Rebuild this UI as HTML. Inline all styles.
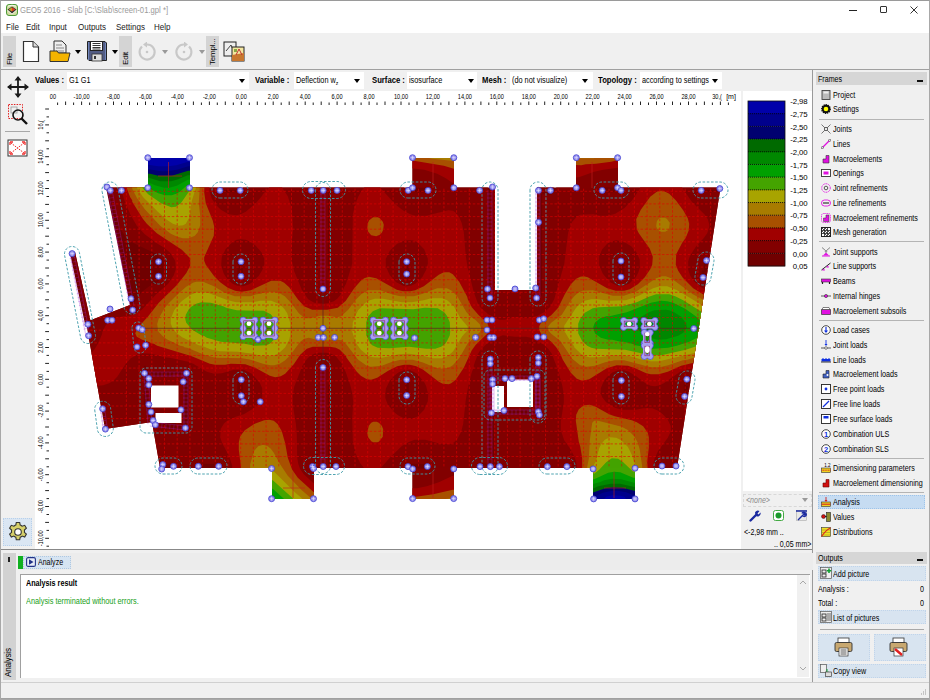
<!DOCTYPE html>
<html><head><meta charset="utf-8">
<style>
*{box-sizing:border-box;margin:0;padding:0}
html,body{width:930px;height:700px;overflow:hidden;background:#f0f0f0;font-family:"Liberation Sans",sans-serif;color:#000}
.a{position:absolute}
.t{position:absolute;white-space:nowrap;font-size:8.6px;line-height:10px;transform-origin:0 0;transform:scaleX(0.85)}
.b{font-weight:bold}
.vl{position:absolute;background:#d4d4d4}
.vt{position:absolute;white-space:nowrap;font-size:8px;transform:rotate(-90deg);transform-origin:0 0;letter-spacing:-0.2px}
.dd{position:absolute;background:#fff;height:17px;top:72px}
.arr{position:absolute;width:0;height:0;border-left:3px solid transparent;border-right:3px solid transparent;border-top:4px solid #000}
.rp .t{font-size:8.6px;transform:scaleX(0.835)}
.lb{font-size:9px!important;transform:scaleX(0.855)!important}
</style></head><body>
<div class="a" style="left:0;top:0;width:930px;height:700px;border:1px solid #a8a8a8;border-top-color:#9a9a9a;pointer-events:none;z-index:50"></div>
<!-- title bar -->
<div class="a" style="left:0;top:0;width:930px;height:33px;background:#fff"></div>
<svg class="a" style="left:5.5px;top:3.5px" width="12" height="12" viewBox="0 0 12 12">
<rect x="0.5" y="0.5" width="11" height="11" rx="2.5" fill="#d0dca0" stroke="#4c9a38" stroke-width="1"/>
<path d="M1.5 5.5L6 2.5L10.5 5.5L6 9.5Z" fill="#333"/>
<path d="M2.6 5.4L6 3.2V7.6Z" fill="#c89a20"/><path d="M6 3.2L9.4 5.4L6 7.6Z" fill="#e03a20"/>
<path d="M1.5 6.5L6 10L10.5 6.5" fill="none" stroke="#eee" stroke-width="0.8"/>
<path d="M2 2.2L6 1.2L10 2.2" fill="none" stroke="#fff" stroke-width="0.8"/>
</svg>
<div class="t" style="left:20px;top:5px;color:#9a9a9a;font-size:9.6px;transform:scaleX(0.8)">GEO5 2016 - Slab [C:\Slab\screen-01.gpl *]</div>
<div class="a" style="left:849px;top:10px;width:8px;height:1px;background:#222"></div>
<div class="a" style="left:880px;top:6px;width:7px;height:7px;border:1px solid #333;border-radius:1px"></div>
<svg class="a" style="left:910px;top:6px" width="8" height="8"><path d="M0.5 0.5L7.5 7.5M7.5 0.5L0.5 7.5" stroke="#333" stroke-width="1"/></svg>
<!-- menu -->
<div class="t" style="left:6px;top:22px;font-size:9px;transform:scaleX(0.89);color:#222">File</div>
<div class="t" style="left:26px;top:22px;font-size:9px;transform:scaleX(0.89);color:#222">Edit</div>
<div class="t" style="left:49px;top:22px;font-size:9px;transform:scaleX(0.89);color:#222">Input</div>
<div class="t" style="left:78px;top:22px;font-size:9px;transform:scaleX(0.89);color:#222">Outputs</div>
<div class="t" style="left:116px;top:22px;font-size:9px;transform:scaleX(0.89);color:#222">Settings</div>
<div class="t" style="left:154px;top:22px;font-size:9px;transform:scaleX(0.89);color:#222">Help</div>
<!-- toolbar -->
<div class="a" style="left:0;top:33px;width:930px;height:36px;background:#f0f0f0"></div>
<div class="a" style="left:0;top:69px;width:930px;height:1px;background:#a0a0a0"></div>
<div class="vl" style="left:3px;top:36px;width:13px;height:31px"></div>
<div class="vt" style="left:5px;top:65px;font-size:8px">File</div>
<div class="vl" style="left:119px;top:36px;width:13px;height:31px"></div>
<div class="vt" style="left:121px;top:65px;font-size:8px">Edit</div>
<div class="vl" style="left:206px;top:36px;width:13px;height:31px"></div>
<div class="vt" style="left:208px;top:65px;font-size:8px">Templ...</div>
<svg class="a" style="left:22px;top:40px" width="18" height="23" viewBox="0 0 18 23"><path d="M1.5 1.5H11L16.5 7V21.5H1.5Z" fill="#fff" stroke="#333" stroke-width="1.2"/><path d="M11 1.5V7H16.5" fill="#ddd" stroke="#333" stroke-width="1"/></svg>
<svg class="a" style="left:49px;top:40px" width="22" height="23" viewBox="0 0 22 23"><path d="M5 1H13L17 5V13H5Z" fill="#eee" stroke="#333"/><path d="M7 5H13M7 8H15M7 11H15" stroke="#888"/><path d="M1 11H8L9.5 13H21L19 21.5H1Z" fill="#f4b400" stroke="#333"/></svg>
<div class="arr" style="left:75px;top:50px"></div>
<svg class="a" style="left:86px;top:40px" width="22" height="22" viewBox="0 0 22 22"><path d="M1.5 1.5H19L20.5 3V20.5H3L1.5 19Z" fill="#525c84" stroke="#222"/><rect x="4.5" y="1.5" width="12" height="9" fill="#fff" stroke="#222" stroke-width="1"/><path d="M6.5 3.5H14.5M6.5 5.5H14.5M6.5 7.5H14.5M6.5 9H14.5" stroke="#333" stroke-width="1"/><path d="M2.5 2V20M19.5 3V20" stroke="#7a90c8" stroke-width="0.8"/><rect x="6" y="14" width="10" height="7" fill="#ddd" stroke="#333" stroke-width="0.8"/><rect x="8" y="16" width="2" height="3" fill="#333"/></svg>
<div class="arr" style="left:112px;top:50px"></div>
<svg class="a" style="left:137px;top:42px" width="20" height="20" viewBox="0 0 20 20"><path d="M5 4.5 A7.5 7.5 0 1 0 10 2.5" fill="none" stroke="#c8c8c8" stroke-width="2.2"/><path d="M10 -0.5 L6 2.5 L10 5.5Z" fill="#c8c8c8"/><circle cx="10" cy="10" r="1.3" fill="#c8c8c8"/></svg>
<div class="arr" style="left:162px;top:50px;border-top-color:#999"></div>
<svg class="a" style="left:174px;top:42px" width="20" height="20" viewBox="0 0 20 20"><path d="M15 4.5 A7.5 7.5 0 1 1 10 2.5" fill="none" stroke="#c8c8c8" stroke-width="2.2"/><path d="M10 -0.5 L14 2.5 L10 5.5Z" fill="#c8c8c8"/><circle cx="10" cy="10" r="1.3" fill="#c8c8c8"/></svg>
<div class="arr" style="left:199px;top:50px;border-top-color:#999"></div>
<svg class="a" style="left:223px;top:41px" width="23" height="22" viewBox="0 0 23 22"><rect x="1" y="1" width="12" height="14" fill="#eee" stroke="#222"/><path d="M3 10L8 4L11 11" stroke="#444" fill="none"/><rect x="9" y="6" width="12" height="14" fill="#f4e6a0" stroke="#222"/><path d="M9 14L21 12V20H9Z" fill="#c87830"/><path d="M13 14L16 8L19 14" stroke="#c03030" fill="none"/><rect x="11" y="8" width="3" height="3" fill="#8a4" /></svg>
<!-- main area left tool column -->
<svg class="a" style="left:7px;top:76px" width="22" height="22" viewBox="0 0 22 22"><path d="M11 1V21M1 11H21" stroke="#1a1a1a" stroke-width="1.8"/><path d="M11 0L7.5 4.5H14.5Z M11 22L7.5 17.5H14.5Z M0 11L4.5 7.5V14.5Z M22 11L17.5 7.5V14.5Z" fill="#1a1a1a"/></svg>
<svg class="a" style="left:7px;top:103px" width="22" height="22" viewBox="0 0 22 22"><rect x="1.5" y="1.5" width="14" height="14" fill="none" stroke="#e02020" stroke-dasharray="1.5 1.2"/><rect x="4" y="4" width="6" height="6" fill="none" stroke="#999" stroke-width="0.8"/><circle cx="11" cy="12" r="5" fill="none" stroke="#111" stroke-width="1.6"/><path d="M14.5 15.5L20 21" stroke="#111" stroke-width="2.4"/></svg>
<div class="a" style="left:5px;top:131px;width:25px;height:1px;background:#a8a8a8"></div>
<svg class="a" style="left:7px;top:139px" width="22" height="18" viewBox="0 0 22 18"><rect x="1" y="1" width="19" height="16" fill="#fff" stroke="#333" stroke-width="1"/><path d="M4 4L17 14M17 4L4 14" stroke="#f03030" stroke-width="1" stroke-dasharray="1.5 1"/><path d="M3 3h3M3 3v3M18 3h-3M18 3v3M3 15h3M3 15v-3M18 15h-3M18 15v-3" stroke="#f03030" stroke-width="1.3"/></svg>
<div class="a" style="left:3px;top:518px;width:29px;height:28px;background:#dae6f3;border:1px dotted #b8d0ea"></div>
<svg class="a" style="left:7px;top:521px" width="22" height="22" viewBox="0 0 22 22"><path id="gear" d="M9.3 1.5h3.4l0.5 2.6a7.5 7.5 0 0 1 2 1.1l2.5-0.9 1.7 2.9-2 1.8a7.5 7.5 0 0 1 0 2.3l2 1.8-1.7 2.9-2.5-0.9a7.5 7.5 0 0 1-2 1.1l-0.5 2.6h-3.4l-0.5-2.6a7.5 7.5 0 0 1-2-1.1l-2.5 0.9-1.7-2.9 2-1.8a7.5 7.5 0 0 1 0-2.3l-2-1.8 1.7-2.9 2.5 0.9a7.5 7.5 0 0 1 2-1.1z" fill="#d6d06a" stroke="#333" stroke-width="1.1"/><circle cx="11" cy="11" r="3.3" fill="#fff" stroke="#333" stroke-width="1.1"/></svg>
<!-- control bar -->
<div class="t b lb" style="left:34.5px;top:75px">Values :</div>
<div class="dd" style="left:67px;width:182px"></div>
<div class="t" style="left:69px;top:75px">G1 G1</div>
<div class="arr" style="left:239px;top:79px"></div>
<div class="t b lb" style="left:255.3px;top:75px">Variable :</div>
<div class="dd" style="left:294px;width:70px"></div>
<div class="t" style="left:296px;top:75px">Deflection w<sub style="font-size:6px;vertical-align:-2px">z</sub></div>
<div class="arr" style="left:354px;top:79px"></div>
<div class="t b lb" style="left:371.5px;top:75px">Surface :</div>
<div class="dd" style="left:407px;width:70px"></div>
<div class="t" style="left:409px;top:75px">isosurface</div>
<div class="arr" style="left:468px;top:79px"></div>
<div class="t b lb" style="left:482.3px;top:75px">Mesh :</div>
<div class="dd" style="left:510px;width:83px"></div>
<div class="t" style="left:512px;top:75px">(do not visualize)</div>
<div class="arr" style="left:582px;top:79px"></div>
<div class="t b lb" style="left:597.5px;top:75px">Topology :</div>
<div class="dd" style="left:640px;width:82px"></div>
<div class="t" style="left:642px;top:75px">according to settings</div>
<div class="arr" style="left:712px;top:79px"></div>
<!-- drawing area -->
<div class="a" style="left:35px;top:91px;width:706px;height:458px;background:#fff"></div>
<svg class="a" style="left:0;top:0" width="930" height="700" viewBox="0 0 930 700">
<path d="M57.6 102.5V105 M65.6 101.5V105 M73.6 102.5V105 M81.6 101.5V105 M89.6 102.5V105 M97.6 101.5V105 M105.6 102.5V105 M113.5 101.5V105 M121.5 102.5V105 M129.5 101.5V105 M137.5 102.5V105 M145.5 101.5V105 M153.5 102.5V105 M161.4 101.5V105 M169.4 102.5V105 M177.4 101.5V105 M185.4 102.5V105 M193.4 101.5V105 M201.4 102.5V105 M209.4 101.5V105 M217.3 102.5V105 M225.3 101.5V105 M233.3 102.5V105 M241.3 101.5V105 M249.3 102.5V105 M257.3 101.5V105 M265.3 102.5V105 M273.2 101.5V105 M281.2 102.5V105 M289.2 101.5V105 M297.2 102.5V105 M305.2 101.5V105 M313.2 102.5V105 M321.2 101.5V105 M329.1 102.5V105 M337.1 101.5V105 M345.1 102.5V105 M353.1 101.5V105 M361.1 102.5V105 M369.1 101.5V105 M377.0 102.5V105 M385.0 101.5V105 M393.0 102.5V105 M401.0 101.5V105 M409.0 102.5V105 M417.0 101.5V105 M425.0 102.5V105 M432.9 101.5V105 M440.9 102.5V105 M448.9 101.5V105 M456.9 102.5V105 M464.9 101.5V105 M472.9 102.5V105 M480.9 101.5V105 M488.8 102.5V105 M496.8 101.5V105 M504.8 102.5V105 M512.8 101.5V105 M520.8 102.5V105 M528.8 101.5V105 M536.7 102.5V105 M544.7 101.5V105 M552.7 102.5V105 M560.7 101.5V105 M568.7 102.5V105 M576.7 101.5V105 M584.7 102.5V105 M592.6 101.5V105 M600.6 102.5V105 M608.6 101.5V105 M616.6 102.5V105 M624.6 101.5V105 M632.6 102.5V105 M640.5 101.5V105 M648.5 102.5V105 M656.5 101.5V105 M664.5 102.5V105 M672.5 101.5V105 M680.5 102.5V105 M688.5 101.5V105 M696.4 102.5V105 M704.4 101.5V105 M712.4 102.5V105 M720.4 101.5V105 M728.4 102.5V105 M46.5 546.2H49 M45.2 538.3H49 M46.5 530.4H49 M45.2 522.4H49 M46.5 514.5H49 M45.2 506.5H49 M46.5 498.6H49 M45.2 490.6H49 M46.5 482.7H49 M45.2 474.7H49 M46.5 466.8H49 M45.2 458.8H49 M46.5 450.9H49 M45.2 442.9H49 M46.5 434.9H49 M45.2 427.0H49 M46.5 419.1H49 M45.2 411.1H49 M46.5 403.2H49 M45.2 395.2H49 M46.5 387.2H49 M45.2 379.3H49 M46.5 371.4H49 M45.2 363.4H49 M46.5 355.4H49 M45.2 347.5H49 M46.5 339.6H49 M45.2 331.6H49 M46.5 323.7H49 M45.2 315.7H49 M46.5 307.8H49 M45.2 299.8H49 M46.5 291.9H49 M45.2 283.9H49 M46.5 275.9H49 M45.2 268.0H49 M46.5 260.1H49 M45.2 252.1H49 M46.5 244.2H49 M45.2 236.2H49 M46.5 228.2H49 M45.2 220.3H49 M46.5 212.3H49 M45.2 204.4H49 M46.5 196.5H49 M45.2 188.5H49 M46.5 180.6H49 M45.2 172.6H49 M46.5 164.7H49 M45.2 156.7H49 M46.5 148.8H49 M45.2 140.8H49 M46.5 132.8H49 M45.2 124.9H49 M46.5 116.9H49 M45.2 109.0H49" stroke="#222" stroke-width="1"/>
<text transform="translate(53.0 99.2) scale(0.82 1)" text-anchor="middle" font-family="Liberation Sans" font-size="6.9">00</text>
<text transform="translate(81.6 99.2) scale(0.82 1)" text-anchor="middle" font-family="Liberation Sans" font-size="6.9">-10,00</text>
<text transform="translate(113.5 99.2) scale(0.82 1)" text-anchor="middle" font-family="Liberation Sans" font-size="6.9">-8,00</text>
<text transform="translate(145.5 99.2) scale(0.82 1)" text-anchor="middle" font-family="Liberation Sans" font-size="6.9">-6,00</text>
<text transform="translate(177.4 99.2) scale(0.82 1)" text-anchor="middle" font-family="Liberation Sans" font-size="6.9">-4,00</text>
<text transform="translate(209.4 99.2) scale(0.82 1)" text-anchor="middle" font-family="Liberation Sans" font-size="6.9">-2,00</text>
<text transform="translate(241.3 99.2) scale(0.82 1)" text-anchor="middle" font-family="Liberation Sans" font-size="6.9">0,00</text>
<text transform="translate(273.2 99.2) scale(0.82 1)" text-anchor="middle" font-family="Liberation Sans" font-size="6.9">2,00</text>
<text transform="translate(305.2 99.2) scale(0.82 1)" text-anchor="middle" font-family="Liberation Sans" font-size="6.9">4,00</text>
<text transform="translate(337.1 99.2) scale(0.82 1)" text-anchor="middle" font-family="Liberation Sans" font-size="6.9">6,00</text>
<text transform="translate(369.1 99.2) scale(0.82 1)" text-anchor="middle" font-family="Liberation Sans" font-size="6.9">8,00</text>
<text transform="translate(401.0 99.2) scale(0.82 1)" text-anchor="middle" font-family="Liberation Sans" font-size="6.9">10,00</text>
<text transform="translate(432.9 99.2) scale(0.82 1)" text-anchor="middle" font-family="Liberation Sans" font-size="6.9">12,00</text>
<text transform="translate(464.9 99.2) scale(0.82 1)" text-anchor="middle" font-family="Liberation Sans" font-size="6.9">14,00</text>
<text transform="translate(496.8 99.2) scale(0.82 1)" text-anchor="middle" font-family="Liberation Sans" font-size="6.9">16,00</text>
<text transform="translate(528.8 99.2) scale(0.82 1)" text-anchor="middle" font-family="Liberation Sans" font-size="6.9">18,00</text>
<text transform="translate(560.7 99.2) scale(0.82 1)" text-anchor="middle" font-family="Liberation Sans" font-size="6.9">20,00</text>
<text transform="translate(592.6 99.2) scale(0.82 1)" text-anchor="middle" font-family="Liberation Sans" font-size="6.9">22,00</text>
<text transform="translate(624.6 99.2) scale(0.82 1)" text-anchor="middle" font-family="Liberation Sans" font-size="6.9">24,00</text>
<text transform="translate(656.5 99.2) scale(0.82 1)" text-anchor="middle" font-family="Liberation Sans" font-size="6.9">26,00</text>
<text transform="translate(688.5 99.2) scale(0.82 1)" text-anchor="middle" font-family="Liberation Sans" font-size="6.9">28,00</text>
<text transform="translate(717.0 99.2) scale(0.82 1)" text-anchor="middle" font-family="Liberation Sans" font-size="6.9">30,(</text>
<text x="731" y="99.2" text-anchor="middle" font-family="Liberation Sans" font-size="7">[m]</text>
<text transform="translate(42.6 538.3) rotate(-90) scale(0.82 1)" text-anchor="middle" font-family="Liberation Sans" font-size="6.9">-10,00</text>
<text transform="translate(42.6 506.5) rotate(-90) scale(0.82 1)" text-anchor="middle" font-family="Liberation Sans" font-size="6.9">-8,00</text>
<text transform="translate(42.6 474.7) rotate(-90) scale(0.82 1)" text-anchor="middle" font-family="Liberation Sans" font-size="6.9">-6,00</text>
<text transform="translate(42.6 442.9) rotate(-90) scale(0.82 1)" text-anchor="middle" font-family="Liberation Sans" font-size="6.9">-4,00</text>
<text transform="translate(42.6 411.1) rotate(-90) scale(0.82 1)" text-anchor="middle" font-family="Liberation Sans" font-size="6.9">-2,00</text>
<text transform="translate(42.6 379.3) rotate(-90) scale(0.82 1)" text-anchor="middle" font-family="Liberation Sans" font-size="6.9">0,00</text>
<text transform="translate(42.6 347.5) rotate(-90) scale(0.82 1)" text-anchor="middle" font-family="Liberation Sans" font-size="6.9">2,00</text>
<text transform="translate(42.6 315.7) rotate(-90) scale(0.82 1)" text-anchor="middle" font-family="Liberation Sans" font-size="6.9">4,00</text>
<text transform="translate(42.6 283.9) rotate(-90) scale(0.82 1)" text-anchor="middle" font-family="Liberation Sans" font-size="6.9">6,00</text>
<text transform="translate(42.6 252.1) rotate(-90) scale(0.82 1)" text-anchor="middle" font-family="Liberation Sans" font-size="6.9">8,00</text>
<text transform="translate(42.6 220.3) rotate(-90) scale(0.82 1)" text-anchor="middle" font-family="Liberation Sans" font-size="6.9">10,00</text>
<text transform="translate(42.6 188.5) rotate(-90) scale(0.82 1)" text-anchor="middle" font-family="Liberation Sans" font-size="6.9">12,00</text>
<text transform="translate(42.6 156.7) rotate(-90) scale(0.82 1)" text-anchor="middle" font-family="Liberation Sans" font-size="6.9">14,00</text>
<text transform="translate(42.6 124.9) rotate(-90) scale(0.82 1)" text-anchor="middle" font-family="Liberation Sans" font-size="6.9">16,(</text>
<defs><clipPath id="slab"><path d="M106 187.5L495 187.5L495 290L537 290L537 187.5L720.5 187.5L677 468L160 468L152 422L105 429L86 322L130 305ZM148 158H190V188H148ZM412.5 158H454V188H412.5ZM576 158H618V188H576ZM272 468H314V499H272ZM412.5 468H454V499H412.5ZM593 468H635V499H593ZM70 253L75 252L91 323L85 324Z"/></clipPath><clipPath id="mainc"><path d="M106 187.5L495 187.5L495 290L537 290L537 187.5L720.5 187.5L677 468L160 468L152 422L105 429L86 322L130 305Z"/></clipPath></defs>
<g clip-path="url(#slab)">
<rect x="60" y="150" width="670" height="360" fill="#700000"/>
<path fill="#820000" fill-rule="evenodd" d="M411.8 466.2L410.2 466.2L409.8 467.8L408.2 467.8L408.2 470.2L409.8 469.8L410.2 467.8L411.8 467.8ZM214.2 466.2L214.2 467.8L215.8 467.8L215.8 466.2ZM200.2 466.2L200.2 467.8L201.8 467.8L201.8 466.2ZM170.2 466.2L170.2 467.8L171.8 467.8L171.8 466.2ZM168.2 424.2L168.2 425.8L169.8 425.8L169.8 424.2ZM102.2 424.2L102.2 425.8L103.8 425.8L103.8 424.2ZM185.2 418.8L184.8 419.2L185.8 419.8ZM146.2 402.2L146.8 403.8L147.2 403.2ZM685.8 393.8L684.2 395.2L685.2 396.2ZM146.8 376.2L146.2 389.2L147.2 388.8L148.2 389.8L148.2 406.2L150.2 406.8L150.2 411.2L151.2 410.8L152.2 411.8L152.2 415.8L154.2 415.8L154.2 414.2L155.8 413.8L156.2 415.2L157.8 415.2L158.8 417.2L160.8 418.8L159.8 420.2L158.2 420.2L157.8 418.2L156.2 418.2L156.2 419.8L154.2 420.2L154.2 421.8L155.8 421.8L156.2 419.8L157.8 419.8L158.2 421.8L159.8 421.8L160.2 419.8L177.8 419.8L178.2 421.2L176.2 422.2L176.2 425.8L183.8 425.8L183.8 379.2L184.8 376.2L183.2 374.8L180.2 374.2L171.8 374.2L171.8 375.2L170.2 376.2ZM179.2 417.2L179.8 419.2L178.2 420.2L177.8 418.2ZM180.8 415.2L181.8 416.8L180.2 417.8L179.8 416.2ZM150.8 404.2L152.2 404.8L152.2 406.2L151.2 407.2L150.2 406.8ZM153.2 401.8L154.2 402.8L153.8 404.8L151.8 403.8ZM155.2 399.8L156.8 400.8L155.8 402.8L153.8 401.8ZM159.8 395.8L160.8 397.2L156.8 400.8L155.8 398.8L157.8 397.8L158.8 395.8ZM158.2 393.8L159.2 393.2L162.8 395.8L160.2 396.2L158.2 394.8ZM157.2 391.2L158.2 392.2L157.8 393.8L156.2 393.2ZM154.2 390.2L155.8 389.8L156.2 391.2L155.2 391.8ZM70.2 342.2L70.2 343.8L71.8 343.8L71.8 342.2ZM78.2 340.2L78.2 341.8L79.8 341.8L79.8 340.2ZM82.2 338.2L82.2 339.8L83.8 339.8L83.8 338.2ZM84.2 328.8L85.8 329.2L85.8 328.2ZM74.8 276.2L75.2 277.2L75.8 276.8ZM746.2 268.2L746.2 269.8L747.8 269.8L747.8 268.2ZM706.2 264.2L706.2 265.8L707.8 265.8L707.8 264.2ZM708.2 260.2L708.2 261.8L735.8 261.8L735.8 260.2ZM82.2 218.8L82.8 219.8L83.2 219.2ZM80.2 216.8L80.2 217.8L81.2 217.8L81.2 216.8ZM106.8 190.2L106.8 191.2L107.8 191.2L107.8 190.2ZM408.2 185.8L408.2 189.8L411.8 189.8L411.8 188.2L410.2 188.2L409.8 186.2ZM702.2 80.2L702.2 189.8L872.8 189.8L888.2 178.8L894.2 172.2L898.2 165.8L900.2 159.2L899.8 150.2L897.2 144.2L892.2 137.2L884.8 130.2L877.8 125.2L855.8 113.8L839.2 107.2L822.2 101.8L786.2 92.8L747.8 85.8ZM2.2 -0.8L2.2 1.8L0.2 2.2L0.2 3.8L1.8 3.8L2.2 5.8L3.8 5.8L3.8 4.2L1.8 3.8L1.8 2.2L3.2 1.2L6.2 4.2L6.2 7.8L4.2 8.2L4.2 9.8L5.8 9.8L6.2 11.8L7.8 11.8L8.2 13.8L9.8 13.8L9.8 12.2L8.2 12.2L7.8 10.2L5.8 9.8L5.8 8.2L7.2 7.2L12.2 12.2L12.2 15.8L10.2 16.2L10.2 17.8L11.8 17.8L12.2 19.8L13.8 19.8L13.8 18.2L11.8 17.8L11.8 16.2L13.2 15.2L16.2 18.2L16.2 21.8L14.2 22.2L14.2 23.8L15.8 23.8L16.2 25.8L17.8 25.8L18.2 27.8L19.8 27.8L19.8 26.2L18.2 26.2L17.8 24.2L15.8 23.8L15.8 22.2L17.2 21.2L22.2 26.2L22.2 29.8L20.2 30.2L20.2 31.8L21.8 31.8L22.2 33.8L23.8 33.8L23.8 32.2L21.8 31.8L21.8 30.2L23.2 29.2L26.2 32.2L26.2 35.8L24.2 36.2L24.2 37.8L25.8 37.8L26.2 39.8L27.8 39.8L28.2 41.8L29.8 41.8L29.8 40.2L28.2 40.2L27.8 38.2L25.8 37.8L25.8 36.2L27.2 35.2L32.2 40.2L32.2 43.8L30.2 44.2L30.2 45.8L31.8 45.8L32.2 47.8L33.8 47.8L33.8 46.2L31.8 45.8L31.8 44.2L33.2 43.2L36.2 46.2L36.2 49.8L34.2 50.2L34.2 51.8L35.8 51.8L36.2 53.8L37.8 53.8L38.2 55.8L39.8 55.8L39.8 54.2L38.2 54.2L37.8 52.2L35.8 51.8L35.8 50.2L37.2 49.2L42.2 54.2L42.2 57.8L40.2 58.2L40.2 59.8L41.8 59.8L42.2 61.8L43.8 61.8L43.8 60.2L41.8 59.8L41.8 58.2L43.2 57.2L46.2 60.2L46.2 63.8L44.2 64.2L44.2 65.8L45.8 65.8L46.2 67.8L47.8 67.8L48.2 69.8L49.8 69.8L49.8 68.2L48.2 68.2L47.8 66.2L45.8 65.8L45.8 64.2L47.2 63.2L52.2 68.2L52.2 71.8L50.2 72.2L50.2 73.8L51.8 73.8L52.2 75.8L53.8 75.8L53.8 74.2L51.8 73.8L51.8 72.2L53.2 71.2L56.2 74.2L56.2 77.8L54.2 78.2L54.2 79.8L55.8 79.8L56.2 81.8L57.8 81.8L58.2 83.8L59.8 83.8L59.8 82.2L58.2 82.2L57.8 80.2L55.8 79.8L55.8 78.2L57.2 77.2L62.2 82.2L62.2 85.8L60.2 86.2L60.2 87.8L61.8 87.8L62.2 89.8L63.8 89.8L63.8 88.2L61.8 87.8L61.8 86.2L63.2 85.2L66.2 88.2L66.2 91.8L64.2 92.2L64.2 93.8L65.8 93.8L66.2 95.8L67.8 95.8L68.2 97.8L69.8 97.8L69.8 96.2L68.2 96.2L67.8 94.2L65.8 93.8L65.8 92.2L67.2 91.2L72.2 96.2L72.2 99.8L70.2 100.2L70.2 101.8L71.8 101.8L72.2 103.8L73.8 103.8L73.8 102.2L71.8 101.8L71.8 100.2L73.2 99.2L76.2 102.2L76.2 105.8L74.2 106.2L74.2 107.8L75.8 107.8L76.2 109.8L77.8 109.8L78.2 111.8L79.8 111.8L79.8 110.2L78.2 110.2L77.8 108.2L75.8 107.8L75.8 106.2L77.2 105.2L82.2 110.2L82.2 113.8L80.2 114.2L80.2 115.8L81.8 115.8L82.2 117.8L83.8 117.8L83.8 116.2L81.8 115.8L81.8 114.2L83.2 113.2L86.2 116.2L86.2 119.8L84.2 120.2L84.2 121.8L85.8 121.8L86.2 123.8L87.8 123.8L88.2 125.8L89.8 125.8L89.8 124.2L88.2 124.2L87.8 122.2L85.8 121.8L85.8 120.2L87.2 119.2L92.2 124.2L92.2 127.8L90.2 128.2L90.2 129.8L91.8 129.8L92.2 131.8L93.8 131.8L93.8 130.2L91.8 129.8L91.8 128.2L93.2 127.2L96.2 130.2L96.2 133.8L94.2 134.2L94.2 135.8L95.8 135.8L96.2 137.8L97.8 137.8L98.2 139.8L99.8 139.8L99.8 138.2L98.2 138.2L97.8 136.2L95.8 135.8L95.8 134.2L97.2 133.2L102.2 138.2L102.2 141.8L100.2 142.2L100.2 143.8L101.8 143.8L102.2 145.8L103.8 145.8L103.8 144.2L101.8 143.8L101.8 142.2L103.2 141.2L106.2 144.2L106.2 147.8L104.2 148.2L104.2 149.8L105.8 149.8L106.2 151.8L108.2 152.2L108.2 188.8L109.2 188.2L110.2 189.8L110.2 196.8L111.2 196.2L112.2 197.8L112.2 205.8L114.2 207.2L114.2 211.8L116.2 214.8L117.2 220.8L120.2 228.2L125.8 237.2L130.8 241.8L155.8 253.8L162.2 258.8L163.8 262.2L163.8 272.2L162.2 277.2L157.8 281.8L149.2 286.2L142.8 291.2L138.2 296.8L136.2 300.8L132.2 303.8L129.8 303.8L127.8 302.8L126.2 300.8L122.2 301.2L121.2 298.8L118.2 298.8L116.8 296.2L114.8 296.8L111.2 293.2L111.2 292.2L102.2 292.2L100.8 290.2L100.2 291.8L102.2 292.2L102.2 295.8L100.8 296.8L99.8 295.8L99.8 292.8L98.2 287.8L93.2 285.2L93.8 282.8L92.2 277.8L91.2 261.8L91.8 250.2L93.2 247.2L93.2 243.8L92.2 242.8L92.8 238.2L90.8 235.8L90.8 233.2L87.2 229.8L87.2 226.8L86.2 226.8L85.2 224.8L75.2 215.2L76.2 213.8L77.8 213.8L78.2 215.8L79.2 215.8L77.8 212.8L76.2 212.2L75.8 214.2L72.2 214.2L71.8 212.2L70.2 212.2L70.2 213.8L72.2 214.2L72.2 255.8L70.2 256.2L70.2 257.2L71.2 257.8L72.2 255.8L76.2 255.8L74.2 257.2L74.2 265.8L72.8 266.2L72.8 267.2L73.8 267.2L74.2 265.8L76.2 265.8L77.2 264.8L78.2 265.2L78.2 266.2L76.2 267.2L76.2 275.2L76.8 274.8L78.2 275.8L78.2 285.2L79.2 284.8L80.2 285.8L80.2 297.2L81.2 296.8L82.2 297.8L82.2 306.8L84.2 307.8L84.2 316.2L85.2 315.8L86.2 317.2L86.2 326.8L88.2 327.8L88.8 339.2L87.8 340.2L84.8 340.2L83.8 342.2L80.8 342.2L79.8 344.2L72.8 344.2L71.8 346.2L64.2 346.2L63.8 344.2L62.2 344.2L62.2 345.8L63.8 345.8L64.8 346.8L63.8 348.2L52.2 348.2L51.8 346.2L50.2 346.2L50.2 347.8L51.8 347.8L52.8 348.8L51.2 350.8L40.2 350.2L39.8 348.2L38.2 348.2L38.2 349.8L39.8 349.8L40.8 350.8L39.2 352.8L28.2 352.2L27.8 350.2L26.2 350.2L26.2 351.8L27.8 351.8L28.8 352.8L27.2 354.8L16.2 354.2L15.8 352.2L14.2 352.2L14.2 353.8L15.8 353.8L16.8 354.8L15.2 356.8L4.2 356.2L3.8 354.2L2.2 354.2L2.2 355.8L3.8 355.8L4.8 357.2L3.2 358.8L-0.8 358.2L-0.8 417.8L2.2 417.8L3.2 418.8L2.2 419.8L-0.8 419.8L-0.8 429.8L5.8 429.8L6.2 431.8L7.8 431.8L7.8 430.2L6.2 430.2L5.2 429.2L6.8 427.2L17.8 427.8L18.2 429.8L19.8 429.8L19.8 428.2L18.2 428.2L17.2 427.2L18.8 425.2L29.8 425.8L30.2 427.8L31.8 427.8L31.8 426.2L30.2 426.2L29.2 425.2L30.8 423.2L41.8 423.8L42.2 425.8L43.8 425.8L43.8 424.2L42.2 424.2L41.2 423.2L42.8 421.2L53.8 421.8L54.2 423.8L55.8 423.8L55.8 422.2L54.2 422.2L53.2 421.2L54.8 419.2L65.8 419.8L66.2 421.8L67.8 421.8L67.8 420.2L66.2 420.2L65.2 419.2L66.8 417.2L77.8 417.8L78.2 419.8L79.8 419.8L79.8 418.2L78.2 418.2L77.2 417.2L78.8 415.2L85.8 415.8L86.2 417.8L87.8 417.8L87.8 416.2L86.2 416.2L85.2 415.2L86.8 413.2L93.8 413.8L94.2 415.8L95.8 415.8L95.8 414.2L94.2 414.2L93.2 412.8L94.2 411.8L97.8 411.8L98.2 413.8L99.8 413.8L99.8 412.2L98.2 412.2L97.2 410.8L98.2 409.8L101.2 409.8L101.8 407.8L102.8 407.8L104.8 410.8L104.2 423.2L105.2 422.8L106.2 423.8L106.2 483.8L102.2 484.2L102.2 485.8L100.2 486.2L100.2 489.8L98.2 490.2L98.2 491.8L96.2 492.2L95.8 494.2L94.2 494.2L94.2 497.8L92.2 498.2L91.8 500.2L90.2 500.2L90.2 503.8L88.2 504.2L88.2 505.8L86.2 506.2L85.8 508.2L84.2 508.2L84.2 511.8L82.2 512.2L81.8 514.2L80.2 514.2L80.2 517.8L78.2 518.2L78.2 519.8L76.2 520.2L75.8 522.2L74.2 522.2L74.2 525.8L72.2 526.2L71.8 528.2L70.2 528.2L70.2 531.8L68.2 532.2L68.2 533.8L66.2 534.2L65.8 536.2L64.2 536.2L64.2 539.8L62.2 540.2L61.8 542.2L60.2 542.2L60.2 545.8L58.2 546.2L58.2 547.8L56.2 548.2L55.8 550.2L54.2 550.2L54.2 553.8L52.2 554.2L51.8 556.2L50.2 556.2L50.2 559.8L48.2 560.2L48.2 561.8L46.2 562.2L45.8 564.2L44.2 564.2L44.2 567.8L42.2 568.2L41.8 570.2L40.2 570.2L40.2 573.8L38.2 574.2L38.2 575.8L36.2 576.2L35.8 578.2L34.2 578.2L34.2 581.8L32.2 582.2L31.8 584.2L30.2 584.2L30.2 587.8L28.2 588.2L28.2 589.8L26.2 590.2L25.8 592.2L24.2 592.2L24.2 595.8L22.2 596.2L21.8 598.2L20.2 598.2L20.2 601.8L18.2 602.2L18.2 603.8L16.2 604.2L15.8 606.2L14.2 606.2L14.2 609.8L12.2 610.2L11.8 612.2L10.2 612.2L10.2 615.8L8.2 616.2L8.2 617.8L6.2 618.2L5.8 620.2L4.2 620.2L4.2 623.8L2.2 624.2L1.8 626.2L0.2 626.2L0.2 629.8L-0.8 630.2L-0.8 632.2L1.8 629.8L1.8 626.2L3.2 626.2L5.8 623.8L5.8 620.2L7.2 620.2L11.8 615.8L11.8 612.2L13.2 612.2L15.8 609.8L15.8 606.2L17.2 606.2L21.8 601.8L21.8 598.2L23.2 598.2L25.8 595.8L25.8 592.2L27.2 592.2L31.8 587.8L31.8 584.2L33.2 584.2L35.8 581.8L35.8 578.2L37.2 578.2L41.8 573.8L41.8 570.2L43.2 570.2L45.8 567.8L45.8 564.2L47.2 564.2L51.8 559.8L51.8 556.2L53.2 556.2L55.8 553.8L55.8 550.2L57.2 550.2L61.8 545.8L61.8 542.2L63.2 542.2L65.8 539.8L65.8 536.2L67.2 536.2L71.8 531.8L71.8 528.2L73.2 528.2L75.8 525.8L75.8 522.2L77.2 522.2L81.8 517.8L81.8 514.2L83.2 514.2L85.8 511.8L85.8 508.2L87.2 508.2L91.8 503.8L91.8 500.2L93.2 500.2L95.8 497.8L95.8 494.2L97.2 494.2L101.8 489.8L102.2 485.8L103.2 486.2L106.2 483.8L108.8 483.8L110.2 481.2L114.8 481.8L116.2 479.2L120.8 479.8L122.2 477.2L126.8 477.8L128.2 475.2L132.8 475.8L134.2 473.2L138.8 473.8L140.2 471.2L144.8 471.8L146.2 469.2L150.8 469.8L152.2 467.2L154.8 467.8L156.2 465.8L160.8 466.2L159.8 464.8L160.8 463.8L172.2 463.8L174.8 466.8L174.2 629.8L176.2 630.2L176.8 635.2L174.8 636.8L173.8 635.8L173.8 634.2L172.2 634.2L172.2 635.8L174.2 636.2L174.8 641.2L172.8 642.8L171.8 641.8L171.8 640.2L170.2 640.2L170.2 641.8L172.2 642.2L172.8 647.2L171.2 648.8L169.8 647.8L169.8 646.2L168.2 646.2L168.2 647.8L170.2 648.2L170.8 655.2L168.8 656.8L167.8 655.8L167.8 654.2L165.8 653.8L165.8 466.2L164.2 466.2L164.2 661.8L166.2 662.2L166.8 669.2L164.8 670.8L163.8 669.8L163.8 668.2L162.2 668.2L162.2 669.8L164.2 670.2L164.8 675.2L162.8 676.8L161.8 675.8L161.8 674.2L160.2 674.2L160.2 675.8L162.2 676.2L162.8 683.2L160.8 684.8L159.8 683.8L159.8 682.2L158.2 682.2L158.2 683.8L160.2 684.2L160.8 691.2L158.8 692.8L157.8 691.8L157.8 690.2L156.2 690.2L156.2 691.8L158.2 692.2L158.8 697.2L156.8 698.8L155.8 697.8L155.8 696.2L154.2 696.2L154.2 697.8L156.2 698.2L156.2 700.8L811.8 700.8L811.8 698.2L813.8 697.8L813.8 696.2L812.2 696.2L811.8 694.2L810.2 694.2L809.8 692.2L808.2 692.2L808.2 693.8L809.8 693.8L810.2 695.8L812.2 696.2L812.2 697.8L810.8 698.8L805.8 693.8L805.8 690.2L807.8 689.8L807.8 688.2L806.2 688.2L805.8 686.2L804.2 686.2L804.2 687.8L806.2 688.2L806.2 689.8L804.8 690.8L801.8 687.8L801.8 684.2L803.8 683.8L803.8 682.2L802.2 682.2L801.8 680.2L800.2 680.2L799.8 678.2L798.2 678.2L798.2 679.8L799.8 679.8L800.2 681.8L802.2 682.2L802.2 683.8L800.8 684.8L795.8 679.8L795.8 676.2L797.8 675.8L797.8 674.2L796.2 674.2L795.8 672.2L794.2 672.2L794.2 673.8L796.2 674.2L796.2 675.8L794.8 676.8L791.8 673.8L791.8 670.2L793.8 669.8L793.8 668.2L792.2 668.2L791.8 666.2L790.2 666.2L789.8 664.2L788.2 664.2L788.2 665.8L789.8 665.8L790.2 667.8L792.2 668.2L792.2 669.8L790.8 670.8L785.8 665.8L785.8 662.2L787.8 661.8L787.8 660.2L786.2 660.2L785.8 658.2L784.2 658.2L784.2 659.8L786.2 660.2L786.2 661.8L784.8 662.8L781.8 659.8L781.8 656.2L783.8 655.8L783.8 654.2L782.2 654.2L781.8 652.2L780.2 652.2L779.8 650.2L778.2 650.2L778.2 651.8L779.8 651.8L780.2 653.8L782.2 654.2L782.2 655.8L780.8 656.8L775.8 651.8L775.8 648.2L777.8 647.8L777.8 646.2L776.2 646.2L775.8 644.2L774.2 644.2L774.2 645.8L776.2 646.2L776.2 647.8L774.8 648.8L771.8 645.8L771.8 642.2L773.8 641.8L773.8 640.2L772.2 640.2L771.8 638.2L770.2 638.2L769.8 636.2L768.2 636.2L768.2 637.8L769.8 637.8L770.2 639.8L772.2 640.2L772.2 641.8L770.8 642.8L765.8 637.8L765.8 634.2L767.8 633.8L767.8 632.2L766.2 632.2L765.8 630.2L764.2 630.2L764.2 631.8L766.2 632.2L766.2 633.8L764.8 634.8L761.8 631.8L761.8 628.2L763.8 627.8L763.8 626.2L762.2 626.2L761.8 624.2L760.2 624.2L759.8 622.2L758.2 622.2L758.2 623.8L759.8 623.8L760.2 625.8L762.2 626.2L762.2 627.8L760.8 628.8L755.8 623.8L755.8 620.2L757.8 619.8L757.8 618.2L756.2 618.2L755.8 616.2L754.2 616.2L754.2 617.8L756.2 618.2L756.2 619.8L754.8 620.8L751.8 617.8L751.8 614.2L753.8 613.8L753.8 612.2L752.2 612.2L751.8 610.2L750.2 610.2L749.8 608.2L748.2 608.2L748.2 609.8L749.8 609.8L750.2 611.8L752.2 612.2L752.2 613.8L750.8 614.8L745.8 609.8L745.8 606.2L747.8 605.8L747.8 604.2L746.2 604.2L745.2 601.8L762.2 592.8L779.2 581.8L791.2 572.8L803.2 562.2L822.8 554.2L841.2 545.2L863.8 531.8L881.2 518.2L894.2 505.2L898.2 500.2L894.2 500.2L894.2 497.8L905.2 497.2L906.8 499.2L905.8 500.2L904.2 500.2L904.2 501.8L905.8 501.8L906.2 499.8L917.2 499.2L918.8 501.2L917.8 502.2L916.2 502.2L916.2 503.8L917.8 503.8L918.2 501.8L930.8 501.8L930.8 442.2L919.8 441.8L920.2 440.2L930.8 440.2L930.8 436.2L929.2 435.2L930.8 433.8L930.8 420.2L923.2 420.2L921.8 419.2L922.2 417.8L930.8 417.8L930.8 411.8L920.2 411.2L920.8 409.8L930.8 409.8L930.8 316.2L924.8 316.8L923.2 315.2L924.2 313.8L930.8 313.8L930.8 298.2L928.8 298.8L927.2 297.2L928.2 295.8L929.8 295.8L929.8 294.2L928.2 294.2L927.8 296.2L914.8 296.8L913.2 295.2L914.2 293.8L915.8 293.8L915.8 292.2L913.8 291.8L914.2 289.8L925.2 289.2L926.8 291.2L925.8 292.2L924.2 292.2L924.2 293.8L925.8 293.8L926.2 291.8L930.8 291.8L930.8 236.2L923.8 235.8L924.2 234.2L930.8 234.2L930.8 192.2L700.8 191.8L699.2 189.2L699.8 71.8L698.8 72.2L697.8 71.2L697.8 68.2L699.2 67.2L700.2 69.2L701.8 69.2L701.8 68.2L699.8 67.8L699.2 62.8L700.8 61.2L702.2 62.2L702.2 63.8L703.8 63.8L703.8 62.2L701.8 61.8L701.2 56.8L703.2 55.2L704.2 56.2L704.2 57.8L705.8 57.8L705.8 56.2L703.8 55.8L703.2 50.8L705.2 49.2L706.2 50.2L706.2 51.8L707.8 51.8L707.8 50.2L705.8 49.8L705.2 44.8L707.2 43.2L708.2 44.2L708.2 45.8L709.8 45.8L709.8 44.2L707.8 43.8L707.8 40.2L708.8 39.2L710.2 40.2L710.2 41.8L711.8 41.8L711.8 40.2L709.8 39.8L709.2 32.8L711.2 31.2L712.2 32.2L712.2 33.8L713.8 33.8L713.8 32.2L711.8 31.8L711.2 26.8L713.2 25.2L714.2 26.2L714.2 27.8L715.8 27.8L715.8 26.2L713.8 25.8L713.2 20.8L715.2 19.2L716.2 20.2L716.2 21.8L717.8 21.8L717.8 20.2L715.8 19.8L715.2 14.8L717.2 13.2L718.2 14.2L718.2 15.8L719.8 15.8L719.8 14.2L717.8 13.8L717.2 8.8L718.8 7.2L720.2 8.2L720.2 9.8L721.8 9.8L721.8 8.2L719.8 7.8L719.8 -0.8L312.2 -0.8L312.2 7.8L310.2 8.8L309.8 -0.8L291.8 -0.8L291.8 5.8L290.8 7.2L289.8 5.8L289.8 -0.8ZM166.2 655.8L168.2 656.2L168.8 661.2L167.2 662.8L165.8 661.8ZM176.2 623.8L178.2 624.2L178.8 629.2L177.2 630.8L175.8 629.8ZM178.2 617.8L180.2 618.2L180.8 623.2L179.2 624.8L177.8 623.8ZM180.2 611.8L182.2 612.2L182.8 617.2L181.2 618.8L179.8 617.8ZM182.8 605.8L184.2 606.2L184.8 611.2L183.2 612.8L181.8 611.8L181.8 606.8ZM742.2 599.8L744.2 600.2L744.2 603.8L746.2 604.2L746.2 605.8L745.2 606.8L741.8 603.8ZM184.8 599.8L186.2 600.2L186.8 605.2L185.2 606.8L183.8 605.8L183.8 600.8ZM186.8 593.8L188.2 594.2L188.8 599.2L187.2 600.8L185.8 599.8L185.8 594.8ZM736.2 591.8L738.2 592.2L738.2 595.8L739.8 595.8L740.2 597.8L742.2 598.2L742.2 599.8L741.2 600.8L735.8 595.8ZM188.2 587.8L190.2 588.2L190.8 593.2L189.2 594.8L187.8 593.8ZM732.2 585.8L734.2 586.2L734.2 589.8L736.2 590.2L736.2 591.8L735.2 592.8L731.8 589.8ZM190.2 583.8L192.2 584.2L192.2 587.8L191.2 588.8L189.8 587.8ZM726.2 577.8L728.2 578.2L728.2 581.8L729.8 581.8L730.2 583.8L732.2 584.2L732.2 585.8L731.2 586.8L725.8 581.8ZM192.2 577.8L194.2 578.2L194.8 583.2L193.2 584.8L191.8 583.8ZM194.2 573.8L196.2 574.2L196.2 577.8L195.2 578.8L193.8 577.8ZM722.2 571.8L724.2 572.2L724.2 575.8L726.2 576.2L726.2 577.8L725.2 578.8L721.8 575.8ZM196.2 567.8L198.2 568.2L198.8 573.2L197.2 574.8L195.8 573.8ZM716.2 563.8L718.2 564.2L718.2 567.8L719.8 567.8L720.2 569.8L722.2 570.2L722.2 571.8L721.2 572.8L715.8 567.8ZM523.8 560.8L524.2 563.8L523.2 564.2L522.8 562.8ZM712.2 557.8L714.2 558.2L714.2 561.8L716.2 562.2L716.2 563.8L715.2 564.8L711.8 561.8ZM522.8 555.2L523.2 559.8L522.2 560.2L521.8 558.8ZM525.8 554.2L526.2 559.8L525.2 560.8L524.2 559.8L524.2 555.2ZM520.8 551.2L521.8 552.8L521.2 554.2L519.8 553.8ZM526.8 550.2L528.2 550.8L528.2 553.8L527.2 554.8L526.2 553.8ZM706.2 549.8L708.2 550.2L708.2 553.8L709.8 553.8L710.2 555.8L712.2 556.2L712.2 557.8L711.2 558.8L705.8 553.8ZM204.2 549.8L206.2 550.2L206.2 553.8L205.2 554.8L203.8 553.8ZM518.8 547.2L519.8 548.8L519.2 550.2L517.8 549.8ZM528.8 546.2L530.2 546.8L530.2 549.8L529.2 550.8L527.8 549.2ZM206.2 545.8L208.2 546.2L208.2 549.8L207.2 550.8L205.8 549.8ZM702.2 543.8L704.2 544.2L704.2 547.8L706.2 548.2L706.2 549.8L705.2 550.8L701.8 547.8ZM516.8 543.2L517.8 544.8L517.2 546.2L515.8 545.8L515.8 544.2ZM530.8 542.2L532.2 542.8L532.2 545.8L531.2 546.8L529.8 545.2ZM208.2 541.8L210.2 542.2L210.2 545.8L209.2 546.8L207.8 545.8ZM514.8 539.2L515.8 540.8L515.2 542.2L513.8 541.8L513.8 540.2ZM532.8 538.2L534.2 538.8L534.2 541.8L533.2 542.8L531.8 541.8ZM210.2 537.8L212.2 538.2L212.2 541.8L211.2 542.8L209.8 541.8ZM696.2 535.8L698.2 536.2L698.2 539.8L699.8 539.8L700.2 541.8L702.2 542.2L702.2 543.8L701.2 544.8L695.8 539.8ZM512.8 534.8L513.8 536.2L513.2 538.2L511.8 537.8L511.8 535.8ZM534.8 534.2L536.2 534.8L536.2 537.8L535.2 538.8L533.8 537.8ZM212.2 533.8L214.2 534.2L214.2 537.8L213.2 538.8L211.8 537.8ZM510.8 530.8L511.8 531.8L511.2 534.2L509.8 533.8L509.8 531.8ZM692.2 529.8L694.2 530.2L694.2 533.8L696.2 534.2L696.2 535.8L695.2 536.8L691.8 533.8ZM537.2 529.8L538.2 530.8L538.2 533.8L536.8 534.8L535.8 533.8L535.8 532.2ZM214.2 529.8L216.2 530.2L216.2 533.8L215.2 534.8L213.8 533.8ZM507.2 529.2L508.2 528.2L509.8 528.8L508.8 530.8ZM506.2 524.2L507.8 525.2L507.8 527.8L506.8 528.8L505.8 527.8ZM541.8 523.8L542.2 527.8L538.8 530.8L537.8 528.8L539.8 527.8L539.8 525.2L540.8 523.8ZM219.8 523.8L220.2 527.8L216.8 530.8L215.8 529.8L215.8 528.2L217.8 527.8L217.8 524.2ZM686.2 521.8L688.2 522.2L688.2 525.8L689.8 525.8L690.2 527.8L692.2 528.2L692.2 529.8L691.2 530.8L685.8 525.8ZM504.2 520.2L505.8 520.8L506.2 523.2L505.2 524.8L503.8 523.8ZM542.8 519.8L544.2 520.2L544.2 523.8L543.2 524.8L541.8 523.8L541.8 520.8ZM223.2 517.8L224.8 519.2L222.8 520.8L221.8 518.8ZM682.2 515.8L684.2 516.2L684.2 519.8L686.2 520.2L686.2 521.8L685.2 522.8L681.8 519.8ZM224.8 514.8L226.2 515.8L225.8 518.2L224.2 517.8ZM547.8 513.8L548.2 517.8L544.8 520.8L543.8 519.8L543.8 518.2L545.8 517.8L545.8 514.2ZM500.2 513.8L502.2 514.8L502.2 517.8L504.2 518.8L503.2 520.8L499.8 517.8ZM226.2 513.2L227.2 512.2L228.2 512.8L227.8 514.2L226.8 514.2ZM229.2 509.8L230.2 510.8L229.8 512.2L228.2 511.2ZM676.2 507.8L678.2 508.2L678.2 511.8L679.8 511.8L680.2 513.8L682.2 514.2L682.2 515.8L681.2 516.8L675.8 511.8ZM551.8 507.8L552.2 511.8L548.8 514.8L547.8 513.8L547.8 512.2L549.8 511.8L549.8 508.2ZM496.2 507.8L498.2 508.8L498.2 511.8L500.2 512.2L500.2 513.8L499.2 514.8L495.8 511.8ZM230.8 507.8L231.2 506.8L232.2 507.2L231.2 508.2ZM489.2 502.8L491.2 501.8L492.2 503.8L493.2 503.8L494.2 505.8L496.2 506.8L496.2 507.8L494.8 508.8ZM347.8 501.2L348.8 500.8L349.2 501.8L348.8 502.2ZM487.2 500.8L489.2 499.8L490.2 501.8L488.8 502.8ZM346.8 497.8L347.8 499.2L346.2 500.2L345.8 498.8ZM666.2 495.8L668.2 496.8L668.2 499.8L669.8 499.8L670.2 501.8L671.8 501.8L672.2 503.8L673.8 503.8L674.2 505.8L676.2 506.2L676.2 507.8L675.2 508.8L665.8 499.8ZM486.2 495.8L487.2 495.8L488.2 497.8L488.2 499.8L487.2 500.8L485.8 499.8ZM894.8 496.8L893.8 498.2L881.8 497.8L882.2 495.8L893.2 495.2ZM343.8 494.8L344.8 494.2L345.8 495.8L344.2 496.2ZM882.8 494.8L881.8 496.2L869.8 495.8L870.2 493.8L881.2 493.2ZM341.2 492.8L342.8 492.2L343.8 493.8L342.2 494.2ZM870.8 492.8L869.8 494.2L857.8 493.8L858.2 491.8L869.2 491.2ZM659.2 490.8L661.2 489.8L662.2 491.8L664.2 492.8L664.2 493.8L666.2 494.2L666.2 495.8L664.8 496.8ZM569.8 489.8L570.8 491.2L552.8 508.8L551.8 507.8L551.8 506.2L553.8 505.8L553.8 504.2L555.8 503.8L555.8 502.2L557.8 501.8L557.8 500.2L559.8 499.8L559.8 498.2L561.8 497.8L561.8 496.2L563.8 495.8L563.8 494.8L565.8 493.8L565.8 492.8L567.8 491.8L568.8 489.8ZM858.8 490.8L857.8 492.2L845.8 491.8L846.2 489.8L857.2 489.2ZM657.2 489.2L659.2 488.2L659.8 490.2L658.8 490.8ZM570.2 488.8L571.8 488.2L572.2 489.8L570.8 490.8ZM846.8 488.8L845.8 490.2L833.8 489.8L834.2 487.8L845.2 487.2ZM655.8 486.8L656.8 486.2L657.8 487.8L656.2 488.2ZM572.2 487.2L573.2 486.2L574.2 486.8L573.8 488.2L572.8 488.2ZM834.8 486.8L833.8 488.2L821.8 487.8L822.2 485.8L833.2 485.2ZM653.8 485.2L654.8 484.8L655.2 485.8L654.2 486.2ZM574.8 485.8L575.2 484.8L576.2 485.2L575.2 486.2ZM473.2 485.2L474.2 484.2L476.2 485.2L475.2 486.8ZM822.8 484.8L821.8 486.2L809.8 485.8L810.2 483.8L821.2 483.2ZM471.8 482.8L472.8 482.2L473.8 483.8L472.2 484.2ZM810.8 482.8L809.8 484.2L797.8 483.8L798.2 481.8L809.2 481.2ZM470.2 481.2L470.8 480.8L471.2 481.8L470.8 482.2ZM798.8 480.8L797.8 482.2L785.8 481.8L786.2 479.8L797.2 479.2ZM786.8 478.8L785.8 480.2L773.8 479.8L774.2 477.8L785.2 477.2ZM774.8 476.8L773.8 478.2L761.8 477.8L762.2 475.8L773.2 475.2ZM762.8 474.8L761.8 476.2L749.8 475.8L750.2 473.8L761.2 473.2ZM750.8 472.8L749.8 474.2L737.8 473.8L738.2 471.8L749.2 471.2ZM738.8 470.8L737.8 472.2L725.8 471.8L726.2 469.8L737.2 469.2ZM726.8 468.8L725.8 470.2L713.8 469.8L714.2 467.8L725.2 467.2ZM567.2 465.8L568.2 466.8L568.2 481.2L567.2 483.8L566.2 481.2L566.2 470.2ZM546.2 465.8L548.2 466.8L547.2 467.8L547.2 502.2L548.2 511.2L547.8 512.2L545.8 511.8ZM714.8 466.8L713.8 468.2L703.8 467.8L704.2 465.8L713.2 465.2ZM662.8 465.2L663.8 466.8L663.8 482.8L662.8 485.2L661.8 482.2L661.8 466.2ZM689.8 466.8L694.2 465.8L693.8 464.8L694.8 463.8L703.8 463.8L704.8 464.8L703.8 466.2L702.8 466.2L702.2 467.8L692.8 467.8ZM402.8 477.8L404.2 474.2L403.8 468.2L405.8 465.8L408.8 465.8L408.2 465.2L409.8 463.8L426.2 463.8L427.8 464.8L428.8 466.8L427.2 468.8L412.8 468.2L413.2 469.2L411.2 470.2L410.2 472.2L408.8 472.2L408.8 473.8L406.2 476.2L404.8 476.8L403.8 478.2ZM216.2 463.8L217.2 464.8L216.8 465.8L220.2 465.8L220.2 519.8L222.2 520.2L222.2 523.8L220.8 524.8L219.8 523.8L219.8 522.2L217.8 521.8L217.8 471.8L198.2 485.8L198.2 554.2L201.8 555.2L202.2 553.8L203.8 553.8L204.8 559.2L202.8 560.8L201.8 559.8L201.8 558.2L200.2 558.2L200.2 559.8L202.2 560.2L202.2 563.8L200.8 564.8L199.8 563.8L199.8 562.2L198.2 562.2L198.2 563.8L200.2 564.2L200.2 567.8L198.8 568.8L197.8 567.8L197.8 566.2L195.8 565.8L195.8 469.2L194.8 469.8L193.8 468.8L194.8 467.8L195.8 468.2L194.8 467.2L195.8 465.8L198.8 465.8L198.2 464.8L199.8 463.8ZM497.8 463.2L500.2 465.8L500.2 491.2L499.2 493.2L497.8 486.2L497.8 466.2L493.8 465.8L494.2 463.8ZM482.8 463.2L487.8 463.8L488.2 465.8L482.2 466.2L481.8 467.8L480.2 467.8L480.2 484.2L478.2 487.8L479.8 487.8L480.2 489.8L481.8 489.8L482.2 491.8L483.2 491.8L484.2 493.8L486.2 494.8L485.2 496.8L475.2 487.2L476.2 485.8L477.8 485.8L477.2 466.8L478.2 465.2L481.2 465.8L480.8 464.8ZM694.2 462.2L693.8 463.8L689.8 463.8L688.8 462.8L692.8 461.8ZM905.8 439.8L906.2 438.2L918.2 438.2L919.2 439.2L918.2 440.2ZM891.8 437.8L892.2 436.2L904.2 436.2L905.2 437.2L904.2 438.2ZM877.8 435.8L878.2 434.2L890.2 434.2L891.2 435.2L890.2 436.2ZM863.8 433.8L864.2 432.2L876.2 432.2L877.2 433.2L876.2 434.2ZM917.2 432.8L918.2 431.8L927.8 431.8L930.2 433.2L929.2 434.2L918.2 434.2ZM849.8 431.8L850.2 430.2L862.2 430.2L863.2 431.2L862.2 432.2ZM905.2 430.8L906.2 429.8L915.8 429.8L918.2 431.2L917.2 432.2L906.2 432.2ZM835.8 429.8L836.2 428.2L848.2 428.2L849.2 429.2L848.2 430.2ZM893.2 428.8L894.2 427.8L903.8 427.8L906.2 429.2L905.2 430.2L894.2 430.2ZM821.8 427.8L822.2 426.2L834.2 426.2L835.2 427.2L834.2 428.2ZM881.2 426.8L882.2 425.8L891.8 425.8L894.2 427.2L893.2 428.2L882.2 428.2ZM151.2 424.8L153.2 427.2L152.2 428.2L149.8 428.2L148.2 430.2L147.8 427.8ZM807.8 425.8L808.2 424.2L820.2 424.2L821.2 425.2L820.2 426.2ZM869.2 424.8L870.2 423.8L879.8 423.8L882.2 425.2L881.2 426.2L870.2 426.2ZM793.8 423.8L794.2 422.2L806.2 422.2L807.2 423.2L806.2 424.2ZM857.2 422.8L858.2 421.8L867.8 421.8L870.2 423.2L869.2 424.2L858.2 424.2ZM779.8 421.8L780.2 420.2L792.2 420.2L793.2 421.2L792.2 422.2ZM845.2 420.8L846.2 419.8L855.8 419.8L858.2 421.2L857.2 422.2L846.2 422.2ZM765.8 419.8L766.2 418.2L778.2 418.2L779.2 419.2L778.2 420.2ZM833.2 418.8L834.2 417.8L843.8 417.8L846.2 419.2L845.2 420.2L834.2 420.2ZM751.8 417.8L752.2 416.2L764.2 416.2L765.2 417.2L764.2 418.2ZM907.8 416.2L921.8 415.8L922.8 417.2L921.8 418.2L909.2 418.2L907.8 417.2ZM821.2 416.8L822.2 415.8L831.8 415.8L834.2 417.2L833.2 418.2L822.2 418.2ZM3.8 417.2L4.2 415.8L14.2 415.8L15.2 416.8L14.2 417.8ZM737.8 415.8L738.2 414.2L750.2 414.2L751.2 415.2L750.2 416.2ZM893.8 414.2L907.8 413.8L908.8 415.2L907.8 416.2L895.2 416.2L893.8 415.2ZM809.2 414.8L810.2 413.8L819.8 413.8L822.2 415.2L821.2 416.2L810.2 416.2ZM492.2 413.8L494.2 414.2L493.8 464.2L491.8 463.8ZM15.8 415.2L16.2 413.8L26.2 413.8L27.2 414.8L26.2 415.8ZM723.8 413.8L724.2 412.2L736.2 412.2L737.2 413.2L736.2 414.2ZM879.8 412.2L893.8 411.8L894.8 413.2L893.8 414.2L881.2 414.2L879.8 413.2ZM797.2 412.8L798.2 411.8L807.8 411.8L810.2 413.2L809.2 414.2L798.2 414.2ZM27.8 413.2L28.2 411.8L38.2 411.8L39.2 412.8L38.2 413.8ZM713.8 411.8L714.2 410.2L721.8 410.2L723.2 411.2L722.2 412.2ZM865.8 410.2L879.8 409.8L880.8 411.2L879.8 412.2L867.2 412.2L865.8 411.2ZM785.2 410.8L786.2 409.8L795.8 409.8L798.2 411.2L797.2 412.2L786.2 412.2ZM39.8 411.2L40.2 409.8L50.2 409.8L51.2 410.8L50.2 411.8ZM703.8 409.8L704.2 408.2L711.2 408.2L712.8 409.2L711.8 410.2ZM908.2 409.2L908.8 407.8L919.8 407.8L920.8 408.8L919.2 410.2ZM851.8 408.2L865.8 407.8L866.8 409.2L865.8 410.2L853.2 410.2L851.8 409.2ZM773.2 408.8L774.2 407.8L783.8 407.8L786.2 409.2L785.2 410.2L774.2 410.2ZM51.8 409.2L52.2 407.8L62.2 407.8L63.2 408.8L62.2 409.8ZM697.8 407.8L698.8 406.2L702.8 407.2L699.2 408.2ZM896.2 407.2L896.8 405.8L907.8 405.8L908.8 406.8L907.2 408.2ZM837.8 406.2L851.8 405.8L852.8 407.2L851.8 408.2L839.2 408.2L837.8 407.2ZM761.2 406.8L762.2 405.8L771.8 405.8L774.2 407.2L773.2 408.2L762.2 408.2ZM509.2 406.8L510.2 405.8L511.8 406.2L510.8 407.8ZM63.8 407.2L64.2 405.8L74.8 405.8L75.8 406.8L74.2 407.8ZM691.8 405.2L693.8 405.2L692.8 406.2ZM75.8 404.8L77.8 404.8L76.8 405.8ZM884.2 405.2L884.8 403.8L895.8 403.8L896.8 404.8L895.2 406.2ZM823.8 404.2L837.8 403.8L838.8 405.2L837.8 406.2L825.2 406.2L823.8 405.2ZM749.2 404.8L750.2 403.8L759.8 403.8L762.2 405.2L761.2 406.2L750.2 406.2ZM511.2 404.8L512.2 403.8L513.8 404.2L513.2 405.8L511.8 405.8ZM872.2 403.2L872.8 401.8L883.8 401.8L884.8 402.8L883.2 404.2ZM809.8 402.2L823.8 401.8L824.8 403.2L823.8 404.2L811.2 404.2L809.8 403.2ZM737.2 402.8L738.2 401.8L747.8 401.8L750.2 403.2L749.2 404.2L738.2 404.2ZM515.2 401.2L516.2 402.8L514.2 404.2L513.2 402.8ZM860.2 401.2L860.8 399.8L871.8 399.8L872.8 400.8L871.2 402.2ZM795.8 400.2L809.8 399.8L810.8 401.2L809.8 402.2L797.2 402.2L795.8 401.2ZM725.2 400.8L726.2 399.8L735.8 399.8L738.2 401.2L737.2 402.2L726.2 402.2ZM516.8 399.2L518.2 400.2L517.2 402.2L515.2 401.2ZM848.2 399.2L848.8 397.8L859.8 397.8L860.8 398.8L859.2 400.2ZM781.8 398.2L795.8 397.8L796.8 399.2L795.8 400.2L783.2 400.2L781.8 399.2ZM714.2 398.8L716.2 397.8L723.8 397.8L726.2 399.2L725.2 400.2L715.2 400.2ZM518.8 397.2L520.2 398.2L519.2 400.2L517.2 399.2ZM707.2 396.8L713.8 396.2L715.2 397.2L714.2 398.2L708.2 398.2ZM836.2 397.2L836.8 395.8L847.8 395.8L848.8 396.8L847.2 398.2ZM767.8 396.2L781.8 395.8L782.8 397.2L781.8 398.2L769.2 398.2L767.8 397.2ZM520.8 395.2L522.2 396.2L521.2 398.2L519.2 397.2ZM824.2 395.2L824.8 393.8L835.8 393.8L836.8 394.8L835.2 396.2ZM753.8 394.2L767.8 393.8L768.8 395.2L767.8 396.2L755.2 396.2L753.8 395.2ZM812.2 393.2L812.8 391.8L823.8 391.8L824.8 392.8L823.2 394.2ZM739.8 392.2L753.8 391.8L754.8 393.2L753.8 394.2L741.2 394.2L739.8 393.2ZM800.2 391.2L800.8 389.8L811.8 389.8L812.8 390.8L811.2 392.2ZM725.8 390.2L739.8 389.8L740.8 391.2L739.8 392.2L727.2 392.2L725.8 391.2ZM522.2 389.8L523.2 389.8L524.2 391.8L524.2 394.2L522.8 396.2L521.8 395.2ZM788.2 389.2L788.8 387.8L799.8 387.8L800.8 388.8L799.2 390.2ZM715.8 388.2L725.8 387.8L726.8 389.2L725.8 390.2L717.2 390.2L715.8 389.2ZM776.2 387.2L776.8 385.8L787.8 385.8L788.8 386.8L787.2 388.2ZM705.8 386.2L715.8 385.8L716.8 387.2L715.8 388.2L707.2 388.2L705.8 387.2ZM764.2 385.2L764.8 383.8L775.8 383.8L776.8 384.8L775.2 386.2ZM699.8 384.2L705.8 383.8L706.8 385.2L705.8 386.2L700.8 386.2ZM316.8 383.2L317.8 386.2L318.2 393.8L318.2 461.8L316.2 462.2L315.8 463.8L314.2 463.8L314.2 465.8L317.8 465.8L318.2 467.8L319.8 467.8L320.2 469.8L321.8 469.8L322.2 471.8L323.8 471.8L324.2 473.8L325.8 473.8L326.2 475.8L327.8 475.8L328.2 477.8L329.8 477.8L330.2 479.8L331.8 479.8L332.2 481.8L333.8 481.8L334.2 483.8L335.8 483.8L336.2 485.8L337.2 485.8L337.2 484.8L335.8 483.8L335.8 467.8L334.2 467.8L333.8 466.2L330.2 466.2L329.8 464.2L333.2 463.2L335.2 464.8L334.8 465.8L337.8 465.2L338.8 466.8L338.2 487.8L339.2 487.8L340.2 489.8L341.8 490.8L341.2 492.8L327.2 478.8L325.8 478.2L325.2 476.8L323.8 476.2L320.8 472.2L318.8 471.2L319.2 470.2L317.8 470.2L316.2 468.8L316.8 468.2L312.8 468.8L310.8 467.8L309.8 466.2L309.8 464.8L311.2 463.2L311.8 463.8L313.2 461.8L313.8 462.2L314.8 460.2L315.8 461.2L315.8 385.2ZM329.2 382.8L330.2 385.2L330.2 463.8L328.2 464.2L327.8 393.8L328.2 385.8ZM752.2 383.2L752.8 381.8L763.8 381.8L764.8 382.8L763.2 384.2ZM700.8 382.8L699.8 384.2L694.8 384.2L693.8 383.2L694.2 381.8L699.2 381.2ZM740.2 381.2L740.8 379.8L751.8 379.8L752.8 380.8L751.2 382.2ZM529.8 379.8L530.8 381.2L523.8 388.2L522.2 388.2L521.8 386.2L523.8 385.8L523.8 384.8L525.8 383.8L525.8 382.8ZM536.2 378.8L537.8 379.2L538.2 381.2L537.8 400.8L536.8 404.8L535.8 402.8ZM530.2 379.8L530.8 378.2L532.8 378.8L531.8 380.2ZM728.2 379.2L728.8 377.8L739.8 377.8L740.8 378.8L739.2 380.2ZM619.8 377.8L622.2 377.8L623.8 378.8L624.8 380.8L623.2 383.8L622.2 382.2L622.2 380.2L621.2 383.2L620.2 383.2L619.2 379.2ZM492.8 377.8L494.2 378.8L494.2 389.2L495.2 388.8L496.2 389.8L496.2 391.2L498.2 392.2L497.8 408.2L495.8 407.8L495.8 392.2L494.2 392.2L493.8 390.2L491.8 389.8L491.8 379.2ZM685.8 377.8L691.8 377.2L692.8 379.2L694.8 380.8L693.8 382.2L692.2 382.2L691.8 380.2L690.2 380.2L690.8 381.8L688.2 382.2L688.2 383.8L686.2 384.2L686.2 385.8L688.2 385.8L688.2 389.8L687.2 390.8L686.2 390.2L686.2 391.8L691.2 391.8L694.8 394.2L698.2 393.8L700.8 396.2L704.8 395.8L706.2 396.8L705.2 399.8L687.8 399.8L686.2 398.2L684.8 398.8L682.2 397.2L681.8 394.8L682.8 393.2L683.8 394.2L683.8 383.8L684.8 382.2L685.8 382.8ZM406.8 377.2L408.8 378.2L408.8 397.8L407.2 398.8L405.2 397.8L405.2 378.2ZM241.2 377.2L242.8 378.2L242.8 397.8L240.8 398.8L239.2 398.2L237.2 395.2L237.2 380.8L238.8 378.2ZM533.2 377.8L533.8 376.8L535.2 377.2L534.2 378.2ZM717.8 376.8L718.8 375.8L727.8 375.8L728.8 376.8L727.2 378.2L718.8 377.8ZM718.2 375.2L716.8 375.8L709.8 374.8L717.2 373.8ZM494.2 377.8L494.8 376.2L498.8 376.2L495.8 375.8L495.2 374.8L496.2 373.8L532.8 373.8L534.2 374.8L533.8 375.8L528.8 376.2L508.8 376.2L509.8 376.2L510.2 377.8L512.2 378.8L512.2 379.8L513.8 379.8L514.2 381.8L515.8 381.8L516.2 383.8L517.8 383.8L518.2 385.8L520.2 386.2L520.2 387.8L522.2 388.2L522.2 389.8L521.2 390.8L517.2 386.8L515.8 386.2L515.2 384.8L513.8 384.2L510.8 380.2L508.8 379.2L509.2 378.2ZM143.8 365.8L145.2 365.8L147.2 368.8L146.2 370.2L147.8 370.2L147.8 371.8L187.2 371.2L188.8 372.2L188.2 420.2L187.2 421.8L186.2 421.2L186.8 427.2L185.8 428.8L167.8 428.2L166.2 427.2L166.8 426.2L152.8 426.2L151.8 425.2L151.8 418.8L151.2 419.8L149.8 418.2L149.8 414.8L148.8 415.2L147.8 414.2L147.8 410.8L147.2 411.8L145.8 410.2L145.8 405.2L144.8 405.8L143.8 404.2ZM493.2 363.8L494.2 369.2L493.2 372.2L492.2 370.2ZM541.2 358.8L542.2 359.8L541.8 413.2L540.2 413.8L539.8 415.2L538.2 416.2L536.2 416.2L535.2 415.2L535.8 414.2L494.2 414.2L494.2 411.8L499.8 411.8L499.8 410.2L497.8 409.8L498.2 407.8L500.2 407.8L501.2 408.8L500.8 409.8L531.8 409.8L533.2 410.8L532.8 411.2L525.8 411.8L535.2 411.8L536.8 412.8L536.8 413.8L537.8 413.8L537.8 412.8L539.8 411.8L539.8 363.8L540.2 359.2ZM537.8 356.8L538.8 355.8L540.2 356.2L539.2 358.2ZM491.8 355.8L492.8 356.8L491.8 357.8L489.8 357.8L490.2 463.8L488.2 464.2L487.8 357.8L489.2 356.2ZM88.8 317.8L89.2 316.8L90.2 317.2L89.2 318.2ZM90.8 312.2L92.2 312.8L92.2 315.8L91.2 316.8L90.2 316.2ZM911.2 312.8L912.2 311.8L923.8 311.8L924.2 313.8L912.8 314.8ZM899.2 310.8L900.2 309.8L911.8 309.8L912.2 311.8L900.8 312.8ZM92.8 308.2L94.2 308.8L94.2 311.8L93.2 312.8L91.8 311.8ZM887.2 308.8L888.2 307.8L899.8 307.8L900.2 309.8L888.8 310.8ZM875.2 306.8L876.2 305.8L887.8 305.8L888.2 307.8L876.8 308.8ZM863.2 304.8L864.2 303.8L875.8 303.8L876.2 305.8L864.8 306.8ZM94.8 303.8L96.2 304.2L95.8 308.8L93.8 307.8L93.8 304.8ZM851.2 302.8L852.2 301.8L863.8 301.8L864.2 303.8L852.8 304.8ZM839.2 300.8L840.2 299.8L851.8 299.8L852.2 301.8L840.8 302.8ZM96.8 299.8L98.2 300.2L98.2 303.8L97.2 304.8L95.8 303.8L95.8 300.8ZM827.2 298.8L828.2 297.8L839.8 297.8L840.2 299.8L828.8 300.8ZM815.2 296.8L816.2 295.8L827.8 295.8L828.2 297.8L816.8 298.8ZM98.2 295.8L100.2 296.2L100.2 299.8L99.2 300.8L97.8 299.8ZM803.2 294.8L804.2 293.8L815.8 293.8L816.2 295.8L804.8 296.8ZM791.2 292.8L792.2 291.8L803.8 291.8L804.2 293.8L792.8 294.8ZM779.2 290.8L780.2 289.8L791.8 289.8L792.2 291.8L780.8 292.8ZM767.2 288.8L768.2 287.8L779.8 287.8L780.2 289.8L768.8 290.8ZM914.8 288.8L913.8 290.2L912.2 290.2L912.2 291.8L914.2 292.2L913.8 294.2L900.8 294.8L899.2 293.2L900.2 291.8L901.8 291.8L902.2 287.8L913.2 287.2ZM755.2 286.8L756.2 285.8L767.8 285.8L768.2 287.8L756.8 288.8ZM902.8 286.8L901.8 288.2L900.2 288.2L899.8 292.2L886.8 292.8L885.2 291.2L886.2 289.8L887.8 289.8L888.2 287.8L889.8 287.8L890.2 285.8L901.2 285.2ZM743.2 284.8L744.2 283.8L755.8 283.8L756.2 285.8L744.8 286.8ZM620.8 259.2L623.2 259.2L624.8 260.8L624.2 278.2L619.2 277.8L619.2 260.2ZM406.8 259.2L408.8 260.2L408.8 277.8L407.2 278.8L405.2 277.8L405.2 260.2ZM240.8 259.2L242.8 260.2L242.8 277.8L241.2 278.8L238.8 277.8L237.2 275.2L237.8 261.8L238.8 260.2ZM701.2 277.2L701.8 271.2L702.8 270.2L703.8 270.8L703.8 263.8L704.8 262.2L705.8 262.8L705.2 258.8L706.8 257.2L708.2 257.8L710.8 255.8L725.8 255.8L726.8 257.8L735.2 257.2L736.8 258.8L736.8 259.8L745.2 259.2L746.8 261.2L745.8 262.2L744.2 262.2L744.2 263.8L745.8 263.8L746.2 261.8L757.2 261.2L758.8 263.2L757.8 264.2L756.2 264.2L756.2 265.8L757.8 265.8L758.2 263.8L769.2 263.2L770.8 265.2L769.8 266.2L768.2 266.2L768.2 267.8L769.8 267.8L770.2 265.8L781.2 265.2L782.8 267.2L781.8 268.2L780.2 268.2L780.2 269.8L781.8 269.8L782.2 267.8L793.2 267.2L794.8 269.2L793.8 270.2L792.2 270.2L792.2 271.8L793.8 271.8L794.2 269.8L805.2 269.2L806.8 271.2L805.8 272.2L804.2 272.2L804.2 273.8L805.8 273.8L806.2 271.8L817.2 271.2L818.8 273.2L817.8 274.2L816.2 274.2L816.2 275.8L817.8 275.8L818.2 273.8L829.2 273.2L830.8 275.2L829.8 276.2L828.2 276.2L828.2 277.8L829.8 277.8L830.2 275.8L841.2 275.2L842.8 277.2L841.8 278.2L840.2 278.2L840.2 279.8L841.8 279.8L842.2 277.8L853.2 277.2L854.8 279.2L853.8 280.2L852.2 280.2L852.2 281.8L853.8 281.8L854.2 279.8L865.2 279.2L866.8 281.2L865.8 282.2L864.2 282.2L864.2 283.8L865.8 283.8L866.2 281.8L877.2 281.2L878.8 283.2L877.8 284.2L876.2 284.2L876.2 285.8L877.8 285.8L878.2 283.8L889.2 283.2L890.8 285.2L889.8 286.2L888.2 286.2L888.2 287.8L886.2 288.2L885.8 290.2L872.8 290.8L871.2 288.8L872.2 287.8L873.8 287.8L873.8 286.2L872.2 286.2L871.8 288.2L858.8 288.8L857.2 286.8L858.2 285.8L859.8 285.8L859.8 284.2L858.2 284.2L857.8 286.2L844.8 286.8L843.2 284.8L844.2 283.8L845.8 283.8L845.8 282.2L844.2 282.2L843.8 284.2L830.8 284.8L829.2 282.8L830.2 281.8L831.8 281.8L831.8 280.2L830.2 280.2L829.8 282.2L816.8 282.8L815.2 280.8L816.2 279.8L817.8 279.8L817.8 278.2L816.2 278.2L815.8 280.2L802.8 280.8L801.2 278.8L802.2 277.8L803.8 277.8L803.8 276.2L802.2 276.2L801.8 278.2L788.8 278.8L787.2 276.8L788.2 275.8L789.8 275.8L789.8 274.2L788.2 274.2L787.8 276.2L774.8 276.8L773.2 274.8L774.2 273.8L775.8 273.8L775.8 272.2L774.2 272.2L773.8 274.2L760.8 274.8L759.2 272.8L760.2 271.8L761.8 271.8L761.8 270.2L760.2 270.2L759.8 272.2L745.8 272.2L745.2 270.2L706.2 270.2L706.2 271.8L704.2 272.2L704.2 273.8L705.8 272.8L706.2 273.2L706.2 275.8L717.2 275.8L718.2 277.8L723.8 277.8L724.2 279.8L733.8 279.8L734.2 281.8L743.8 281.8L743.8 284.2L733.8 284.2L733.2 282.2L723.8 282.2L723.2 280.2L717.8 280.2L716.8 279.2L717.2 278.2L702.8 278.8ZM911.8 233.8L912.2 232.2L921.8 232.2L923.2 233.2L922.2 234.2ZM899.8 231.8L900.2 230.2L909.8 230.2L911.2 231.2L910.2 232.2ZM887.8 229.8L888.2 228.2L897.8 228.2L899.2 229.2L898.2 230.2ZM875.8 227.8L876.2 226.2L885.8 226.2L887.2 227.2L886.2 228.2ZM863.8 225.8L864.2 224.2L873.8 224.2L875.2 225.2L874.2 226.2ZM851.8 223.8L852.2 222.2L861.8 222.2L863.2 223.2L862.2 224.2ZM839.8 221.8L840.2 220.2L849.8 220.2L851.2 221.2L850.2 222.2ZM827.8 219.8L828.2 218.2L837.8 218.2L839.2 219.2L838.2 220.2ZM815.8 217.8L816.2 216.2L825.8 216.2L827.2 217.2L826.2 218.2ZM803.8 215.8L804.2 214.2L813.8 214.2L815.2 215.2L814.2 216.2ZM791.8 213.8L792.2 212.2L801.8 212.2L803.2 213.2L802.2 214.2ZM779.8 211.8L780.2 210.2L789.8 210.2L791.2 211.2L790.2 212.2ZM767.8 209.8L768.2 208.2L777.8 208.2L779.2 209.2L778.2 210.2ZM755.8 207.8L756.2 206.2L765.8 206.2L767.2 207.2L766.2 208.2ZM745.8 205.8L746.2 204.2L753.8 204.2L755.2 205.2L754.2 206.2ZM735.8 203.8L736.2 202.2L744.8 203.2L743.2 204.2ZM729.8 201.8L730.2 200.8L734.2 201.2L731.2 202.2ZM540.2 193.8L542.2 194.2L542.2 294.2L541.2 296.8L540.2 293.2L539.8 285.8ZM328.2 191.8L330.2 192.2L330.2 270.8L329.2 273.2L328.2 270.2L327.8 262.2ZM317.8 191.8L318.2 262.2L317.8 269.8L316.8 272.8L315.8 270.2L315.8 192.2ZM623.2 186.8L622.2 187.8L622.8 189.2L621.8 191.2L620.2 192.2L603.8 192.2L602.2 191.2L601.2 189.2L602.8 187.2L620.2 187.8L621.2 185.8ZM404.2 179.8L406.2 179.8L408.8 182.2L408.8 183.2L410.2 183.8L411.2 185.8L413.2 186.8L412.8 187.8L428.8 187.8L430.2 189.2L430.2 191.2L428.8 192.2L407.8 192.2L404.2 188.2ZM402.8 178.2L403.8 177.8L404.8 179.2L403.2 179.8ZM562.8 174.2L563.2 173.8L563.8 174.8L563.2 175.2ZM560.2 172.2L561.8 171.8L562.2 173.2L561.2 173.8ZM555.2 171.2L556.2 172.2L556.2 190.2L551.2 194.8L542.2 194.2L542.2 191.8L551.8 191.8L551.8 190.2L553.8 189.8L553.8 175.8ZM558.2 171.2L558.8 169.8L560.8 170.8L559.8 171.8ZM208.2 170.2L208.8 169.8L209.2 170.8L208.8 171.2ZM488.8 168.8L489.8 170.2L490.2 173.8L490.2 287.8L489.2 299.8L488.2 300.2L487.8 170.2ZM209.8 168.2L211.2 167.8L211.8 168.8L210.2 169.2ZM555.8 168.2L557.2 167.2L558.8 169.2L556.8 170.2ZM477.8 166.2L478.8 165.8L479.2 166.8L478.2 167.2ZM211.8 166.2L213.2 165.8L213.8 167.2L212.2 167.8ZM553.8 166.2L555.2 165.2L556.8 167.2L554.8 168.2ZM479.8 165.2L480.2 163.8L481.8 164.2L480.8 165.8ZM122.8 164.2L123.2 163.8L124.2 164.8L123.2 165.2ZM551.8 164.8L553.2 163.2L554.8 165.2L553.2 166.2ZM213.2 165.2L214.8 163.2L216.2 164.2L215.2 165.8ZM481.8 162.2L483.2 161.8L483.8 163.2L482.2 163.8ZM120.8 162.2L121.8 161.8L122.2 162.8L121.2 163.2ZM550.2 161.8L551.2 161.2L552.8 163.2L551.2 164.2L550.2 163.2ZM118.2 160.2L119.8 159.8L120.2 161.2L119.2 161.8ZM548.2 159.8L549.2 159.2L550.8 161.2L548.8 161.8ZM484.8 159.2L485.8 160.2L485.2 161.8L483.2 160.8ZM219.2 159.2L220.2 160.2L220.2 161.8L218.2 162.2L217.8 164.2L216.2 164.2L215.2 162.8ZM116.2 158.2L117.8 157.8L118.2 159.2L116.8 159.8ZM546.2 157.8L547.2 157.2L548.8 159.2L546.8 159.8ZM543.8 156.8L545.2 155.2L546.8 157.2L544.8 157.8ZM486.8 155.2L488.2 156.2L487.2 159.8L485.8 159.2L485.8 156.2ZM114.2 155.8L115.2 155.2L116.8 156.8L114.8 157.8ZM541.8 154.2L543.2 153.2L544.8 155.2L543.2 156.2ZM488.8 153.2L490.2 154.2L489.2 156.2L487.2 155.2ZM111.8 154.2L113.2 153.2L114.8 155.2L113.2 156.2L111.8 155.2ZM535.8 148.2L537.2 147.2L542.8 153.2L541.8 154.2L540.2 153.8L539.8 152.2L538.8 152.2L537.8 150.2L535.8 149.2ZM495.2 147.2L496.2 149.2L494.2 150.2L494.2 151.2L492.2 152.2L491.2 154.2L490.2 154.2L489.2 152.8ZM229.2 147.2L230.2 148.2L230.2 149.8L228.2 150.2L228.2 151.8L226.2 152.2L226.2 153.8L224.2 154.2L223.8 156.2L222.2 156.2L222.2 159.8L220.2 160.2L219.8 156.2ZM105.8 148.2L107.2 147.2L112.8 153.2L111.8 154.2L110.2 154.2L109.8 152.2L108.2 152.2L107.8 150.2L105.8 149.8ZM233.2 141.2L234.2 142.2L234.2 143.8L232.2 144.2L232.2 147.8L230.2 148.2L229.8 144.2ZM530.8 139.2L536.2 144.2L535.8 148.2L533.8 147.2L533.8 144.2L532.2 144.2L531.8 142.2L529.8 141.8L529.8 140.2ZM501.2 139.2L502.2 140.2L502.2 141.8L500.2 142.2L499.8 144.2L498.2 144.2L498.2 147.2L496.2 148.2L495.8 144.2ZM237.2 135.2L238.2 136.2L238.2 137.8L236.2 138.2L236.2 141.8L234.2 142.2L233.8 138.2ZM524.8 131.2L530.2 136.2L529.8 140.2L527.8 139.8L527.8 136.2L526.2 136.2L525.8 134.2L523.8 133.8L523.8 132.2ZM507.2 131.2L508.2 132.2L508.2 133.8L506.2 134.2L505.8 136.2L504.2 136.2L504.2 139.8L502.2 140.2L501.8 136.2ZM239.2 131.2L240.2 132.2L240.2 133.8L242.2 133.8L242.8 189.2L241.8 191.2L240.2 192.2L220.2 192.2L217.8 190.2L218.2 163.8L220.2 164.2L219.8 190.2L239.8 189.8L239.8 136.2L237.8 135.8L237.8 132.2ZM243.2 125.2L244.2 126.2L244.2 127.8L242.2 128.2L242.2 131.8L240.2 132.2L239.8 128.2ZM518.8 123.2L524.2 128.2L523.8 132.2L521.8 131.8L521.8 128.2L520.2 128.2L519.8 126.2L517.8 125.8L517.8 124.2ZM513.2 123.2L514.2 124.2L514.2 125.8L512.2 126.2L511.8 128.2L510.2 128.2L510.2 131.8L508.2 132.2L507.8 128.2ZM244.8 121.2L246.2 122.2L246.2 124.8L245.2 126.2L243.8 125.8L243.8 122.2ZM515.8 117.8L518.2 120.2L517.8 124.2L513.8 123.8L513.8 120.2L515.2 119.2ZM247.2 117.2L248.2 118.2L247.8 121.2L246.2 122.2L245.8 118.2ZM248.8 113.2L250.2 114.2L249.2 117.8L247.8 117.2L247.8 114.2ZM250.8 109.2L251.8 110.2L251.2 113.8L249.8 113.2L249.8 110.2ZM252.8 105.2L253.8 106.2L253.8 108.8L252.8 109.8L251.8 108.8L251.8 106.2ZM254.2 101.8L255.8 102.2L255.8 104.8L254.8 105.8L253.8 104.8ZM344.8 97.2L345.2 95.8L346.2 96.8L345.2 97.8ZM256.2 95.8L257.8 96.2L257.8 100.2L256.8 101.2L255.8 100.8ZM342.8 91.8L344.2 92.2L343.2 94.8L342.2 93.8ZM258.2 91.8L259.8 92.2L259.8 94.2L258.8 95.2L257.8 94.2ZM340.8 87.8L342.2 88.2L342.2 90.8L341.2 91.8L339.8 88.8ZM260.2 87.8L261.8 88.2L260.8 91.2L259.8 90.2ZM262.2 81.8L263.8 82.2L262.8 86.8L261.8 85.8ZM339.2 81.2L340.2 82.2L340.2 87.2L339.2 88.2L338.2 87.8L338.2 190.2L335.8 192.8L330.2 192.2L329.8 190.2L335.8 189.8L335.8 83.8L337.8 83.2L337.8 82.2ZM693.8 78.2L694.8 77.8L695.8 79.2L694.8 80.2ZM264.2 77.8L265.8 78.2L264.8 80.8L263.8 79.8ZM336.8 77.2L338.2 78.2L337.8 82.2L335.8 81.8L335.8 78.2ZM696.2 71.8L697.8 72.2L697.2 77.2L695.8 76.2ZM266.2 71.8L267.8 72.2L266.8 76.8L265.8 73.2ZM334.8 71.2L336.8 72.8L335.8 78.2L333.8 77.8L333.8 72.2ZM268.2 67.8L269.8 68.2L268.8 70.8L267.8 69.2ZM332.8 67.2L334.2 68.2L333.8 72.2L331.8 71.8L331.8 68.2ZM270.2 61.8L271.8 62.2L270.8 66.8L269.8 63.2ZM330.8 61.2L332.8 62.8L331.8 68.2L329.8 67.8L329.8 62.2ZM272.2 55.8L273.8 56.8L272.8 60.8L271.8 57.2ZM328.8 55.2L330.8 56.8L329.8 62.2L327.8 61.8L327.2 58.2ZM274.2 49.8L275.8 50.8L274.8 54.2L273.8 51.2ZM276.2 43.8L277.8 44.8L276.8 48.2L275.8 45.2ZM278.2 39.8L279.8 40.2L278.8 42.8L277.8 41.2ZM280.2 31.8L281.8 32.2L280.8 38.8L279.8 33.2ZM282.2 25.8L283.8 26.2L282.8 30.8L281.8 27.2ZM284.2 19.8L285.8 20.2L284.8 24.8L283.8 21.2ZM286.2 13.8L287.8 14.2L286.8 18.8L285.8 15.2ZM288.2 7.8L289.8 8.2L289.8 11.2L288.8 12.8L287.8 11.8ZM312.8 7.2L314.8 8.8L314.2 13.8L312.2 14.2L312.2 15.8L313.8 15.8L313.8 14.2L314.8 13.2L316.8 14.8L316.2 19.8L314.2 20.2L314.2 21.8L315.8 21.8L315.8 20.2L316.8 19.2L318.8 20.8L318.2 25.8L316.2 26.2L316.2 27.8L317.8 27.8L317.8 26.2L318.8 25.2L320.8 26.8L320.2 31.8L318.2 32.2L318.2 33.8L319.8 33.8L319.8 32.2L320.8 31.2L322.8 32.8L322.2 37.8L320.2 38.2L320.2 39.8L321.8 39.8L321.8 38.2L322.8 37.2L324.8 38.8L324.2 43.8L322.2 44.2L322.2 45.8L323.8 45.8L323.8 44.2L324.8 43.2L326.8 44.8L326.2 49.8L324.2 50.2L324.2 51.8L325.8 51.8L325.8 50.2L326.8 49.2L328.8 50.8L328.2 55.8L326.2 56.2L325.8 57.2L312.2 46.2L312.2 189.8L316.2 190.2L315.8 192.2L313.2 192.8L310.8 191.8L309.8 190.2L309.8 9.2L310.2 8.8L311.8 9.8L311.8 8.2Z"/>
<path fill="#a00000" fill-rule="evenodd" d="M266.8 78.2L266.2 78.8L267.2 79.2ZM284.2 26.2L284.8 27.2L285.2 26.8ZM2.2 -0.8L2.8 1.2L3.8 1.2L6.8 4.2L6.8 7.2L7.8 7.2L12.8 12.2L12.8 15.2L13.8 15.2L16.8 18.2L16.8 21.2L17.8 21.2L22.8 26.2L22.2 28.2L26.8 32.2L26.8 35.2L27.8 35.2L32.8 40.2L32.2 42.2L36.8 46.2L36.8 49.2L37.8 49.2L42.8 54.2L42.2 56.2L46.8 60.2L46.8 63.2L47.8 63.2L52.8 68.2L52.2 70.2L56.8 74.2L56.8 77.2L57.8 77.2L62.8 82.2L62.2 84.2L66.8 88.2L66.8 91.2L67.8 91.2L72.8 96.2L72.2 98.2L76.8 102.2L76.8 105.2L77.8 105.2L82.8 110.2L82.2 112.2L86.8 116.2L86.8 119.2L87.8 119.2L92.8 124.2L92.2 126.2L96.8 130.2L96.8 133.2L97.8 133.2L102.8 138.2L102.2 140.2L106.8 144.2L106.8 147.2L107.8 147.2L122.8 162.8L121.8 164.2L120.8 164.2L120.8 188.2L124.2 199.8L130.2 214.2L136.8 225.8L144.8 234.2L156.8 243.2L164.2 247.8L170.2 252.8L175.2 260.8L175.8 269.2L173.8 275.2L168.2 283.8L156.2 294.2L141.8 309.8L134.2 314.2L127.8 316.2L123.8 316.2L114.8 318.2L108.2 322.2L105.2 326.2L102.2 332.2L102.2 333.8L98.2 343.2L94.2 349.8L90.8 353.8L87.8 353.8L86.2 355.2L84.2 355.2L82.2 357.2L75.8 357.2L73.8 359.2L67.8 359.2L65.8 361.2L57.8 361.2L55.8 363.2L47.8 363.2L45.8 365.2L37.8 365.2L35.8 367.2L27.8 367.2L25.8 369.2L17.8 369.2L15.8 371.2L7.8 371.2L5.8 373.2L-0.8 373.2L-0.8 408.2L2.2 408.2L3.8 406.2L12.2 406.2L13.8 404.2L22.2 404.2L23.8 402.2L32.2 402.2L33.8 400.2L42.2 400.2L43.8 398.2L52.2 398.2L53.8 396.2L62.2 396.2L63.8 394.2L72.2 394.2L73.8 392.2L80.2 392.2L81.8 390.2L87.2 390.8L89.8 388.8L92.2 388.8L94.2 386.8L95.8 387.2L98.2 385.8L103.2 385.2L109.2 383.2L113.8 380.2L117.2 376.8L125.8 363.8L130.8 358.2L138.8 353.8L142.2 353.2L151.8 353.8L164.2 357.2L169.8 357.8L188.2 361.8L193.2 363.8L206.8 371.8L214.2 373.8L221.8 373.2L233.8 369.8L243.8 369.8L251.8 373.8L259.8 382.8L262.2 388.2L262.2 397.2L258.8 403.2L253.8 408.2L243.8 414.2L235.8 416.8L227.2 420.8L224.2 423.2L220.8 428.8L220.2 437.2L222.2 443.2L229.2 456.2L232.2 465.8L232.2 503.8L233.2 503.8L234.8 505.2L230.2 509.2L230.8 511.8L226.8 515.2L226.8 517.8L222.8 521.2L222.8 523.8L220.8 525.2L220.8 527.8L216.8 531.2L216.8 533.8L214.8 535.2L214.8 537.8L212.8 539.2L212.8 541.8L210.8 543.2L210.8 545.8L208.8 547.2L208.8 549.8L206.8 551.2L206.8 553.8L204.8 555.2L204.8 559.8L202.8 561.2L202.8 563.8L200.8 565.2L200.8 567.8L198.8 569.2L198.8 573.8L196.8 575.2L196.8 577.8L194.8 579.2L194.8 583.8L192.8 585.2L192.8 587.8L190.8 589.2L190.8 593.8L188.8 595.2L188.8 599.8L186.8 601.2L186.8 605.8L184.8 607.2L184.8 611.8L182.8 613.2L182.8 617.8L180.8 619.2L180.8 623.8L178.8 625.2L178.8 629.8L176.8 631.2L176.8 635.8L174.8 637.2L174.8 641.8L172.8 643.2L172.8 647.8L170.8 649.2L170.8 655.8L168.8 657.2L168.8 661.8L166.8 663.2L166.8 669.8L164.8 671.2L164.8 675.8L162.8 677.2L162.8 683.8L160.8 685.2L160.8 691.8L158.8 693.2L158.8 697.8L156.8 699.2L156.8 700.8L811.8 700.8L811.2 699.2L805.2 693.8L805.8 692.2L801.2 687.8L801.2 685.2L795.2 679.8L795.8 678.2L791.2 673.8L791.2 671.2L785.2 665.8L785.8 664.2L781.2 659.8L781.2 657.2L775.2 651.8L775.8 650.2L771.2 645.8L771.2 643.2L765.2 637.8L765.8 636.2L761.2 631.8L761.2 629.2L755.2 623.8L755.8 622.2L751.2 617.8L751.2 615.2L745.2 609.8L745.8 608.2L741.2 603.8L741.2 601.2L735.2 595.8L735.8 594.2L731.2 589.8L731.2 587.2L725.2 581.8L725.8 580.2L721.2 575.8L721.2 573.2L715.2 567.8L715.8 566.2L711.2 561.8L711.2 559.2L705.2 553.8L705.8 552.2L701.2 547.8L701.2 545.2L695.2 539.8L695.8 538.2L691.2 533.8L691.2 531.2L685.2 525.8L685.8 524.2L681.2 519.8L681.2 517.2L675.2 511.8L675.2 509.2L665.2 499.8L665.2 497.2L651.2 483.2L653.2 481.8L652.8 467.8L654.2 459.2L658.2 450.8L667.8 437.8L670.8 431.2L670.8 426.2L667.8 419.8L662.8 414.2L658.2 410.8L652.2 408.2L643.2 408.2L635.8 409.8L622.2 409.8L614.8 407.8L606.2 402.2L602.2 397.2L600.8 393.8L600.8 388.2L604.2 380.2L608.2 375.8L612.8 372.2L618.2 370.2L623.8 370.2L628.8 371.8L636.2 376.2L646.2 383.8L650.8 385.8L655.2 386.2L659.8 385.2L663.8 383.2L680.2 371.8L685.8 369.8L695.2 367.8L696.8 369.2L701.8 369.2L704.2 371.2L707.8 370.8L709.8 372.8L718.2 372.8L719.8 374.8L728.2 374.8L729.8 376.8L740.2 376.8L741.8 378.8L752.2 378.8L753.8 380.8L764.2 380.8L765.8 382.8L776.2 382.8L777.8 384.8L788.2 384.8L789.8 386.8L800.2 386.8L801.8 388.8L812.2 388.8L813.8 390.8L824.2 390.8L825.8 392.8L836.2 392.8L837.8 394.8L848.2 394.8L849.8 396.8L860.2 396.8L861.8 398.8L872.2 398.8L873.8 400.8L884.2 400.8L885.8 402.8L896.2 402.8L897.8 404.8L908.2 404.8L909.8 406.8L920.2 406.8L921.8 408.8L930.8 408.8L930.8 324.8L924.2 324.8L922.8 322.8L910.2 322.8L908.8 320.8L896.2 320.8L894.8 318.8L882.2 318.8L880.8 316.8L868.2 316.8L866.8 314.8L854.2 314.8L852.8 312.8L840.2 312.8L838.8 310.8L826.2 310.8L824.8 308.8L812.2 308.8L810.8 306.8L798.2 306.8L796.8 304.8L784.2 304.8L782.8 302.8L770.2 302.8L768.8 300.8L756.2 300.8L754.8 298.8L741.8 298.8L740.2 296.8L731.8 296.8L730.2 294.8L722.8 295.2L719.8 292.8L716.2 293.2L714.2 291.2L709.8 291.2L705.2 288.2L703.8 288.8L701.8 287.8L693.8 281.2L690.2 275.8L688.2 269.8L688.2 261.2L689.8 256.2L695.8 246.8L703.2 238.8L707.2 233.2L709.2 227.2L709.2 224.2L707.8 219.2L704.8 214.8L691.8 201.8L682.2 187.8L682.8 110.2L681.8 106.2L683.8 104.2L683.2 102.2L685.2 100.8L685.2 95.8L687.2 93.8L686.8 92.2L688.8 90.2L688.8 88.2L690.8 86.2L690.8 81.8L692.8 80.2L692.8 77.8L694.8 76.2L694.8 71.8L696.8 69.8L696.8 67.8L698.8 65.8L698.8 61.8L700.8 59.8L700.8 55.8L702.8 53.8L702.8 49.8L704.8 47.8L704.8 43.8L706.8 41.8L706.8 39.8L708.8 37.8L708.8 31.8L710.8 29.8L710.8 25.8L712.8 23.8L712.8 19.8L714.8 17.8L714.8 13.8L716.8 11.8L716.8 7.8L718.8 5.8L718.8 -0.8L313.2 -0.8L313.2 5.8L315.2 7.8L315.2 11.8L317.2 13.8L317.2 17.8L319.2 19.8L319.2 23.8L321.2 25.8L321.2 29.8L323.2 31.8L323.2 35.8L325.2 37.8L325.2 41.8L327.2 43.8L327.2 47.8L329.2 49.8L329.2 53.8L331.2 55.8L331.2 59.8L333.2 61.8L333.2 65.8L335.2 67.8L335.2 69.8L337.2 71.8L337.2 75.8L339.2 77.8L339.2 80.2L341.2 81.8L341.2 86.2L343.2 87.8L343.2 90.2L345.2 91.8L345.2 94.2L347.2 95.8L347.2 100.2L349.2 101.8L349.2 104.2L351.2 106.2L351.2 108.2L353.2 110.2L352.8 111.8L355.2 114.2L354.8 116.2L356.8 117.8L356.8 120.2L358.8 122.2L358.8 124.8L362.8 128.2L362.2 130.8L364.2 132.2L364.2 187.8L362.2 189.8L358.2 196.8L354.8 205.8L352.8 214.2L352.2 263.8L346.2 283.2L340.2 295.2L337.2 298.8L333.8 301.2L327.8 303.2L323.2 303.8L314.2 302.8L308.2 299.2L301.8 289.8L294.2 271.2L291.2 257.8L291.8 241.8L293.2 228.8L291.8 208.8L287.8 196.2L282.2 187.8L282.2 34.2L283.2 32.2L281.8 31.8L281.2 26.8L282.8 25.2L283.8 25.2L283.2 20.8L284.8 19.2L285.8 19.2L285.2 14.8L286.8 13.2L287.8 13.2L287.2 8.8L288.8 7.2L289.8 7.2L289.8 -0.8ZM364.2 520.8L365.2 523.2L364.2 524.2L363.2 523.2ZM364.2 519.2L365.2 518.2L366.2 518.8L365.8 520.2L364.8 520.2ZM366.8 517.8L367.2 516.2L368.2 517.2L367.2 518.2ZM234.2 503.2L235.2 502.2L236.2 502.8L235.8 504.2L234.8 504.2ZM378.8 501.2L379.8 500.8L380.2 501.8L379.2 502.2ZM236.8 501.2L237.8 500.8L238.2 501.8L237.2 502.2ZM578.2 481.2L579.8 480.8L580.2 481.8L578.8 482.2ZM649.8 481.2L650.8 480.2L651.8 481.8L650.2 482.2ZM403.8 370.2L410.2 370.2L417.2 373.8L424.2 382.2L426.2 386.2L428.2 394.2L427.8 401.2L424.2 409.8L417.8 416.2L411.8 418.8L404.2 418.2L398.8 415.8L394.8 412.8L387.8 404.8L385.2 397.8L385.8 388.8L389.8 380.8L394.8 375.2L398.8 372.2ZM314.2 353.8L318.8 352.8L326.2 352.8L331.2 353.8L335.8 356.2L341.8 363.8L345.8 372.2L350.2 384.8L352.2 392.8L353.2 402.2L352.2 418.2L352.8 441.2L356.2 454.8L360.2 463.2L363.8 467.8L363.8 516.2L362.8 517.2L364.2 518.8L364.2 519.8L363.2 520.8L359.2 517.8L359.8 515.8L355.2 511.8L355.2 509.2L345.2 500.2L345.2 497.8L332.2 485.8L328.8 483.8L327.8 482.2L325.8 483.8L314.2 483.8L303.8 474.2L300.2 469.2L298.2 463.8L297.2 457.2L296.8 434.8L295.8 423.2L292.8 404.8L292.8 394.8L294.2 386.8L302.2 366.2L305.8 360.2L310.2 355.8ZM502.8 335.2L514.8 336.8L526.2 336.8L530.8 337.8L543.2 344.2L548.2 348.8L551.8 353.8L558.2 370.8L562.2 385.2L563.8 394.2L563.8 402.8L560.8 421.8L560.8 430.2L564.2 440.2L570.2 448.8L574.2 456.2L576.2 461.8L576.8 465.8L576.8 481.8L578.2 482.8L578.2 483.8L552.8 509.2L552.8 511.8L548.8 515.2L548.8 517.8L544.8 521.2L544.8 523.8L542.8 525.2L542.8 527.8L538.8 531.2L538.8 533.8L536.2 536.2L536.8 537.8L534.2 539.8L534.8 541.8L532.2 543.8L532.8 545.8L530.8 546.8L530.8 549.8L528.8 550.8L528.8 553.8L526.2 555.8L526.8 559.8L524.8 561.2L524.8 563.8L523.8 565.2L522.8 564.8L522.8 561.8L520.8 559.8L521.2 556.2L518.8 553.8L519.2 552.2L516.8 549.8L517.2 548.2L514.8 545.8L515.2 544.2L512.8 541.8L513.2 540.2L510.8 537.8L511.2 536.2L508.8 533.8L508.8 531.2L504.8 527.8L505.2 526.2L502.8 523.8L503.2 522.2L498.8 517.8L499.2 516.2L494.8 511.8L495.2 510.2L484.8 499.8L485.2 498.2L465.8 479.2L459.2 474.2L458.2 475.8L452.8 475.8L438.8 482.2L426.8 486.2L416.8 488.2L396.2 488.2L385.2 496.8L383.8 498.8L382.8 498.8L381.2 500.8L380.2 499.8L380.2 498.8L381.8 497.8L380.8 491.8L380.2 468.8L389.8 457.8L402.2 445.8L409.2 441.8L414.8 439.8L425.2 439.8L440.2 443.8L449.8 444.2L452.8 443.2L457.2 439.2L461.2 431.8L463.2 423.8L465.8 399.8L468.2 386.2L471.8 372.2L473.8 367.2L473.8 365.2L477.8 354.2L480.2 350.2L486.2 344.2L495.2 338.2ZM616.2 240.2L623.8 241.8L631.2 246.2L636.2 251.8L639.8 259.8L639.8 267.8L638.2 272.8L635.8 277.2L629.2 283.8L622.2 286.2L617.2 285.8L610.2 282.2L602.8 273.8L599.2 265.2L599.2 256.2L602.2 249.2L607.2 243.8L610.2 241.8ZM412.2 240.2L417.2 242.2L424.2 249.2L427.8 258.8L427.8 263.8L426.2 269.8L422.2 277.2L415.2 283.8L410.8 285.8L406.2 286.2L403.2 285.8L396.2 282.2L389.8 275.2L385.8 266.2L385.8 258.8L389.8 250.8L397.2 243.8L405.2 240.2ZM240.2 239.2L245.8 239.8L250.2 241.8L255.8 245.8L261.8 252.8L264.2 258.8L264.2 264.8L262.2 270.2L258.8 275.8L252.2 282.2L249.2 284.2L243.2 286.2L237.2 285.8L232.8 283.8L228.2 280.2L223.8 273.8L221.2 265.8L221.8 256.8L225.8 248.8L232.8 241.8L236.8 239.8ZM205.8 172.2L207.2 171.8L207.8 172.8L206.8 173.8ZM126.8 168.2L127.2 167.8L128.2 168.8L127.2 169.2ZM124.2 166.2L125.8 165.8L126.2 167.2L125.2 167.8ZM122.2 164.2L123.8 163.8L124.2 165.2L122.8 165.8ZM378.8 154.2L379.8 153.8L380.2 154.8L379.2 155.2ZM376.8 152.2L377.2 151.8L378.2 152.8L377.2 153.2ZM367.8 137.8L368.2 139.2L367.2 140.2L366.2 138.8ZM364.2 136.2L365.8 135.8L366.2 137.2L364.8 137.8ZM639.2 167.8L640.2 187.2L639.8 188.8L631.8 200.8L624.2 208.2L615.2 213.8L607.8 215.8L600.2 215.8L593.2 214.2L580.2 214.8L576.8 216.8L572.2 221.8L568.2 232.2L564.2 264.2L554.2 299.2L549.8 307.2L544.8 311.8L537.8 315.8L527.8 318.2L514.2 317.2L504.8 319.8L499.2 319.8L488.2 314.2L480.2 307.2L477.8 303.2L473.8 292.2L467.8 268.2L465.8 256.2L463.8 232.2L461.8 223.2L458.8 216.2L455.2 212.2L452.8 210.8L448.2 210.2L426.2 215.8L415.8 215.8L410.2 214.2L402.8 210.2L395.2 204.2L380.2 187.8L380.2 171.2L381.8 162.2L381.8 157.8L380.2 156.2L381.2 155.2L382.8 157.2L383.8 157.2L385.2 159.2L396.8 168.2L407.2 167.8L424.2 169.8L437.2 173.8L445.8 178.2L453.8 183.8L457.8 183.8L459.8 182.8L484.8 158.8L484.8 156.2L494.8 146.8L494.8 144.2L500.8 138.8L500.8 136.2L506.8 130.8L506.8 128.2L512.8 122.8L512.8 120.2L515.8 117.2L517.2 117.8L519.2 120.2L519.2 122.2L525.2 128.2L525.2 130.2L531.2 136.2L531.2 138.2L537.2 144.2L537.2 146.2L555.8 164.8L570.2 177.8L578.8 177.2L594.2 171.8L603.2 169.8L617.8 167.8ZM269.2 67.2L270.2 68.2L270.2 71.2L268.2 72.2L269.2 187.8L262.8 194.2L262.2 195.8L255.8 203.2L245.8 211.8L240.8 214.2L236.2 215.2L228.8 214.2L220.8 209.8L215.8 204.8L211.8 198.8L209.8 192.2L209.2 187.2L209.8 172.2L207.2 170.8L219.8 158.2L219.2 156.2L229.8 146.2L229.2 144.2L233.8 140.2L233.2 138.2L237.8 134.2L237.2 132.2L239.2 131.2L239.2 128.2L243.8 124.2L243.2 122.2L245.2 121.2L245.2 118.2L247.2 117.2L247.2 114.2L249.8 112.2L249.2 110.2L251.8 108.8L251.2 106.2L253.8 104.8L253.2 102.2L255.8 100.8L255.2 96.2L257.8 94.8L257.8 91.8L259.8 91.2L259.2 88.8L260.8 87.2L261.8 87.2L261.2 82.8L262.8 81.2L263.8 81.2L263.2 78.8L264.8 77.2L265.8 77.2L265.2 72.8L266.8 71.2L267.8 71.2L267.8 68.2ZM270.8 61.2L272.2 62.2L272.2 66.8L271.2 68.2L269.8 67.8L269.8 62.2ZM272.8 55.2L274.2 56.2L274.2 60.2L273.2 62.2L271.8 61.8L271.8 56.2ZM275.2 49.2L276.2 50.2L276.2 54.2L274.2 56.2L273.8 50.2ZM277.2 43.2L278.2 44.2L278.2 48.2L276.2 50.2L275.8 44.2ZM278.8 39.2L280.2 40.2L280.2 42.8L279.2 44.2L277.8 43.8L277.8 40.2ZM280.8 31.2L282.2 32.2L282.2 39.2L281.2 40.2L279.8 39.8L279.8 32.2Z"/>
<path fill="#a85000" fill-rule="evenodd" d="M335.2 490.2L334.8 490.8L335.8 491.2ZM373.2 421.8L371.2 422.8L368.8 425.8L367.2 433.2L368.2 437.2L371.2 441.2L373.2 442.2L377.2 442.2L378.8 441.8L382.8 436.8L383.2 429.2L381.8 425.8L378.8 422.8L376.8 421.8ZM273.8 420.8L269.2 419.8L264.2 420.2L253.8 424.2L244.8 430.2L240.2 436.2L238.8 442.2L238.8 449.8L240.8 465.8L240.8 495.8L242.8 497.2L230.8 509.2L230.8 511.8L226.8 515.8L226.8 518.2L222.8 521.8L222.8 524.2L220.8 525.8L220.8 528.2L216.8 531.8L216.8 534.2L214.8 535.8L214.8 538.2L212.8 539.8L212.8 542.2L210.8 543.8L210.8 546.2L208.8 547.8L208.8 550.2L206.8 551.8L206.8 554.2L204.8 555.8L205.2 559.2L202.8 561.8L202.8 564.2L200.8 565.8L200.8 568.2L198.8 569.8L199.2 573.2L196.8 575.8L196.8 578.2L194.8 579.8L195.2 583.2L192.8 585.8L192.8 588.2L190.8 589.8L190.8 594.2L188.8 595.8L188.8 600.2L186.8 601.8L186.8 606.2L184.8 607.8L184.8 612.2L182.8 613.8L182.8 618.2L180.8 619.8L180.8 624.2L178.8 625.8L178.8 630.2L176.8 631.8L177.2 635.2L174.8 637.8L175.2 641.2L172.8 643.8L172.8 648.2L170.8 649.8L171.2 655.2L168.8 657.8L168.8 662.2L166.8 663.8L167.2 669.2L164.8 671.8L165.2 675.2L162.8 677.8L163.2 683.2L160.8 685.8L161.2 691.2L158.8 693.8L159.2 697.2L156.8 699.8L156.8 700.8L365.2 700.8L365.2 525.8L362.8 524.2L362.8 522.2L358.8 518.2L358.8 516.2L354.8 512.8L354.8 510.2L344.2 500.2L344.2 497.8L337.2 491.8L313.8 492.2L297.8 477.8L292.2 469.8L287.8 457.8L285.2 443.2L281.8 431.2L277.8 424.2ZM242.2 495.2L243.2 494.2L244.2 494.8L243.8 496.2L242.8 496.2ZM244.8 493.8L245.2 492.8L246.2 493.2L245.2 494.2ZM922.2 407.8L930.8 407.2L922.8 406.8ZM910.2 405.8L919.8 405.2L910.8 404.8ZM399.8 501.8L399.8 504.2L401.8 506.2L407.2 508.8L414.8 510.2L423.2 514.2L426.2 516.8L428.2 521.8L428.2 700.8L522.8 700.8L523.2 567.2L523.8 700.8L811.2 700.8L811.2 699.8L805.2 693.8L805.2 691.8L801.2 687.8L801.2 685.8L795.2 679.8L795.2 677.8L791.2 673.8L791.2 671.8L785.2 665.8L785.2 663.8L781.2 659.8L781.2 657.8L775.2 651.8L775.2 649.8L771.2 645.8L771.2 643.8L765.2 637.8L765.2 635.8L761.2 631.8L761.2 629.8L755.2 623.8L755.2 621.8L751.2 617.8L751.2 615.8L745.2 609.8L745.2 607.8L741.2 603.8L741.2 601.8L735.2 595.8L735.2 593.8L731.2 589.8L731.2 587.8L725.2 581.8L725.2 579.8L721.2 575.8L721.2 573.8L715.2 567.8L715.2 565.8L711.2 561.8L711.2 559.8L705.2 553.8L705.2 551.8L701.2 547.8L701.2 545.8L695.2 539.8L695.2 537.8L691.2 533.8L691.2 531.8L685.2 525.8L685.2 523.8L681.2 519.8L681.2 517.8L675.2 511.8L675.2 509.8L665.2 499.8L665.2 497.2L645.8 477.8L645.8 476.8L647.2 476.2L647.8 470.8L647.2 461.8L648.8 447.8L648.8 437.2L647.8 432.8L643.2 426.2L636.8 422.2L631.8 420.2L614.8 416.2L609.2 414.2L594.8 406.2L589.8 404.8L583.8 405.2L578.8 409.2L576.2 414.8L575.8 420.8L578.8 441.8L580.2 446.2L582.2 458.2L582.2 476.8L583.8 476.2L584.2 477.8L582.2 478.2L582.8 479.2L552.8 509.8L552.8 512.2L548.8 515.8L548.8 518.2L544.8 521.8L544.8 524.2L542.8 525.8L542.8 528.2L538.8 531.8L538.8 533.8L536.8 535.2L536.8 537.8L534.8 539.2L534.8 541.8L532.8 543.2L532.8 545.8L530.8 547.2L530.8 549.8L528.8 551.2L528.8 553.8L526.8 555.2L526.8 559.8L524.8 561.8L524.8 564.8L523.8 566.2L522.2 565.2L522.2 561.8L520.2 560.2L520.2 555.8L518.2 554.2L518.2 551.8L516.2 550.2L516.2 547.8L514.2 546.2L514.2 543.8L512.2 542.2L512.2 539.8L510.2 538.2L510.2 535.8L508.2 534.2L508.2 531.8L504.2 528.2L504.2 525.8L502.2 524.2L502.2 521.8L498.2 518.2L498.2 515.8L494.2 512.2L494.2 509.8L484.2 500.2L484.2 497.8L473.8 488.2L472.8 488.2L471.8 490.2L452.8 489.8L433.2 494.2L402.2 498.8ZM898.2 403.8L907.8 403.2L898.8 402.8ZM886.2 401.8L895.8 401.2L886.8 400.8ZM874.2 399.8L883.8 399.2L874.8 398.8ZM862.2 397.8L871.8 397.2L862.8 396.8ZM850.2 395.8L859.8 395.2L850.8 394.8ZM838.2 393.8L847.8 393.2L838.8 392.8ZM826.2 391.8L835.8 391.2L826.8 390.8ZM814.2 389.8L823.8 389.2L814.8 388.8ZM802.2 387.8L811.8 387.2L802.8 386.8ZM790.2 385.8L799.8 385.2L790.8 384.8ZM778.2 383.8L787.8 383.2L778.8 382.8ZM766.2 381.8L775.8 381.2L766.8 380.8ZM754.2 379.8L763.8 379.2L754.8 378.8ZM742.2 377.8L751.8 377.2L742.8 376.8ZM730.2 375.8L739.8 375.2L730.8 374.8ZM720.2 373.8L727.8 373.2L720.8 372.8ZM373.2 217.2L369.2 220.2L367.8 223.2L367.2 228.2L368.2 231.8L371.2 235.2L376.2 236.2L379.8 234.8L381.8 232.8L383.2 229.8L383.8 224.8L382.8 221.8L379.8 218.2L377.8 217.2ZM539.2 326.2L539.2 330.2L541.2 333.8L551.2 341.8L556.2 347.2L559.8 352.8L562.8 359.8L570.8 372.8L576.8 378.8L582.2 380.8L589.2 379.2L606.8 368.2L616.8 365.2L627.8 365.8L635.2 368.2L646.2 373.2L650.8 374.2L658.8 374.2L667.8 371.8L681.2 365.8L693.8 362.8L720.2 362.8L729.8 361.8L731.2 363.8L743.8 363.2L745.8 365.8L757.8 365.2L759.8 367.8L771.8 367.2L773.8 369.8L785.8 369.2L787.8 371.8L799.8 371.2L801.8 373.8L813.8 373.2L815.8 375.8L827.8 375.2L829.8 377.8L841.8 377.2L843.8 379.8L855.8 379.2L857.8 381.8L869.8 381.2L871.8 383.8L883.8 383.2L885.8 385.8L897.8 385.2L899.8 387.8L911.8 387.2L913.8 389.8L925.8 389.2L926.8 391.2L930.8 391.8L930.8 325.2L924.8 325.8L921.8 323.2L910.8 323.8L907.8 321.2L896.8 321.8L893.8 319.2L882.8 319.8L879.8 317.2L868.8 317.8L865.8 315.2L854.8 315.8L851.8 313.2L840.8 313.8L837.8 311.2L826.8 311.8L823.8 309.2L812.8 309.8L809.8 307.2L798.8 307.8L795.8 305.2L784.8 305.8L781.8 303.2L770.8 303.8L767.8 301.2L756.8 301.8L753.8 299.2L742.8 299.8L741.2 299.2L740.2 297.8L731.8 297.8L729.8 295.8L720.8 295.8L719.8 294.2L703.8 294.8L693.2 288.2L682.8 277.8L678.2 270.8L675.8 264.8L676.2 254.2L682.2 242.8L685.8 237.8L688.8 230.2L689.2 223.8L687.8 218.2L683.2 210.2L675.8 200.2L669.2 193.8L663.2 190.8L659.2 190.8L656.8 191.8L650.2 196.8L640.8 209.8L636.2 219.2L636.8 229.2L638.8 233.2L649.8 248.8L652.8 256.8L652.2 264.8L650.2 269.2L644.8 277.2L637.8 284.2L629.8 289.2L624.2 290.8L615.8 290.8L607.2 288.2L587.8 277.2L583.8 276.2L580.2 276.8L576.2 278.8L570.8 284.2L564.8 294.2L558.2 307.8L551.2 315.2L543.2 320.8L540.8 323.2ZM425.8 -0.8L425.8 138.2L424.2 141.8L420.8 144.8L414.8 147.8L404.8 149.8L399.2 152.2L397.2 153.8L395.8 156.8L396.2 157.8L443.8 165.8L453.8 168.8L470.2 168.2L470.8 169.8L471.8 169.8L484.8 157.8L484.8 155.2L494.2 146.2L494.2 143.8L500.2 138.2L500.2 135.8L506.2 130.2L506.2 127.8L512.2 122.2L512.2 119.8L515.8 116.2L516.8 116.2L519.8 119.2L519.8 121.8L525.8 127.2L525.8 129.8L531.8 135.2L531.8 137.8L537.8 143.2L537.8 145.8L558.2 165.8L559.2 165.8L559.8 164.2L581.2 165.2L585.8 164.2L595.8 163.8L611.2 161.8L618.8 159.8L627.2 158.8L631.8 157.2L630.8 154.2L628.2 152.2L623.8 150.2L618.2 149.2L606.8 145.2L602.8 143.2L599.8 140.2L599.2 138.8L598.8 -0.8ZM2.8 -0.8L2.8 0.8L6.8 4.2L6.8 6.8L12.8 12.2L12.8 14.8L16.8 18.2L16.8 20.8L22.8 26.2L22.8 28.8L26.8 32.2L26.8 34.8L32.8 40.2L32.8 42.8L36.8 46.2L36.8 48.8L42.8 54.2L42.8 56.8L46.8 60.2L46.8 62.8L52.8 68.2L52.8 70.8L56.8 74.2L56.8 76.8L62.8 82.2L62.8 84.8L66.8 88.2L66.8 90.8L72.8 96.2L72.8 98.8L76.8 102.2L76.8 104.8L82.8 110.2L82.8 112.8L86.8 116.2L86.8 118.8L92.8 124.2L92.8 126.8L96.8 130.2L96.8 132.8L102.8 138.2L102.8 140.8L106.8 144.2L106.8 146.8L128.8 168.8L126.8 170.2L126.8 188.2L130.2 197.2L132.2 200.2L132.2 201.8L142.8 218.8L146.8 223.8L156.8 233.2L181.8 249.8L190.2 258.2L190.2 265.8L186.2 273.2L176.2 285.8L158.8 302.8L147.8 316.8L138.2 327.2L135.2 333.2L136.8 336.8L142.2 339.8L149.8 342.2L150.8 343.2L153.8 343.8L157.2 345.8L191.8 356.2L209.8 363.8L215.2 364.8L225.2 364.8L230.8 363.8L245.2 364.2L255.2 367.8L269.8 375.8L275.2 377.2L280.8 376.2L285.2 373.8L293.8 364.2L300.2 354.8L306.8 348.8L312.8 346.8L330.2 346.8L335.8 347.8L339.8 349.8L346.2 356.2L346.2 357.2L356.8 371.8L360.8 375.8L366.8 379.2L371.2 379.8L377.2 377.8L388.2 370.8L397.2 366.2L404.2 364.8L409.8 364.8L416.2 366.2L423.2 369.8L438.8 381.8L442.8 383.8L448.8 384.2L451.2 383.2L455.8 379.8L463.8 367.8L471.8 350.2L475.8 344.8L487.2 333.8L489.2 328.2L487.2 322.8L478.8 315.2L471.8 307.2L467.8 299.2L467.2 296.8L459.2 281.8L452.8 274.2L449.2 272.2L443.8 272.2L438.8 274.8L423.8 286.2L415.2 290.2L410.2 291.2L403.2 291.2L396.8 289.8L376.2 278.2L368.8 276.8L364.2 278.2L360.8 280.8L354.2 288.2L345.8 300.8L337.8 307.8L327.2 309.8L312.2 309.8L304.2 306.2L298.2 299.8L289.2 287.2L284.2 282.8L280.2 280.8L271.2 280.8L250.8 290.2L241.8 291.8L235.2 290.8L227.8 287.8L220.2 282.2L213.8 275.8L205.8 264.8L204.2 260.8L204.2 257.2L213.8 235.8L214.2 226.8L212.8 220.8L205.8 203.2L204.2 192.2L204.8 176.2L203.2 174.8L219.2 158.8L219.2 156.2L229.2 146.8L229.2 144.2L233.2 140.8L233.2 138.2L237.2 134.8L237.2 132.2L239.2 130.8L239.2 128.2L243.2 124.8L243.2 122.2L245.2 120.8L245.2 118.2L247.2 116.8L247.2 114.2L249.2 112.8L249.2 110.2L251.2 108.8L251.2 106.2L253.2 104.8L253.2 102.2L255.2 100.8L255.2 96.2L257.2 94.8L257.2 92.2L259.2 90.8L259.2 88.2L261.8 85.8L261.2 82.2L263.2 80.8L263.2 78.2L265.8 75.8L265.2 72.2L267.2 70.8L267.2 68.2L269.8 66.2L269.2 62.2L271.8 60.2L271.2 56.2L273.8 54.2L273.2 50.2L275.8 48.2L275.2 44.2L277.2 43.2L277.2 40.2L279.8 38.2L279.2 32.2L281.8 30.2L281.2 26.2L283.8 23.8L283.2 20.2L285.8 17.8L285.2 14.2L287.2 12.8L287.2 8.2L289.8 5.8L289.2 -0.8ZM201.8 176.2L203.2 175.8L203.8 176.8L202.8 177.8ZM130.8 172.2L131.2 171.8L132.2 172.8L131.2 173.2ZM128.2 170.2L129.8 169.8L130.2 171.2L129.2 171.8Z"/>
<path fill="#a87c00" fill-rule="evenodd" d="M483.8 498.2L482.8 498.8L483.2 499.8ZM461.2 501.8L457.8 498.8L449.8 498.2L435.2 501.2L433.8 502.2L433.8 503.8L440.8 506.2L455.2 507.8L459.8 505.8L461.2 504.2ZM343.8 498.2L342.8 498.8L343.2 499.8ZM267.8 446.2L263.2 444.8L258.2 446.2L254.2 450.8L250.2 464.2L249.8 487.8L250.8 489.2L231.2 509.2L231.2 511.8L227.2 515.8L227.2 517.8L223.2 521.8L223.2 523.8L221.2 525.8L221.2 527.8L217.2 531.8L217.2 533.8L215.2 535.8L215.2 537.8L213.2 539.8L213.2 541.8L211.2 543.8L211.2 545.8L209.2 547.8L209.2 549.8L207.2 551.8L207.2 553.8L205.2 555.8L205.2 559.8L203.2 561.8L203.2 563.8L201.2 565.8L201.2 567.8L199.2 569.8L199.2 573.8L197.2 575.8L197.2 577.8L195.2 579.8L195.2 583.8L193.2 585.8L193.2 587.8L191.2 589.8L191.2 593.8L189.2 595.8L189.2 599.8L187.2 601.8L187.2 605.8L185.2 607.8L185.2 611.8L183.2 613.8L183.2 617.8L181.2 619.8L181.2 623.8L179.2 625.8L179.2 629.8L177.2 631.8L177.2 635.8L175.2 637.8L175.2 641.8L173.2 643.8L173.2 647.8L171.2 649.8L171.2 655.8L169.2 657.8L169.2 661.8L167.2 663.8L167.2 669.8L165.2 671.8L165.2 675.8L163.2 677.8L163.2 683.8L161.2 685.8L161.2 691.8L159.2 693.8L159.2 697.8L157.2 699.8L157.2 700.8L311.2 700.8L311.2 498.2L301.8 490.2L287.8 475.8L279.8 463.8L273.8 452.8L270.8 448.8ZM249.8 487.2L250.8 486.2L252.2 486.8L251.8 488.2ZM252.8 485.8L253.2 484.8L254.2 485.2L253.2 486.2ZM594.2 420.8L592.2 422.8L589.8 440.2L588.8 458.8L587.2 466.8L587.2 471.8L588.2 473.8L582.8 480.2L553.2 509.2L553.2 511.8L549.2 515.2L549.2 517.8L545.2 521.2L545.2 523.8L542.8 525.8L543.2 527.8L538.8 531.8L539.2 533.2L536.8 535.8L537.2 537.2L534.8 539.8L534.8 542.2L532.8 543.8L532.8 546.2L530.8 547.8L530.8 550.2L528.8 551.8L528.8 554.2L526.8 555.8L527.2 559.2L524.8 562.2L524.2 700.8L811.2 700.8L811.2 699.8L805.2 694.2L805.2 691.8L800.8 687.2L801.2 685.8L795.2 680.2L795.2 677.8L790.8 673.2L791.2 671.8L785.2 666.2L785.2 663.8L780.8 659.2L781.2 657.8L775.2 652.2L775.2 649.8L770.8 645.2L771.2 643.8L765.2 638.2L765.2 635.8L760.8 631.2L761.2 629.8L755.2 624.2L755.2 621.8L750.8 617.2L751.2 615.8L745.2 610.2L745.2 607.8L740.8 603.2L741.2 601.8L735.2 596.2L735.2 593.8L730.8 589.2L731.2 587.8L725.2 582.2L725.2 579.8L720.8 575.2L721.2 573.8L715.2 568.2L715.2 565.8L710.8 561.2L711.2 559.8L705.2 554.2L705.2 551.8L700.8 547.2L701.2 545.8L695.2 540.2L695.2 537.8L690.8 533.2L691.2 531.8L685.2 526.2L685.2 523.8L680.8 519.2L681.2 517.8L675.2 512.2L675.2 509.8L665.2 500.2L665.2 497.8L647.2 480.2L641.2 473.2L642.2 471.8L642.2 466.2L639.8 449.8L637.8 442.8L634.2 436.2L628.2 430.2L621.8 426.8L598.2 420.8ZM922.8 326.2L922.8 327.2L930.8 327.2L930.8 326.2ZM908.8 324.2L908.8 325.2L922.2 325.2L921.8 324.2ZM894.8 322.2L894.8 323.2L908.2 323.2L907.8 322.2ZM880.8 320.2L880.8 321.2L894.2 321.2L893.8 320.2ZM866.8 318.2L866.8 319.2L880.2 319.2L879.8 318.2ZM852.8 316.2L852.8 317.2L866.2 317.2L865.8 316.2ZM838.8 314.2L838.8 315.2L852.2 315.2L851.8 314.2ZM824.8 312.2L824.8 313.2L838.2 313.2L837.8 312.2ZM810.8 310.2L810.8 311.2L824.2 311.2L823.8 310.2ZM796.8 308.2L796.8 309.2L810.2 309.2L809.8 308.2ZM782.8 306.2L782.8 307.2L796.2 307.2L795.8 306.2ZM768.8 304.2L768.8 305.2L782.2 305.2L781.8 304.2ZM754.8 302.2L754.8 303.2L768.2 303.2L767.8 302.2ZM740.2 300.2L740.2 301.2L754.2 301.2L753.8 300.2ZM739.8 298.8L739.2 298.2L738.8 299.2ZM157.2 324.2L158.2 331.2L162.8 336.2L166.8 339.2L180.2 345.8L183.2 346.2L184.2 347.2L187.2 347.8L204.2 354.8L215.2 357.8L242.2 358.2L250.8 359.8L262.8 363.8L270.2 365.2L274.2 365.2L279.8 363.8L285.2 360.2L289.8 355.8L300.2 341.8L304.2 338.8L308.8 337.8L318.8 340.2L329.2 340.2L333.8 339.2L341.8 340.2L346.2 344.2L358.2 359.8L366.8 365.8L370.8 366.8L381.8 365.8L392.2 361.8L400.8 359.8L412.8 359.8L422.2 362.2L435.8 367.8L440.8 368.8L448.8 367.8L452.8 365.2L459.8 357.2L467.8 343.2L479.8 332.2L481.2 328.8L479.8 324.2L475.8 320.2L470.8 316.8L466.2 311.8L457.2 296.2L451.8 290.8L446.8 288.2L437.2 288.2L422.8 293.8L413.8 296.2L400.2 296.2L391.8 294.2L380.2 290.2L368.2 290.2L361.2 294.2L356.2 299.2L348.2 309.8L341.2 316.2L337.2 317.2L328.2 315.8L320.2 315.8L310.8 318.2L304.8 318.2L298.8 313.2L292.2 304.2L284.8 296.2L278.8 292.8L269.2 291.8L262.8 292.8L261.2 293.8L256.8 294.2L250.2 296.2L234.8 296.2L223.8 292.2L213.8 286.2L203.2 281.8L196.2 281.8L192.8 282.8L186.2 286.8L179.8 292.2L168.2 303.8L164.2 308.8L158.8 318.2ZM548.2 326.2L548.2 330.2L551.2 333.8L560.2 340.8L572.2 358.8L580.2 365.2L586.2 366.8L595.2 365.8L605.2 362.2L614.8 360.2L624.2 360.2L650.8 367.2L659.8 367.2L668.2 365.2L682.8 360.2L687.2 359.8L693.8 357.8L709.8 357.8L711.2 359.2L719.8 359.2L721.8 361.2L729.8 360.8L731.8 362.8L744.2 362.8L745.8 364.8L758.2 364.8L759.8 366.8L772.2 366.8L773.8 368.8L786.2 368.8L787.8 370.8L800.2 370.8L801.8 372.8L814.2 372.8L815.8 374.8L828.2 374.8L829.8 376.8L842.2 376.8L843.8 378.8L856.2 378.8L857.8 380.8L870.2 380.8L871.8 382.8L884.2 382.8L885.8 384.8L898.2 384.8L899.8 386.8L912.2 386.8L913.8 388.8L926.2 388.8L927.8 390.8L930.8 390.8L930.8 342.2L920.8 342.8L919.2 341.2L919.2 340.2L908.8 340.8L907.2 339.2L907.2 338.2L896.8 338.8L895.2 337.2L895.2 336.2L884.8 336.8L883.2 335.2L883.2 334.2L872.8 334.8L871.2 333.2L871.2 332.2L860.8 332.8L859.2 331.2L859.2 330.2L848.8 330.8L847.2 329.2L847.2 328.2L836.8 328.8L835.2 327.2L835.2 326.2L824.8 326.8L823.2 325.2L823.2 324.2L812.8 324.8L811.2 323.2L811.2 322.2L800.8 322.8L799.2 321.2L799.2 320.2L788.8 320.8L787.2 319.2L787.2 318.2L776.8 318.8L775.2 317.2L775.2 316.2L764.8 316.8L763.2 315.2L763.2 314.2L752.8 314.8L751.2 313.2L751.2 312.2L740.8 312.8L739.2 311.2L739.2 310.2L730.8 310.8L729.2 309.8L729.2 308.2L720.8 308.8L719.2 307.8L719.2 306.2L714.8 306.8L713.2 305.8L712.8 304.2L707.8 304.2L705.2 301.8L705.2 300.8L692.8 294.2L671.2 278.2L665.8 276.2L661.8 276.2L656.2 278.2L635.8 291.8L623.8 295.8L612.8 295.8L592.8 290.2L582.2 290.8L578.2 292.8L574.2 296.2L570.2 301.2L561.8 314.8L551.2 322.8ZM660.8 217.8L658.8 218.8L656.8 221.2L656.2 226.2L657.2 228.8L659.2 230.8L661.2 231.8L665.2 231.8L667.8 230.2L669.2 228.2L669.8 222.8L666.8 218.8L664.8 217.8ZM481.2 158.8L480.8 159.2L481.8 159.8ZM483.2 154.8L482.8 157.8L483.8 157.8ZM574.8 155.8L574.8 157.2L576.8 158.2L593.8 158.2L598.8 156.8L598.8 155.8L596.2 154.2L585.8 152.8L577.2 153.2ZM484.8 152.8L484.8 153.8L485.8 153.8L485.8 152.8ZM486.8 150.8L486.8 151.8L487.8 151.8L487.8 150.8ZM489.8 148.8L488.8 149.8L489.8 149.8ZM473.8 157.2L472.2 153.8L469.8 151.8L464.2 149.2L456.2 147.2L453.2 147.2L448.8 149.2L433.8 152.2L428.8 154.2L427.2 155.8L428.2 157.8L432.2 158.8L451.8 160.8L462.8 159.8ZM491.8 146.8L490.8 147.8L491.8 147.8ZM493.2 143.2L492.8 145.8L493.8 145.8ZM495.8 140.8L494.8 141.8L495.8 141.8ZM497.8 138.8L496.8 139.8L497.8 139.8ZM499.2 135.2L498.8 137.8L499.8 137.8ZM501.8 132.8L500.8 133.8L501.8 133.8ZM503.8 130.8L502.8 131.8L503.8 131.8ZM505.2 127.2L504.8 129.8L505.8 129.8ZM507.8 124.8L506.8 125.8L507.8 125.8ZM509.8 122.8L508.8 123.8L509.8 123.8ZM511.2 119.2L510.8 121.8L511.8 121.8ZM513.8 116.8L512.8 117.8L513.8 117.8ZM515.2 114.8L515.8 115.8L516.2 115.2ZM2.8 -0.8L2.8 0.2L6.8 3.8L6.8 6.2L12.8 11.8L12.8 14.2L16.8 17.8L16.8 20.2L22.8 25.8L22.8 28.2L26.8 31.8L26.8 34.2L32.8 39.8L32.8 42.2L36.8 45.8L36.8 48.2L42.8 53.8L42.8 56.2L46.8 59.8L46.8 62.2L52.8 67.8L52.8 70.2L56.8 73.8L56.8 76.2L62.8 81.8L62.8 84.2L66.8 87.8L66.8 90.2L72.8 95.8L72.8 98.2L76.8 101.8L76.8 104.2L82.8 109.8L82.8 112.2L86.8 115.8L86.8 118.2L92.8 123.8L92.8 126.2L96.8 129.8L96.8 132.2L102.8 137.8L102.8 140.2L106.8 143.8L106.8 146.2L132.8 172.8L132.2 173.8L134.2 174.2L133.8 175.8L132.2 175.2L132.2 188.8L136.8 197.8L144.8 209.2L160.2 225.8L170.8 233.8L177.2 236.8L182.8 238.2L189.2 238.2L194.8 235.8L197.8 232.2L200.2 225.2L200.2 215.8L198.8 202.8L200.2 180.8L199.2 178.8L209.2 167.8L219.2 158.2L219.2 155.8L229.2 146.2L229.2 143.8L233.2 140.2L233.2 137.8L237.2 134.2L237.2 131.8L239.2 130.2L239.2 127.8L243.2 124.2L243.2 121.8L245.2 120.2L245.2 117.8L247.2 116.2L247.2 113.8L249.2 112.2L249.2 109.8L251.2 108.2L251.2 105.8L253.2 104.2L253.2 101.8L255.2 100.2L255.2 95.8L257.2 94.2L257.2 91.8L259.2 90.8L259.2 88.2L261.2 86.8L261.2 82.2L263.2 80.8L263.2 78.2L265.2 76.8L265.2 72.2L267.2 70.8L267.2 68.2L269.2 66.8L269.2 62.2L271.2 60.8L271.2 56.2L273.2 54.8L273.2 50.2L275.2 48.8L275.2 44.2L277.2 42.8L277.2 40.2L279.2 38.8L279.2 32.2L281.2 30.8L281.2 26.2L283.2 24.8L283.2 20.2L285.2 18.8L285.2 14.2L287.2 12.8L287.2 8.2L289.2 6.8L289.2 -0.8ZM197.8 180.2L199.2 179.8L199.8 180.8L198.2 181.2ZM134.8 176.2L135.2 175.8L136.2 176.8L135.2 177.2Z"/>
<path fill="#a8a400" fill-rule="evenodd" d="M273.2 470.8L271.8 470.2L267.8 472.8L231.2 509.8L231.2 512.2L227.2 515.8L227.2 518.2L223.2 521.8L223.2 524.2L221.2 525.8L221.2 528.2L217.2 531.8L217.2 534.2L215.2 535.8L215.2 538.2L213.2 539.8L213.2 542.2L211.2 543.8L211.2 546.2L209.2 547.8L209.2 550.2L207.2 551.8L207.2 554.2L205.2 555.8L205.2 560.2L203.2 561.8L203.2 564.2L201.2 565.8L201.2 568.2L199.2 569.8L199.2 574.2L197.2 575.8L197.2 578.2L195.2 579.8L195.2 584.2L193.2 585.8L193.2 588.2L191.2 589.8L191.2 594.2L189.2 595.8L189.2 600.2L187.2 601.8L187.2 606.2L185.2 607.8L185.2 612.2L183.2 613.8L183.2 618.2L181.2 619.8L181.2 624.2L179.2 625.8L179.2 630.2L177.2 631.8L177.2 636.2L175.2 637.8L175.2 642.2L173.2 643.8L173.2 648.2L171.2 649.8L171.2 656.2L169.2 657.8L169.2 662.2L167.2 663.8L167.2 670.2L165.2 671.8L165.2 676.2L163.2 677.8L163.2 684.2L161.2 685.8L161.2 692.2L159.2 693.8L159.2 698.2L157.2 699.8L157.2 700.8L301.8 700.8L301.8 498.2L294.8 492.2ZM604.8 439.8L600.8 444.8L599.2 448.2L595.8 461.2L592.2 468.2L592.8 469.8L553.2 509.8L553.2 511.8L549.2 515.8L549.2 517.8L545.2 521.8L545.2 523.8L543.2 525.8L543.2 527.8L539.2 531.8L539.2 533.8L537.2 535.8L537.2 537.8L535.2 539.8L535.2 541.8L533.2 543.8L533.2 545.8L531.2 547.8L531.2 549.8L529.2 551.8L529.2 553.8L527.2 555.8L527.2 559.8L525.2 561.8L524.8 700.8L810.8 700.8L810.8 699.8L804.8 693.8L804.8 691.8L800.8 687.8L800.8 685.8L794.8 679.8L794.8 677.8L790.8 673.8L790.8 671.8L784.8 665.8L784.8 663.8L780.8 659.8L780.8 657.8L774.8 651.8L774.8 649.8L770.8 645.8L770.8 643.8L764.8 637.8L764.8 635.8L760.8 631.8L760.8 629.8L754.8 623.8L754.8 621.8L750.8 617.8L750.8 615.8L744.8 609.8L744.8 607.8L740.8 603.8L740.8 601.8L734.8 595.8L734.8 593.8L730.8 589.8L730.8 587.8L724.8 581.8L724.8 579.8L720.8 575.8L720.8 573.8L714.8 567.8L714.8 565.8L710.8 561.8L710.8 559.8L704.8 553.8L704.8 551.8L700.8 547.8L700.8 545.8L694.8 539.8L694.8 537.8L690.8 533.8L690.8 531.8L684.8 525.8L684.8 523.8L680.8 519.8L680.8 517.8L674.8 511.8L674.8 509.8L664.8 499.8L664.8 497.8L637.2 469.8L637.2 468.2L633.8 461.2L631.8 454.8L627.8 446.8L621.2 440.2L616.2 437.8L609.8 437.2ZM321.2 327.2L321.2 328.8L322.2 329.8L324.8 329.8L325.8 328.8L325.2 326.8L324.2 326.2ZM467.8 326.8L460.2 317.8L453.8 306.2L447.2 300.2L442.2 298.2L430.8 298.2L423.8 300.2L411.8 302.2L401.8 302.2L382.8 298.8L374.8 298.8L369.8 300.2L364.8 303.2L358.2 310.2L354.8 316.8L352.8 322.8L352.2 331.8L356.2 343.2L360.8 349.8L368.2 355.8L372.8 357.2L381.8 357.8L399.2 354.2L409.2 353.8L422.8 355.8L432.8 358.2L441.8 358.2L448.2 355.8L453.2 351.2L462.2 336.2L467.2 330.8ZM170.8 318.8L170.8 323.8L172.8 328.8L176.8 333.2L182.2 337.2L198.8 345.2L201.8 345.8L210.2 349.2L219.8 351.2L237.8 351.8L252.8 353.8L260.8 355.8L272.8 355.8L278.8 353.2L285.2 347.2L289.2 339.8L290.2 335.2L290.2 322.8L287.2 313.2L284.2 308.8L279.8 304.2L271.2 300.8L260.2 300.8L252.8 302.2L236.2 302.2L227.8 300.2L207.8 292.8L197.2 292.2L190.8 294.8L182.8 300.2L178.2 304.8L174.2 310.2ZM564.2 325.8L564.2 330.8L570.8 341.8L574.2 346.2L574.2 347.2L580.8 353.8L584.2 355.8L589.2 357.2L598.8 357.2L612.2 355.2L622.8 355.2L630.2 356.2L642.2 359.8L645.2 359.8L650.8 361.2L659.2 361.2L695.2 352.8L697.8 353.2L699.8 354.8L704.2 354.8L706.2 356.8L709.8 356.2L711.8 358.2L720.2 358.2L721.8 360.2L730.2 360.2L732.2 362.2L744.8 362.2L746.2 364.2L758.8 364.2L760.2 366.2L772.8 366.2L774.2 368.2L786.8 368.2L788.2 370.2L800.8 370.2L802.2 372.2L814.8 372.2L816.2 374.2L828.8 374.2L830.2 376.2L842.8 376.2L844.2 378.2L856.8 378.2L858.2 380.2L870.8 380.2L872.2 382.2L884.8 382.2L886.2 384.2L898.8 384.2L900.2 386.2L912.8 386.2L914.2 388.2L926.8 388.2L928.2 390.2L930.8 390.2L930.8 343.2L919.8 343.2L918.2 341.2L907.8 341.2L906.2 339.2L895.8 339.2L894.2 337.2L883.8 337.2L882.2 335.2L871.8 335.2L870.2 333.2L859.8 333.2L858.2 331.2L847.8 331.2L846.2 329.2L835.8 329.2L834.2 327.2L823.8 327.2L822.2 325.2L811.8 325.2L810.2 323.2L799.8 323.2L798.2 321.2L787.8 321.2L786.2 319.2L775.8 319.2L774.2 317.2L763.8 317.2L762.2 315.2L751.8 315.2L750.2 313.2L739.8 313.2L738.2 311.2L729.8 311.2L727.8 309.2L719.8 309.2L717.2 307.2L713.8 307.8L711.8 305.8L706.8 305.8L705.8 304.2L704.2 305.2L702.2 305.2L677.2 290.2L667.2 286.2L659.8 286.2L653.2 288.2L637.8 296.2L625.8 300.2L608.8 300.8L597.8 299.2L591.2 299.2L584.8 300.8L578.8 304.8L575.8 308.2ZM2.8 -0.8L3.2 0.8L7.2 4.2L7.2 6.8L13.2 12.2L12.8 13.8L17.2 18.2L17.2 20.8L23.2 26.2L22.8 27.8L27.2 32.2L27.2 34.8L33.2 40.2L32.8 41.8L37.2 46.2L37.2 48.8L43.2 54.2L42.8 55.8L47.2 60.2L47.2 62.8L53.2 68.2L52.8 69.8L57.2 74.2L57.2 76.8L63.2 82.2L62.8 83.8L67.2 88.2L67.2 90.8L73.2 96.2L72.8 97.8L77.2 102.2L77.2 104.8L83.2 110.2L82.8 111.8L87.2 116.2L87.2 118.8L93.2 124.2L92.8 125.8L97.2 130.2L97.2 132.8L103.2 138.2L102.8 139.8L107.2 144.2L107.2 146.8L126.8 165.8L138.2 178.2L137.2 180.2L137.2 188.2L143.2 197.2L157.8 211.8L166.8 219.8L172.8 223.8L178.8 225.8L183.2 225.2L185.8 223.8L189.2 217.8L191.8 200.8L195.8 188.2L195.8 185.8L194.2 184.2L201.2 175.8L218.8 158.8L218.8 156.2L228.8 146.8L228.8 144.2L232.8 140.8L232.8 138.2L236.8 134.8L236.8 132.2L239.2 129.8L238.8 128.2L242.8 124.8L242.8 122.2L244.8 120.8L244.8 118.2L246.8 116.8L246.8 114.2L248.8 112.8L248.8 110.2L251.2 107.8L250.8 106.2L253.2 104.2L252.8 102.8L255.2 100.2L254.8 96.8L257.2 94.2L257.2 91.8L259.2 90.2L259.2 87.8L261.2 86.2L260.8 82.8L263.2 80.2L263.2 77.8L265.2 76.2L264.8 72.8L267.2 70.2L267.2 67.8L269.2 66.2L269.2 61.8L271.2 60.2L271.2 55.8L273.2 54.2L273.2 49.8L275.2 48.2L275.2 43.8L277.2 42.2L277.2 39.8L279.2 38.2L279.2 31.8L281.2 30.2L281.2 25.8L283.2 24.2L283.2 19.8L285.2 18.2L284.8 14.8L287.2 12.2L286.8 8.8L289.2 6.2L289.2 -0.8ZM138.8 180.2L139.2 179.8L139.8 180.8L139.2 181.2Z"/>
<path fill="#44a400" fill-rule="evenodd" d="M272.8 480.2L265.8 480.2L264.2 478.8L257.8 483.8L231.2 510.2L231.2 512.8L227.2 516.2L227.2 518.8L223.8 521.8L223.8 524.2L221.8 525.8L221.8 528.2L217.8 531.8L217.8 534.2L215.8 535.8L215.8 538.2L213.8 539.8L213.8 542.2L211.8 543.8L211.8 546.2L209.8 547.8L209.8 550.2L207.8 551.8L207.8 554.2L205.2 556.8L205.8 560.2L203.8 561.8L203.8 564.2L201.8 565.8L201.8 568.2L199.2 570.8L199.8 574.2L197.8 575.8L197.8 578.2L195.2 580.8L195.8 584.2L193.8 585.8L193.8 588.2L191.2 590.8L191.8 594.2L189.2 596.8L189.8 600.2L187.2 602.8L187.8 606.2L185.2 608.8L185.8 612.2L183.2 614.8L183.8 618.2L181.2 620.8L181.8 624.2L179.2 626.8L179.8 630.2L177.2 632.8L177.8 636.2L175.2 638.8L175.8 642.2L173.8 643.8L173.8 648.2L171.2 650.8L171.8 656.2L169.2 658.8L169.8 662.2L167.2 664.8L167.8 670.2L165.8 671.8L165.8 676.2L163.2 678.8L163.8 684.2L161.2 686.8L161.8 692.2L159.8 693.8L159.8 698.2L157.2 700.8L292.2 700.8L292.8 498.2ZM553.2 509.8L553.2 512.2L549.2 515.8L549.2 518.2L545.2 521.8L545.2 524.2L543.2 525.8L543.2 528.2L539.2 531.8L539.2 534.2L537.2 535.8L537.2 538.2L535.2 539.8L535.2 542.2L533.2 543.8L533.2 546.2L531.2 547.8L531.2 550.2L529.2 551.8L529.2 554.2L527.2 555.8L527.2 560.2L525.2 561.8L524.8 700.8L810.8 700.8L810.8 699.8L804.8 694.2L804.8 691.8L800.8 688.2L800.8 685.8L794.8 680.2L794.8 677.8L790.8 674.2L790.8 671.8L784.8 666.2L784.8 663.8L780.8 660.2L780.8 657.8L774.8 652.2L774.8 649.8L770.8 646.2L770.8 643.8L764.8 638.2L764.8 635.8L760.8 632.2L760.8 629.8L754.8 624.2L754.8 621.8L750.8 618.2L750.8 615.8L744.8 610.2L744.8 607.8L740.8 604.2L740.8 601.8L734.8 596.2L734.8 593.8L730.8 590.2L730.8 587.8L724.8 582.2L724.8 579.8L720.8 576.2L720.8 573.8L714.8 568.2L714.8 565.8L710.8 562.2L710.8 559.8L704.8 554.2L704.8 551.8L700.8 548.2L700.8 545.8L694.8 540.2L694.8 537.8L690.8 534.2L690.8 531.8L684.8 526.2L684.8 523.8L680.8 520.2L680.8 517.8L674.8 512.2L674.8 509.8L664.8 500.2L664.8 497.8L637.8 471.8L633.2 471.8L623.2 462.2L618.2 458.8L611.8 458.2L606.2 462.2L599.2 469.8L594.2 473.8L592.8 472.8L591.8 473.8L590.2 473.8ZM449.8 322.2L447.2 316.2L444.8 312.8L437.8 308.2L424.8 307.8L413.2 309.2L379.8 308.2L372.8 311.2L368.2 316.2L366.2 322.2L366.2 335.2L370.2 343.2L372.2 345.2L377.8 347.8L389.2 348.2L409.2 346.8L426.2 348.8L435.2 348.8L441.2 346.8L445.2 343.8L447.2 340.8L449.8 335.2L450.2 331.8ZM185.8 314.8L185.2 318.8L186.2 322.8L192.2 329.8L202.2 335.8L203.8 335.8L206.8 337.8L220.8 341.8L244.8 343.8L254.8 345.8L266.2 345.2L269.8 343.8L273.8 339.8L274.8 335.8L274.8 326.2L273.8 318.2L270.8 314.2L263.8 310.8L236.8 310.2L226.2 307.8L223.2 306.2L210.8 302.8L201.2 302.2L196.2 303.8L191.2 306.8L188.8 309.2ZM578.2 323.8L578.2 333.2L582.2 341.2L587.2 345.8L591.2 347.8L595.8 348.8L625.2 349.8L650.2 355.2L661.2 355.2L685.8 349.8L694.8 346.8L706.2 346.8L711.8 345.8L712.8 347.2L721.8 347.2L724.2 349.2L731.8 348.8L734.2 351.2L743.8 350.8L746.2 353.2L755.8 352.8L758.2 355.2L767.8 354.8L770.2 357.2L779.8 356.8L782.2 359.2L791.8 358.8L794.2 361.2L803.8 360.8L806.2 363.2L815.8 362.8L818.2 365.2L827.8 364.8L830.2 367.2L839.8 366.8L842.2 369.2L851.8 368.8L854.2 371.2L863.8 370.8L866.2 373.2L875.8 372.8L878.2 375.2L887.8 374.8L890.2 377.2L899.8 376.8L902.2 379.2L911.8 378.8L914.2 381.2L923.8 380.8L926.2 383.2L930.8 383.2L930.8 350.2L919.8 349.8L920.2 348.2L930.8 348.2L930.8 344.2L918.8 344.2L917.2 341.8L906.8 342.2L905.2 339.8L894.8 340.2L893.2 337.8L882.8 338.2L881.2 335.8L870.8 336.2L869.2 333.8L858.8 334.2L857.2 331.8L846.8 332.2L845.2 329.8L834.8 330.2L833.2 327.8L822.8 328.2L821.2 325.8L810.8 326.2L809.2 323.8L798.8 324.2L797.2 321.8L786.8 322.2L785.2 319.8L774.8 320.2L773.2 317.8L762.8 318.2L761.2 315.8L750.8 316.2L749.2 313.8L738.8 314.2L737.2 311.8L728.8 312.2L727.8 310.2L719.2 310.8L718.2 311.8L702.2 312.2L683.2 300.2L675.2 296.2L669.2 294.2L656.2 294.2L648.8 296.8L636.8 302.2L622.2 306.2L598.8 307.2L592.8 308.2L584.8 312.8L580.2 318.8ZM905.8 347.8L906.2 346.2L918.2 346.2L919.2 347.2L918.2 348.2ZM891.8 345.8L892.2 344.2L904.2 344.2L905.2 345.2L904.2 346.2ZM877.8 343.8L878.2 342.2L890.2 342.2L891.2 343.2L890.2 344.2ZM863.8 341.8L864.2 340.2L876.2 340.2L877.2 341.2L876.2 342.2ZM849.8 339.8L850.2 338.2L862.2 338.2L863.2 339.2L862.2 340.2ZM835.8 337.8L836.2 336.2L848.2 336.2L849.2 337.2L848.2 338.2ZM821.8 335.8L822.2 334.2L834.2 334.2L835.2 335.2L834.2 336.2ZM807.8 333.8L808.2 332.2L820.2 332.2L821.2 333.2L820.2 334.2ZM793.8 331.8L794.2 330.2L806.2 330.2L807.2 331.2L806.2 332.2ZM779.8 329.8L780.2 328.2L792.2 328.2L793.2 329.2L792.2 330.2ZM765.8 327.8L766.2 326.2L778.2 326.2L779.2 327.2L778.2 328.2ZM751.8 325.8L752.2 324.2L764.2 324.2L765.2 325.2L764.2 326.2ZM737.8 322.8L750.2 322.2L751.2 323.8L738.2 324.2ZM727.8 321.8L728.2 320.2L736.2 320.2L737.2 321.2L736.2 322.2ZM717.8 319.8L718.2 318.2L726.2 318.2L727.2 319.2L726.2 320.2ZM711.8 317.8L712.2 316.2L716.2 316.2L717.2 317.2L716.2 318.2ZM705.8 315.8L706.2 314.2L709.8 314.2L711.2 315.2L709.8 316.2ZM703.8 313.2L704.8 312.8L705.2 313.8L704.2 314.2ZM2.8 -0.8L7.2 4.2L7.2 6.2L13.2 12.2L13.2 14.2L17.2 18.2L17.2 20.2L23.2 26.2L23.2 28.2L27.2 32.2L27.2 34.2L33.2 40.2L33.2 42.2L37.2 46.2L37.2 48.2L43.2 54.2L43.2 56.2L47.2 60.2L47.2 62.2L53.2 68.2L53.2 70.2L57.2 74.2L57.2 76.2L63.2 82.2L63.2 84.2L67.2 88.2L67.2 90.2L73.2 96.2L73.2 98.2L77.2 102.2L77.2 104.2L83.2 110.2L83.2 112.2L87.2 116.2L87.2 118.2L93.2 124.2L93.2 126.2L97.2 130.2L97.2 132.2L103.2 138.2L103.2 140.2L107.2 144.2L107.2 146.2L142.8 182.2L142.8 183.8L144.2 184.8L142.2 185.8L142.2 187.8L148.2 194.2L161.2 203.2L171.2 207.2L175.8 206.8L180.8 203.2L189.2 191.2L192.8 184.2L218.8 158.2L218.8 156.2L228.8 146.2L228.8 144.2L232.8 140.2L232.8 138.2L236.8 134.2L236.8 132.2L238.8 130.2L238.8 128.2L242.8 124.2L242.8 122.2L244.8 120.2L244.8 118.2L246.8 116.2L246.8 114.2L248.8 112.2L248.8 110.2L250.8 108.2L250.8 106.2L252.8 104.2L252.8 102.2L255.2 99.2L254.8 96.2L256.8 94.2L256.8 92.2L259.2 89.8L258.8 88.2L261.2 85.8L260.8 82.2L263.2 79.8L262.8 78.2L265.2 75.8L264.8 72.2L266.8 70.8L266.8 68.2L269.2 65.8L268.8 62.2L271.2 59.8L270.8 56.2L273.2 53.8L272.8 50.2L275.2 47.8L274.8 44.2L276.8 42.8L276.8 40.2L279.2 37.8L278.8 32.2L281.2 29.8L280.8 26.2L283.2 23.8L282.8 20.2L285.2 17.8L284.8 14.2L287.2 11.8L286.8 8.2L289.2 5.8L288.8 -0.8Z"/>
<path fill="#00a000" fill-rule="evenodd" d="M272.8 488.8L256.8 488.8L254.8 487.8L243.8 497.8L231.8 510.2L231.8 512.8L227.8 516.2L227.8 518.8L223.8 522.2L223.8 524.8L221.8 526.2L221.8 528.8L217.8 532.2L217.8 534.8L215.8 536.2L215.8 538.8L213.8 540.2L213.8 542.8L211.8 544.2L211.8 546.8L209.8 548.2L209.8 550.8L207.8 552.2L207.8 554.8L205.8 556.2L205.8 560.8L203.8 562.2L203.8 564.8L201.8 566.2L201.8 568.8L199.8 570.2L199.8 574.8L197.8 576.2L197.8 578.8L195.8 580.2L195.8 584.8L193.8 586.2L193.8 588.8L191.8 590.2L191.8 594.8L189.8 596.2L189.8 600.8L187.8 602.2L187.8 606.8L185.8 608.2L185.8 612.8L183.8 614.2L183.8 618.8L181.8 620.2L181.8 624.8L179.8 626.2L179.8 630.8L177.8 632.2L177.8 636.8L175.8 638.2L175.8 642.8L173.8 644.2L173.8 648.8L171.8 650.2L171.8 656.8L169.8 658.2L169.8 662.8L167.8 664.2L167.8 670.8L165.8 672.2L165.8 676.8L163.8 678.2L163.8 684.8L161.8 686.2L161.8 692.8L159.8 694.2L159.8 698.8L157.8 700.8L283.2 700.8L283.8 498.8ZM256.2 486.2L256.8 487.2L257.2 486.8ZM553.2 510.2L553.8 511.8L549.2 516.2L549.8 517.8L545.2 522.2L545.8 523.8L543.2 526.2L543.8 527.8L539.2 532.2L539.8 533.8L537.2 536.2L537.8 537.8L535.2 540.2L535.8 541.8L533.2 544.2L533.8 545.8L531.2 548.2L531.8 549.8L529.2 552.2L529.8 553.8L527.2 556.2L527.8 559.8L525.2 562.2L525.2 700.8L810.8 700.8L804.8 694.2L804.8 692.2L800.8 688.2L800.8 686.2L794.8 680.2L794.8 678.2L790.8 674.2L790.8 672.2L784.8 666.2L784.8 664.2L780.8 660.2L780.8 658.2L774.8 652.2L774.8 650.2L770.8 646.2L770.8 644.2L764.8 638.2L764.8 636.2L760.8 632.2L760.8 630.2L754.8 624.2L754.8 622.2L750.8 618.2L750.8 616.2L744.8 610.2L744.8 608.2L740.8 604.2L740.8 602.2L734.8 596.2L734.8 594.2L730.8 590.2L730.8 588.2L724.8 582.2L724.8 580.2L720.8 576.2L720.8 574.2L714.8 568.2L714.8 566.2L710.8 562.2L710.8 560.2L704.8 554.2L704.8 552.2L700.8 548.2L700.8 546.2L694.8 540.2L694.8 538.2L690.8 534.2L690.8 532.2L684.8 526.2L684.8 524.2L680.8 520.2L680.8 518.2L674.8 512.2L674.8 510.2L664.8 500.2L664.8 498.2L645.8 479.8L642.2 477.8L641.8 476.2L640.8 476.2L640.2 477.8L633.2 477.8L620.2 472.2L614.2 471.8L608.2 472.8L594.2 479.2L588.2 479.2L586.2 478.2ZM709.8 318.8L709.2 318.2L708.8 319.2ZM593.2 327.2L594.8 333.2L600.8 337.8L608.2 339.8L612.2 339.8L620.8 341.8L623.8 341.8L633.8 344.2L635.2 345.2L641.2 346.2L642.8 347.2L653.2 348.8L668.2 347.8L676.8 345.8L689.2 341.8L698.2 337.2L733.8 337.8L733.8 339.8L722.8 339.2L702.2 340.2L701.8 341.8L707.2 341.8L707.8 343.8L713.2 343.8L713.8 345.8L723.2 345.8L724.2 347.8L733.2 347.8L734.8 350.2L745.2 349.8L746.8 352.2L757.2 351.8L758.8 354.2L769.2 353.8L770.8 356.2L781.2 355.8L782.8 358.2L793.2 357.8L794.8 360.2L805.2 359.8L806.8 362.2L817.2 361.8L818.8 364.2L829.2 363.8L830.8 366.2L841.2 365.8L842.8 368.2L853.2 367.8L854.8 370.2L865.2 369.8L866.8 372.2L877.2 371.8L878.8 374.2L889.2 373.8L890.8 376.2L901.2 375.8L902.8 378.2L913.2 377.8L914.8 380.2L925.2 379.8L926.8 382.2L930.8 381.8L930.8 373.8L927.2 373.8L926.2 372.8L927.2 371.8L930.8 371.8L930.8 351.8L919.8 351.8L918.2 349.8L905.8 349.8L904.2 347.8L891.8 347.8L890.2 345.8L877.8 345.8L876.2 343.8L863.8 343.8L862.2 341.8L849.8 341.8L848.2 339.8L835.8 339.8L834.2 337.8L821.8 337.8L820.2 335.8L807.8 335.8L806.2 333.8L793.8 333.8L792.2 331.8L779.8 331.8L778.2 329.8L765.8 329.8L764.2 327.8L751.8 327.8L750.2 325.8L737.8 325.8L735.8 323.8L727.2 323.8L725.8 321.8L718.2 322.2L716.8 321.8L715.8 320.2L700.2 320.8L695.8 316.2L685.2 308.8L673.2 302.8L667.2 301.2L661.2 300.8L650.8 302.8L626.8 312.2L609.2 316.2L606.2 316.2L600.2 318.2L594.8 322.8ZM925.8 379.2L926.8 378.2L927.8 379.2L926.8 380.2ZM913.8 377.2L914.8 376.2L915.8 377.2L914.8 378.2ZM901.8 375.2L902.8 374.2L903.8 375.2L902.8 376.2ZM889.8 373.2L890.8 372.2L891.8 373.2L890.8 374.2ZM877.8 371.2L878.8 370.2L879.8 371.2L878.8 372.2ZM914.2 370.8L915.2 369.8L926.2 370.2L925.8 371.8L915.2 371.8ZM865.8 369.2L866.8 368.2L867.8 369.2L866.8 370.2ZM902.2 368.8L903.2 367.8L914.2 368.2L913.8 369.8L903.2 369.8ZM853.8 367.2L854.8 366.2L855.8 367.2L854.8 368.2ZM890.2 366.8L891.2 365.8L902.2 366.2L901.8 367.8L891.2 367.8ZM841.8 365.2L842.8 364.2L843.8 365.2L842.8 366.2ZM878.2 364.8L879.2 363.8L890.2 364.2L889.8 365.8L879.2 365.8ZM829.8 363.2L830.8 362.2L831.8 363.2L830.8 364.2ZM866.2 362.8L867.2 361.8L878.2 362.2L877.8 363.8L867.2 363.8ZM817.8 361.2L818.8 360.2L819.8 361.2L818.8 362.2ZM854.2 360.8L855.2 359.8L866.2 360.2L865.8 361.8L855.2 361.8ZM805.8 359.2L806.8 358.2L807.8 359.2L806.8 360.2ZM842.2 358.8L843.2 357.8L854.2 358.2L853.8 359.8L843.2 359.8ZM793.8 357.2L794.8 356.2L795.8 357.2L794.8 358.2ZM830.2 356.8L831.2 355.8L842.2 356.2L841.8 357.8L831.2 357.8ZM781.8 355.2L782.8 354.2L783.8 355.2L782.8 356.2ZM818.2 354.8L819.2 353.8L830.2 354.2L829.8 355.8L819.2 355.8ZM769.8 353.2L770.8 352.2L771.8 353.2L770.8 354.2ZM806.2 352.8L807.2 351.8L818.2 352.2L817.8 353.8L807.2 353.8ZM757.8 351.2L758.8 350.2L759.8 351.2L758.8 352.2ZM794.2 350.8L795.2 349.8L806.2 350.2L805.8 351.8L795.2 351.8ZM745.8 349.2L746.8 348.2L747.8 349.2L746.8 350.2ZM782.2 348.8L783.2 347.8L794.2 348.2L793.8 349.8L783.2 349.8ZM733.8 347.2L734.8 346.2L735.8 347.2L734.8 348.2ZM770.2 346.8L771.2 345.8L782.2 346.2L781.8 347.8L771.2 347.8ZM758.2 344.8L759.2 343.8L770.2 344.2L769.8 345.8L759.2 345.8ZM746.2 342.8L747.2 341.8L758.2 342.2L757.8 343.8L747.2 343.8ZM707.8 340.8L708.8 340.2L709.8 341.2L708.8 342.2ZM734.2 340.8L735.2 339.8L746.2 340.2L745.8 341.8L735.2 341.8ZM3.2 -0.8L3.2 0.2L7.2 3.8L7.2 6.2L13.2 11.8L13.2 14.2L17.2 17.8L17.2 20.2L23.2 25.8L23.2 28.2L27.2 31.8L27.2 34.2L33.2 39.8L33.2 42.2L37.2 45.8L37.2 48.2L43.2 53.8L43.2 56.2L47.2 59.8L47.2 62.2L53.2 67.8L53.2 70.2L57.2 73.8L57.2 76.2L63.2 81.8L63.2 84.2L67.2 87.8L67.2 90.2L73.2 95.8L73.2 98.2L77.2 101.8L77.2 104.2L83.2 109.8L83.2 112.2L87.2 115.8L87.2 118.2L93.2 123.8L93.2 126.2L97.2 129.8L97.2 132.2L103.2 137.8L103.2 140.2L107.2 143.8L107.2 146.2L147.8 186.2L148.2 187.8L158.2 193.2L165.2 195.2L171.8 195.2L176.2 193.8L179.8 191.8L187.2 185.2L189.8 185.8L193.8 182.8L218.8 158.2L218.8 155.8L228.8 146.2L228.8 143.8L232.8 140.2L232.8 137.8L236.8 134.2L236.8 131.8L238.8 130.2L238.8 127.8L242.8 124.2L242.8 121.8L244.8 120.2L244.8 117.8L246.8 116.2L246.8 113.8L248.8 112.2L248.8 109.8L250.8 108.2L250.8 105.8L252.8 104.2L252.8 101.8L254.8 100.2L254.8 95.8L256.8 94.2L256.8 91.8L258.8 90.2L258.8 87.8L260.8 86.2L260.8 81.8L262.8 80.2L262.8 77.8L264.8 76.2L264.8 71.8L266.8 70.2L266.8 67.8L268.8 66.2L268.8 61.8L270.8 60.2L270.8 55.8L272.8 54.2L272.8 49.8L274.8 48.2L274.8 43.8L276.8 42.2L276.8 39.8L278.8 38.2L278.8 31.8L280.8 30.2L280.8 25.8L282.8 24.2L282.8 19.8L284.8 18.2L284.8 13.8L286.8 12.2L286.8 7.8L288.8 6.2L288.8 -0.8Z"/>
<path fill="#008800" fill-rule="evenodd" d="M271.8 496.2L248.2 496.8L246.8 495.8L233.8 508.2L233.2 509.8L232.2 509.8L232.2 513.2L230.2 513.8L229.8 515.2L228.2 515.8L228.2 519.2L226.2 519.8L225.8 521.2L223.8 522.8L224.2 525.2L221.8 526.8L222.2 529.2L220.2 529.8L219.8 531.2L217.8 532.8L218.2 535.2L215.8 536.8L216.2 539.2L213.8 540.8L214.2 543.2L211.8 544.8L212.2 547.2L209.8 548.8L210.2 551.2L207.8 552.8L208.2 555.2L205.8 556.8L206.2 561.2L203.8 562.8L204.2 565.2L201.8 566.8L202.2 569.2L199.8 570.8L200.2 575.2L197.8 576.8L198.2 579.2L195.8 580.8L196.2 585.2L193.8 586.8L194.2 589.2L191.8 590.8L192.2 595.2L189.8 596.8L190.2 601.2L187.8 602.8L188.2 607.2L185.8 608.8L186.2 613.2L183.8 614.8L184.2 619.2L181.8 620.8L182.2 625.2L179.8 626.8L180.2 631.2L177.8 632.8L178.2 637.2L175.8 638.8L176.2 643.2L173.8 644.8L174.2 649.2L171.8 650.8L172.2 657.2L169.8 658.8L170.2 663.2L167.8 664.8L168.2 671.2L165.8 672.8L166.2 677.2L163.8 678.8L164.2 685.2L161.8 686.8L162.2 693.2L159.8 694.8L160.2 699.2L157.8 700.8L273.8 700.8L273.8 498.2ZM248.2 494.2L248.2 495.2L249.2 495.2L249.2 494.2ZM582.2 482.2L582.2 483.2L583.2 483.2L583.2 482.2ZM553.8 509.8L553.8 512.2L549.8 515.8L549.8 518.2L545.8 521.8L545.8 524.2L543.8 525.8L543.8 528.2L539.8 531.8L539.8 534.2L537.8 535.8L537.8 538.2L535.8 539.8L535.8 542.2L533.8 543.8L533.8 546.2L531.8 547.8L531.8 550.2L529.8 551.8L529.8 554.2L527.8 555.8L527.8 560.2L525.8 561.8L525.2 700.8L810.8 700.8L804.2 694.2L804.2 691.8L800.2 688.2L800.2 685.8L794.2 680.2L794.2 677.8L790.2 674.2L790.2 671.8L784.2 666.2L784.2 663.8L780.2 660.2L780.2 657.8L774.2 652.2L774.2 649.8L770.2 646.2L770.2 643.8L764.2 638.2L764.2 635.8L760.2 632.2L760.2 629.8L754.2 624.2L754.2 621.8L750.2 618.2L750.2 615.8L744.2 610.2L744.2 607.8L740.2 604.2L740.2 601.8L734.2 596.2L734.2 593.8L730.2 590.2L730.2 587.8L724.2 582.2L724.2 579.8L720.2 576.2L720.2 573.8L714.2 568.2L714.2 565.8L710.2 562.2L710.2 559.8L704.2 554.2L704.2 551.8L700.2 548.2L700.2 545.8L694.2 540.2L694.2 537.8L690.2 534.2L690.2 531.8L684.2 526.2L684.2 523.8L680.2 520.2L680.2 517.8L674.2 512.2L674.2 509.8L664.2 500.2L664.2 497.8L647.2 481.8L645.8 483.2L634.2 482.8L621.2 479.2L612.2 478.8L604.2 480.2L599.8 482.2L591.8 484.2L582.8 484.8L580.8 483.8ZM635.8 323.8L636.2 327.8L643.8 335.2L648.8 337.8L658.2 339.8L666.2 339.2L678.2 335.8L683.2 332.8L686.8 327.8L686.2 323.2L681.2 316.8L674.2 312.2L669.2 310.2L665.8 309.8L654.2 310.2L648.8 312.2L638.8 318.2L636.8 320.8ZM3.2 -0.8L3.2 0.2L7.2 3.8L7.2 6.2L13.2 11.8L13.2 14.2L17.2 17.8L17.2 20.2L23.2 25.8L23.2 28.2L27.2 31.8L27.2 34.2L33.2 39.8L33.2 42.2L37.2 45.8L37.2 48.2L43.2 53.8L43.2 56.2L47.2 59.8L47.2 62.2L53.2 67.8L53.2 70.2L57.2 73.8L57.2 76.2L63.2 81.8L63.2 84.2L67.2 87.8L67.2 90.2L73.2 95.8L73.2 98.2L77.2 101.8L77.2 104.2L83.2 109.8L83.2 112.2L87.2 115.8L87.2 118.2L93.2 123.8L93.2 126.2L97.2 129.8L97.2 132.2L103.2 137.8L103.2 140.2L107.2 143.8L107.2 146.2L144.2 182.2L145.8 182.2L146.2 183.2L148.2 182.2L154.8 185.2L164.2 187.8L169.2 187.8L176.8 185.8L187.8 179.8L192.8 179.8L193.2 181.8L194.2 179.8L195.2 180.2L202.2 174.2L218.8 157.8L218.8 155.8L228.8 145.8L228.8 143.8L232.8 139.8L232.8 137.8L236.8 133.8L236.8 131.8L238.8 129.8L238.8 127.8L242.8 123.8L242.8 121.8L244.8 119.8L244.8 117.8L246.8 115.8L246.8 113.8L248.8 111.8L248.8 109.8L250.8 107.8L250.8 105.8L252.8 103.8L252.8 101.8L254.8 99.8L254.8 95.8L256.8 93.8L256.8 91.8L258.8 90.2L258.8 87.8L260.8 86.2L260.8 81.8L262.8 80.2L262.8 77.8L264.8 76.2L264.8 71.8L266.8 70.2L266.8 67.8L268.8 66.2L268.8 61.8L270.8 60.2L270.8 55.8L272.8 54.2L272.8 49.8L274.8 48.2L274.8 43.8L276.8 42.2L276.8 39.8L278.8 38.2L278.8 31.8L280.8 30.2L280.8 25.8L282.8 24.2L282.8 19.8L284.8 18.2L284.8 13.8L286.8 12.2L286.8 7.8L288.8 6.2L288.8 -0.8Z"/>
<path fill="#006a00" fill-rule="evenodd" d="M194.2 586.2L194.8 587.8L195.2 586.8ZM198.2 576.2L198.8 577.8L199.2 576.8ZM202.2 566.2L202.8 567.8L203.2 566.8ZM204.2 562.2L204.8 563.8L205.2 562.8ZM208.2 552.2L208.8 553.8L209.2 552.8ZM210.2 548.2L210.8 549.8L211.2 548.8ZM212.2 544.2L212.8 545.8L213.2 544.8ZM214.2 540.2L214.8 541.8L215.2 540.8ZM216.2 536.2L216.8 537.8L217.2 536.8ZM218.2 532.2L218.8 533.8L219.2 532.8ZM222.2 526.2L222.8 527.8L223.2 526.8ZM224.2 522.2L224.8 523.8L225.2 522.8ZM578.2 486.2L578.8 487.2L579.2 486.8ZM553.8 510.2L553.8 512.8L549.8 516.2L549.8 518.8L545.8 522.2L545.8 524.8L543.8 526.2L543.8 528.8L539.8 532.2L539.8 534.8L537.8 536.2L537.8 538.8L535.8 540.2L535.8 542.8L533.8 544.2L533.8 546.8L531.8 548.2L531.8 550.8L529.8 552.2L529.8 554.8L527.8 556.2L527.8 560.8L525.8 562.2L525.8 700.8L810.2 700.8L804.2 694.8L804.2 692.2L800.2 688.8L800.2 686.2L794.2 680.8L794.2 678.2L790.2 674.8L790.2 672.2L784.2 666.8L784.2 664.2L780.2 660.8L780.2 658.2L774.2 652.8L774.2 650.2L770.2 646.8L770.2 644.2L764.2 638.8L764.2 636.2L760.2 632.8L760.2 630.2L754.2 624.8L754.2 622.2L750.2 618.8L750.2 616.2L744.2 610.8L744.2 608.2L740.2 604.8L740.2 602.2L734.2 596.8L734.2 594.2L730.2 590.8L730.2 588.2L724.2 582.8L724.2 580.2L720.2 576.8L720.2 574.2L714.2 568.8L714.2 566.2L710.2 562.8L710.2 560.2L704.2 554.8L704.2 552.2L700.2 548.8L700.2 546.2L694.2 540.8L694.2 538.2L690.2 534.8L690.2 532.2L684.2 526.8L684.2 524.2L680.2 520.8L680.2 518.2L674.2 512.8L674.2 510.2L664.2 500.8L664.2 498.2L651.8 486.2L650.8 486.2L650.2 488.2L633.2 486.8L620.2 483.8L610.8 483.8L598.2 486.2L593.8 488.2L588.2 488.2L578.2 489.8L576.8 487.8ZM3.2 -0.8L7.8 4.2L7.2 5.8L13.8 12.2L13.2 13.8L17.8 18.2L17.2 19.8L23.8 26.2L23.2 27.8L27.8 32.2L27.2 33.8L33.8 40.2L33.2 41.8L37.8 46.2L37.2 47.8L43.8 54.2L43.2 55.8L47.8 60.2L47.2 61.8L53.8 68.2L53.2 69.8L57.8 74.2L57.2 75.8L63.8 82.2L63.2 83.8L67.8 88.2L67.2 89.8L73.8 96.2L73.2 97.8L77.8 102.2L77.2 103.8L83.8 110.2L83.2 111.8L87.8 116.2L87.2 117.8L93.8 124.2L93.2 125.8L97.8 130.2L97.2 131.8L103.8 138.2L103.2 139.8L107.8 144.2L107.2 145.8L133.8 172.2L140.8 178.2L141.8 177.8L142.2 179.8L143.2 177.8L148.8 177.8L160.2 181.2L171.2 181.2L178.2 179.2L187.8 175.2L197.8 175.2L199.2 176.2L218.8 157.8L218.8 155.2L228.8 145.8L228.8 143.2L232.8 139.8L232.8 137.2L236.8 133.8L236.2 132.2L238.8 129.8L238.8 127.2L242.8 123.8L242.2 122.2L244.8 119.8L244.2 118.2L246.8 115.8L246.2 114.2L248.8 111.8L248.2 110.2L250.8 107.8L250.2 106.2L252.8 103.8L252.8 101.2L254.8 99.8L254.2 96.2L256.8 93.8L256.2 92.2L258.8 89.8L258.8 87.2L260.8 85.8L260.2 82.2L262.8 79.8L262.8 77.2L264.8 75.8L264.2 72.2L266.8 69.8L266.8 67.2L268.8 65.8L268.2 62.2L270.8 59.8L270.2 56.2L272.8 53.8L272.2 50.2L274.8 47.8L274.2 44.2L276.8 41.8L276.8 39.2L278.8 37.8L278.2 32.2L280.8 29.8L280.2 26.2L282.8 23.8L282.2 20.2L284.8 17.8L284.2 14.2L286.8 11.8L286.8 7.2L288.8 5.8L288.2 -0.8Z"/>
<path fill="#000070" fill-rule="evenodd" d="M572.2 492.2L572.2 493.2L573.2 493.2L573.2 492.2ZM654.8 490.2L655.8 491.2L655.8 490.2ZM553.8 510.2L554.2 512.8L549.8 516.2L550.2 518.8L545.8 522.2L546.2 524.8L543.8 526.2L544.2 528.8L539.8 532.2L540.2 534.8L537.8 536.2L538.2 538.8L535.8 540.2L536.2 542.8L533.8 544.2L534.2 546.8L531.8 548.2L532.2 550.8L529.8 552.2L530.2 554.8L527.8 556.2L528.2 560.8L525.8 562.2L526.2 700.8L810.2 700.8L805.8 695.8L804.2 695.2L804.2 692.2L799.8 688.2L800.2 686.2L795.8 681.8L794.2 681.2L794.2 678.2L789.8 674.2L790.2 672.2L785.8 667.8L784.2 667.2L784.2 664.2L779.8 660.2L780.2 658.2L775.8 653.8L774.2 653.2L774.2 650.2L769.8 646.2L770.2 644.2L765.8 639.8L764.2 639.2L764.2 636.2L759.8 632.2L760.2 630.2L755.8 625.8L754.2 625.2L754.2 622.2L749.8 618.2L750.2 616.2L745.8 611.8L744.2 611.2L744.2 608.2L739.8 604.2L740.2 602.2L735.8 597.8L734.2 597.2L734.2 594.2L729.8 590.2L730.2 588.2L725.8 583.8L724.2 583.2L724.2 580.2L719.8 576.2L720.2 574.2L715.8 569.8L714.2 569.2L714.2 566.2L709.8 562.2L710.2 560.2L705.8 555.8L704.2 555.2L704.2 552.2L699.8 548.2L700.2 546.2L695.8 541.8L694.2 541.2L694.2 538.2L689.8 534.2L690.2 532.2L685.8 527.8L684.2 527.2L684.2 524.2L679.8 520.2L680.2 518.2L675.8 513.8L674.2 513.2L674.2 510.2L663.8 500.2L664.2 498.2L657.2 491.8L655.8 493.8L638.2 491.8L622.2 487.8L612.8 487.2L605.2 488.2L593.8 492.2L583.2 494.2L572.2 495.2L570.8 493.8ZM138.2 174.8L138.8 175.8L139.2 175.2ZM201.2 172.8L200.8 173.2L201.8 173.8ZM3.2 -0.8L7.8 3.8L7.8 6.2L13.8 11.8L13.8 14.2L17.8 17.8L17.8 20.2L23.8 25.8L23.8 28.2L27.8 31.8L27.8 34.2L33.8 39.8L33.8 42.2L37.8 45.8L37.8 48.2L43.8 53.8L43.8 56.2L47.8 59.8L47.8 62.2L53.8 67.8L53.8 70.2L57.8 73.8L57.8 76.2L63.8 81.8L63.8 84.2L67.8 87.8L67.8 90.2L73.8 95.8L73.8 98.2L77.8 101.8L77.8 104.2L83.8 109.8L83.8 112.2L87.8 115.8L87.8 118.2L93.8 123.8L93.8 126.2L97.8 129.8L97.8 132.2L103.8 137.8L103.8 140.2L107.8 143.8L107.8 146.2L136.8 174.2L138.8 173.2L150.2 173.8L158.2 175.8L171.8 175.8L188.2 170.8L201.8 170.8L203.2 172.2L218.2 158.2L218.2 155.8L228.2 146.2L228.2 143.8L232.2 140.2L232.2 137.8L236.2 134.2L236.2 131.8L238.2 130.2L238.2 127.8L242.2 124.2L242.2 121.8L244.2 120.2L244.2 117.8L246.2 116.2L246.2 113.8L248.2 112.2L248.2 109.8L250.2 108.2L250.2 105.8L252.2 104.2L252.2 101.8L254.2 100.2L254.2 95.8L256.2 94.2L256.2 91.8L258.2 90.2L258.2 87.8L260.2 86.2L260.2 81.8L262.2 80.2L262.2 77.8L264.2 76.2L264.2 71.8L266.2 70.2L266.2 67.8L268.2 66.2L268.2 61.8L270.2 60.2L270.2 55.8L272.2 54.2L272.2 49.8L274.2 48.2L274.2 43.8L276.2 42.2L276.2 39.8L278.2 38.2L278.2 31.8L280.2 30.2L280.2 25.8L282.2 24.2L282.2 19.8L284.2 18.2L284.2 13.8L286.2 12.2L286.2 7.8L288.2 6.2L288.2 -0.8Z"/>
<path fill="#00008c" fill-rule="evenodd" d="M804.8 695.8L804.8 697.2L806.2 697.2L806.8 699.2L808.2 699.2L808.8 700.8L809.8 700.8ZM800.8 689.8L800.8 691.2L802.8 691.8L802.8 695.2L803.8 695.2L803.8 692.2ZM794.8 681.8L794.8 683.2L796.2 683.2L796.8 685.2L798.8 685.8L798.8 689.2L799.8 689.2L799.8 686.2ZM790.8 675.8L790.8 677.2L792.8 677.8L792.8 681.2L793.8 681.2L793.8 678.2ZM784.8 667.8L784.8 669.2L786.2 669.2L786.8 671.2L788.8 671.8L788.8 675.2L789.8 675.2L789.8 672.2ZM780.8 661.8L780.8 663.2L782.8 663.8L782.8 667.2L783.8 667.2L783.8 664.2ZM774.8 653.8L774.8 655.2L776.2 655.2L776.8 657.2L778.8 657.8L778.8 661.2L779.8 661.2L779.8 658.2ZM770.8 647.8L770.8 649.2L772.8 649.8L772.8 653.2L773.8 653.2L773.8 650.2ZM764.8 639.8L764.8 641.2L766.2 641.2L766.8 643.2L768.8 643.8L768.8 647.2L769.8 647.2L769.8 644.2ZM760.8 633.8L760.8 635.2L762.8 635.8L762.8 639.2L763.8 639.2L763.8 636.2ZM754.8 625.8L754.8 627.2L756.2 627.2L756.8 629.2L758.8 629.8L758.8 633.2L759.8 633.2L759.8 630.2ZM750.8 619.8L750.8 621.2L752.8 621.8L752.8 625.2L753.8 625.2L753.8 622.2ZM744.8 611.8L744.8 613.2L746.2 613.2L746.8 615.2L748.8 615.8L748.8 619.2L749.8 619.2L749.8 616.2ZM740.8 605.8L740.8 607.2L742.8 607.8L742.8 611.2L743.8 611.2L743.8 608.2ZM734.8 597.8L734.8 599.2L736.2 599.2L736.8 601.2L738.8 601.8L738.8 605.2L739.8 605.2L739.8 602.2ZM730.8 591.8L730.8 593.2L732.8 593.8L732.8 597.2L733.8 597.2L733.8 594.2ZM724.8 583.8L724.8 585.2L726.2 585.2L726.8 587.2L728.8 587.8L728.8 591.2L729.8 591.2L729.8 588.2ZM720.8 577.8L720.8 579.2L722.8 579.8L722.8 583.2L723.8 583.2L723.8 580.2ZM714.8 569.8L714.8 571.2L716.2 571.2L716.8 573.2L718.8 573.8L718.8 577.2L719.8 577.2L719.8 574.2ZM710.8 563.8L710.8 565.2L712.8 565.8L712.8 569.2L713.8 569.2L713.8 566.2ZM527.2 562.2L526.2 562.2L526.8 700.8ZM529.2 556.2L528.2 556.2L528.8 560.8ZM704.8 555.8L704.8 557.2L706.2 557.2L706.8 559.2L708.8 559.8L708.8 563.2L709.8 563.2L709.8 560.2ZM531.2 552.2L530.2 552.2L530.8 554.8ZM700.8 549.8L700.8 551.2L702.8 551.8L702.8 555.2L703.8 555.2L703.8 552.2ZM533.2 548.2L532.2 548.2L532.8 550.8ZM535.2 544.2L534.2 544.2L534.8 546.8ZM694.8 541.8L694.8 543.2L696.2 543.2L696.8 545.2L698.8 545.8L698.8 549.2L699.8 549.2L699.8 546.2ZM537.2 540.2L536.2 540.2L536.8 542.8ZM539.2 536.2L538.2 536.2L538.8 538.8ZM690.8 535.8L690.8 537.2L692.8 537.8L692.8 541.2L693.8 541.2L693.8 538.2ZM541.2 532.2L540.2 532.2L540.8 534.8ZM543.2 530.2L542.2 530.2L542.2 531.2ZM684.8 527.8L684.8 529.2L686.2 529.2L686.8 531.2L688.8 531.8L688.8 535.2L689.8 535.2L689.8 532.2ZM545.2 526.2L544.2 526.2L544.8 528.8ZM547.2 522.2L546.2 522.2L546.8 524.8ZM680.8 521.8L680.8 523.2L682.8 523.8L682.8 527.2L683.8 527.2L683.8 524.2ZM549.2 520.2L548.2 520.2L548.2 521.2ZM551.2 516.2L550.2 516.2L550.8 518.8ZM553.2 514.2L552.2 514.2L552.2 515.2ZM674.8 513.8L674.8 515.2L676.2 515.2L676.8 517.2L678.8 517.8L678.8 521.2L679.8 521.2L679.8 518.2ZM555.2 510.2L554.2 510.2L554.8 512.8ZM557.2 508.2L556.2 508.2L556.2 509.2ZM559.2 506.2L558.2 506.2L558.2 507.2ZM561.2 504.2L560.2 504.2L560.2 505.2ZM563.2 502.2L562.2 502.2L562.2 503.2ZM664.8 501.8L664.8 503.2L666.2 503.2L666.8 505.2L668.2 505.2L668.8 507.2L670.2 507.2L670.8 509.2L672.8 509.8L672.8 513.2L673.8 513.2L673.8 510.2ZM564.2 500.2L564.2 501.2L565.2 501.2L565.2 500.2ZM566.2 498.2L566.2 499.2L567.2 499.2L567.2 498.2ZM662.8 497.8L662.8 501.2L663.8 501.2L663.8 498.2ZM660.8 496.2L660.8 497.2L661.8 497.2L661.8 496.2ZM569.2 496.2L568.2 496.2L568.2 497.2ZM659.2 494.2L658.8 494.8L659.8 495.2ZM612.2 490.8L602.8 492.8L589.8 498.8L592.8 499.8L604.2 510.8L606.2 513.8L607.2 517.8L607.2 700.8L625.8 700.8L626.2 516.2L627.8 512.2L634.2 505.2L639.8 503.8L645.2 499.8L648.2 498.8L635.8 496.2L626.2 492.2L617.8 490.8ZM134.2 170.8L134.2 171.8L135.2 171.8L135.2 170.8ZM205.8 168.8L204.8 169.8L205.8 169.8ZM3.8 -0.8L3.8 0.2L7.8 3.8L7.8 6.2L13.8 11.8L13.8 14.2L17.8 17.8L17.8 20.2L23.8 25.8L23.8 28.2L27.8 31.8L27.8 34.2L33.8 39.8L33.8 42.2L37.8 45.8L37.8 48.2L43.8 53.8L43.8 56.2L47.8 59.8L47.8 62.2L53.8 67.8L53.8 70.2L57.8 73.8L57.8 76.2L63.8 81.8L63.8 84.2L67.8 87.8L67.8 90.2L73.8 95.8L73.8 98.2L77.8 101.8L77.8 104.2L83.8 109.8L83.8 112.2L87.8 115.8L87.8 118.2L93.8 123.8L93.8 126.2L97.8 129.8L97.8 132.2L103.8 137.8L103.8 140.2L107.8 143.8L107.8 146.2L132.8 170.2L134.8 168.8L148.8 169.2L161.2 171.2L167.2 171.2L176.8 169.8L188.2 166.2L205.8 166.2L207.2 168.2L218.2 157.8L218.2 155.2L228.2 145.8L228.2 143.2L232.2 139.8L232.2 137.2L236.2 133.8L236.2 131.2L238.2 129.8L238.2 127.2L242.2 123.8L242.2 121.2L244.2 119.8L244.2 117.2L246.2 115.8L246.2 113.2L248.2 111.8L248.2 109.2L250.2 107.8L250.2 105.2L252.2 103.8L252.2 101.2L254.2 99.8L254.2 95.2L256.2 93.8L256.2 91.2L258.2 89.8L258.2 87.2L260.2 85.8L260.2 81.2L262.2 79.8L262.2 77.2L264.2 75.8L264.2 71.2L266.2 69.8L266.2 67.2L268.2 65.8L268.2 61.2L270.2 59.8L270.2 55.2L272.2 53.8L272.2 49.2L274.2 47.8L274.2 43.2L276.2 41.8L276.2 39.2L278.2 37.8L278.2 31.2L280.2 29.8L280.2 25.2L282.2 23.8L282.2 19.2L284.2 17.8L284.2 13.2L286.2 11.8L286.2 7.2L288.2 5.8L288.2 -0.8Z"/>
<path fill="#0000aa" fill-rule="evenodd" d="M604.2 498.8L610.8 501.2L616.8 501.8L621.8 500.8L626.2 498.2L624.2 496.8L620.2 495.8L612.2 495.2L606.2 496.8ZM130.2 166.8L130.2 167.8L131.2 167.8L131.2 166.8ZM209.8 164.8L208.8 165.8L209.8 165.8ZM3.8 -0.8L7.8 3.2L7.8 5.8L13.8 11.2L13.8 13.8L17.8 17.2L17.8 19.8L23.8 25.2L23.8 27.8L27.8 31.2L27.8 33.8L33.8 39.2L33.8 41.8L37.8 45.2L37.8 47.8L43.8 53.2L43.8 55.8L47.8 59.2L47.8 61.8L53.8 67.2L53.8 69.8L57.8 73.2L57.8 75.8L63.8 81.2L63.8 83.8L67.8 87.2L67.8 89.8L73.8 95.2L73.8 97.8L77.8 101.2L77.8 103.8L83.8 109.2L83.8 111.8L87.8 115.2L87.8 117.8L93.8 123.2L93.8 125.8L97.8 129.2L97.8 131.8L103.8 137.2L103.8 139.8L107.8 143.2L107.8 145.8L128.8 166.2L130.2 164.8L147.8 164.8L158.2 166.2L168.2 166.2L176.2 165.2L188.2 161.8L209.8 161.8L211.2 164.2L214.8 160.2L215.8 160.2L218.2 157.8L217.8 155.8L228.2 145.8L227.8 143.8L232.2 139.8L231.8 137.8L236.2 133.8L235.8 131.8L236.8 130.2L238.2 129.8L237.8 127.8L242.2 123.8L241.8 121.8L242.8 120.2L244.2 119.8L243.8 117.8L244.8 116.2L246.2 115.8L245.8 113.8L246.8 112.2L248.2 111.8L247.8 109.8L248.8 108.2L250.2 107.8L249.8 105.8L250.8 104.2L252.2 103.8L252.2 100.8L254.2 99.8L253.8 95.8L254.8 94.2L256.2 93.8L255.8 91.8L256.8 90.2L258.2 89.8L258.2 86.8L260.2 85.8L259.8 81.8L260.8 80.2L262.2 79.8L261.8 77.8L264.2 75.8L263.8 71.8L266.2 69.8L265.8 67.8L268.2 65.8L267.8 61.8L270.2 59.8L269.8 55.8L272.2 53.8L271.8 49.8L274.2 47.8L273.8 43.8L276.2 41.8L275.8 39.8L278.2 37.8L277.8 31.8L280.2 29.8L279.8 25.8L282.2 23.8L281.8 19.8L284.2 17.8L283.8 13.8L286.2 11.8L285.8 7.8L288.2 5.8L287.8 -0.8Z"/>
</g>
<path clip-path="url(#mainc)" d="M126.4 150V500M139.1 150V500M151.8 150V500M164.5 150V500M177.2 150V500M189.9 150V500M202.6 150V500M215.3 150V500M228.0 150V500M240.7 150V500M253.4 150V500M266.1 150V500M278.8 150V500M291.5 150V500M304.2 150V500M316.9 150V500M329.6 150V500M342.3 150V500M355.0 150V500M367.7 150V500M380.4 150V500M393.1 150V500M405.8 150V500M418.5 150V500M431.2 150V500M443.9 150V500M456.6 150V500M469.3 150V500M482.0 150V500M494.7 150V500M507.4 150V500M520.1 150V500M532.8 150V500M545.5 150V500M558.2 150V500M570.9 150V500M583.6 150V500M596.3 150V500M609.0 150V500M621.7 150V500M634.4 150V500M647.1 150V500M659.8 150V500M672.5 150V500M685.2 150V500M697.9 150V500M710.6 150V500M723.3 150V500M60 153.4H725M60 166.0H725M60 178.7H725M60 191.3H725M60 203.9H725M60 216.6H725M60 229.2H725M60 241.8H725M60 254.5H725M60 267.1H725M60 279.7H725M60 292.3H725M60 305.0H725M60 317.6H725M60 330.2H725M60 342.9H725M60 355.5H725M60 368.1H725M60 380.8H725M60 393.4H725M60 406.0H725M60 418.6H725M60 431.3H725M60 443.9H725M60 456.5H725M60 469.2H725M60 481.8H725M60 494.4H725" stroke="#e00000" stroke-width="0.9" stroke-dasharray="2.5 1.8" opacity="0.65"/>
<path d="M151 385.5H178.5V407.5H151ZM155.5 413H181.5V423H155.5ZM492 386H504V412H492ZM507 379.5H533V407H507Z" fill="#fff"/>
<path d="M130 328.3H700M323 289V367" stroke="#5a2020" stroke-width="0.8" opacity="0.85"/>
<path d="M168.5 162V188M158 176H182M433 162V188M592 162V188M293 472V498M283 488H305M433 472V498M614 472V498M604 488H626" stroke="#c02020" stroke-width="0.8" opacity="0.8"/>
<path d="M112.0 189.6L134.0 305.6M108.0 190.4L130.0 306.4M112.7 193.6L107.8 194.5M113.5 197.5L108.5 198.4M114.2 201.4L109.3 202.3M114.9 205.3L110.0 206.3M115.7 209.3L110.8 210.2M116.4 213.2L111.5 214.1M117.2 217.1L112.3 218.1M117.9 221.1L113.0 222.0M118.7 225.0L113.8 225.9M119.4 228.9L114.5 229.9M120.2 232.9L115.3 233.8M120.9 236.8L116.0 237.7M121.7 240.7L116.7 241.6M122.4 244.6L117.5 245.6M123.1 248.6L118.2 249.5M123.9 252.5L119.0 253.4M124.6 256.4L119.7 257.4M125.4 260.4L120.5 261.3M126.1 264.3L121.2 265.2M126.9 268.2L122.0 269.2M127.6 272.2L122.7 273.1M128.4 276.1L123.4 277.0M129.1 280.0L124.2 280.9M129.9 283.9L124.9 284.9M130.6 287.9L125.7 288.8M131.3 291.8L126.4 292.7M132.1 295.7L127.2 296.7M132.8 299.7L127.9 300.6M74.0 253.6L90.0 335.6M70.0 254.4L86.0 336.4M74.7 257.5L69.8 258.5M75.5 261.5L70.6 262.4M76.3 265.4L71.4 266.4M77.0 269.3L72.1 270.3M77.8 273.2L72.9 274.2M78.6 277.2L73.7 278.1M79.3 281.1L74.4 282.1M80.1 285.0L75.2 286.0M80.9 289.0L75.9 289.9M81.6 292.9L76.7 293.8M82.4 296.8L77.5 297.8M83.2 300.7L78.2 301.7M83.9 304.7L79.0 305.6M84.7 308.6L79.8 309.5M85.5 312.5L80.5 313.5M86.2 316.4L81.3 317.4M87.0 320.4L82.1 321.3M87.8 324.3L82.8 325.2M88.5 328.2L83.6 329.2M325.0 190.0L325.0 289.0M321.0 190.0L321.0 289.0M325.0 194.0L320.0 194.0M325.0 198.0L320.0 198.0M325.0 202.0L320.0 202.0M325.0 206.0L320.0 206.0M325.0 210.0L320.0 210.0M325.0 214.0L320.0 214.0M325.0 218.0L320.0 218.0M325.0 222.0L320.0 222.0M325.0 226.0L320.0 226.0M325.0 230.0L320.0 230.0M325.0 234.0L320.0 234.0M325.0 238.0L320.0 238.0M325.0 242.0L320.0 242.0M325.0 246.0L320.0 246.0M325.0 250.0L320.0 250.0M325.0 254.0L320.0 254.0M325.0 258.0L320.0 258.0M325.0 262.0L320.0 262.0M325.0 266.0L320.0 266.0M325.0 270.0L320.0 270.0M325.0 274.0L320.0 274.0M325.0 278.0L320.0 278.0M325.0 282.0L320.0 282.0M325.0 367.0L325.0 466.0M321.0 367.0L321.0 466.0M325.0 371.0L320.0 371.0M325.0 375.0L320.0 375.0M325.0 379.0L320.0 379.0M325.0 383.0L320.0 383.0M325.0 387.0L320.0 387.0M325.0 391.0L320.0 391.0M325.0 395.0L320.0 395.0M325.0 399.0L320.0 399.0M325.0 403.0L320.0 403.0M325.0 407.0L320.0 407.0M325.0 411.0L320.0 411.0M325.0 415.0L320.0 415.0M325.0 419.0L320.0 419.0M325.0 423.0L320.0 423.0M325.0 427.0L320.0 427.0M325.0 431.0L320.0 431.0M325.0 435.0L320.0 435.0M325.0 439.0L320.0 439.0M325.0 443.0L320.0 443.0M325.0 447.0L320.0 447.0M325.0 451.0L320.0 451.0M325.0 455.0L320.0 455.0M325.0 459.0L320.0 459.0M492.0 190.0L492.0 298.0M488.0 190.0L488.0 298.0M492.0 194.0L487.0 194.0M492.0 198.0L487.0 198.0M492.0 202.0L487.0 202.0M492.0 206.0L487.0 206.0M492.0 210.0L487.0 210.0M492.0 214.0L487.0 214.0M492.0 218.0L487.0 218.0M492.0 222.0L487.0 222.0M492.0 226.0L487.0 226.0M492.0 230.0L487.0 230.0M492.0 234.0L487.0 234.0M492.0 238.0L487.0 238.0M492.0 242.0L487.0 242.0M492.0 246.0L487.0 246.0M492.0 250.0L487.0 250.0M492.0 254.0L487.0 254.0M492.0 258.0L487.0 258.0M492.0 262.0L487.0 262.0M492.0 266.0L487.0 266.0M492.0 270.0L487.0 270.0M492.0 274.0L487.0 274.0M492.0 278.0L487.0 278.0M492.0 282.0L487.0 282.0M492.0 286.0L487.0 286.0M492.0 290.0L487.0 290.0M492.0 294.0L487.0 294.0M540.0 190.0L540.0 298.0M536.0 190.0L536.0 298.0M540.0 194.0L535.0 194.0M540.0 198.0L535.0 198.0M540.0 202.0L535.0 202.0M540.0 206.0L535.0 206.0M540.0 210.0L535.0 210.0M540.0 214.0L535.0 214.0M540.0 218.0L535.0 218.0M540.0 222.0L535.0 222.0M540.0 226.0L535.0 226.0M540.0 230.0L535.0 230.0M540.0 234.0L535.0 234.0M540.0 238.0L535.0 238.0M540.0 242.0L535.0 242.0M540.0 246.0L535.0 246.0M540.0 250.0L535.0 250.0M540.0 254.0L535.0 254.0M540.0 258.0L535.0 258.0M540.0 262.0L535.0 262.0M540.0 266.0L535.0 266.0M540.0 270.0L535.0 270.0M540.0 274.0L535.0 274.0M540.0 278.0L535.0 278.0M540.0 282.0L535.0 282.0M540.0 286.0L535.0 286.0M540.0 290.0L535.0 290.0M540.0 294.0L535.0 294.0M492.0 359.0L492.0 466.0M488.0 359.0L488.0 466.0M492.0 363.0L487.0 363.0M492.0 367.0L487.0 367.0M492.0 371.0L487.0 371.0M492.0 375.0L487.0 375.0M492.0 379.0L487.0 379.0M492.0 383.0L487.0 383.0M492.0 387.0L487.0 387.0M492.0 391.0L487.0 391.0M492.0 395.0L487.0 395.0M492.0 399.0L487.0 399.0M492.0 403.0L487.0 403.0M492.0 407.0L487.0 407.0M492.0 411.0L487.0 411.0M492.0 415.0L487.0 415.0M492.0 419.0L487.0 419.0M492.0 423.0L487.0 423.0M492.0 427.0L487.0 427.0M492.0 431.0L487.0 431.0M492.0 435.0L487.0 435.0M492.0 439.0L487.0 439.0M492.0 443.0L487.0 443.0M492.0 447.0L487.0 447.0M492.0 451.0L487.0 451.0M492.0 455.0L487.0 455.0M492.0 459.0L487.0 459.0M540.0 359.0L540.0 415.0M536.0 359.0L536.0 415.0M540.0 363.0L535.0 363.0M540.0 367.0L535.0 367.0M540.0 371.0L535.0 371.0M540.0 375.0L535.0 375.0M540.0 379.0L535.0 379.0M540.0 383.0L535.0 383.0M540.0 387.0L535.0 387.0M540.0 391.0L535.0 391.0M540.0 395.0L535.0 395.0M540.0 399.0L535.0 399.0M540.0 403.0L535.0 403.0M540.0 407.0L535.0 407.0M540.0 411.0L535.0 411.0M146.0 372.0L186.0 372.0M146.0 376.0L186.0 376.0M150.0 372.0L150.0 377.0M154.0 372.0L154.0 377.0M158.0 372.0L158.0 377.0M162.0 372.0L162.0 377.0M166.0 372.0L166.0 377.0M170.0 372.0L170.0 377.0M174.0 372.0L174.0 377.0M178.0 372.0L178.0 377.0M182.0 372.0L182.0 377.0M148.0 373.8L152.0 423.8M144.0 374.2L148.0 424.2M148.3 377.8L143.3 378.2M148.6 381.8L143.6 382.2M149.0 385.8L144.0 386.2M149.3 389.8L144.3 390.2M149.6 393.8L144.6 394.2M149.9 397.8L144.9 398.2M150.2 401.8L145.2 402.2M150.5 405.7L145.6 406.1M150.9 409.7L145.9 410.1M151.2 413.7L146.2 414.1M151.5 417.7L146.5 418.1M188.0 374.0L188.0 428.0M184.0 374.0L184.0 428.0M188.0 378.0L183.0 378.0M188.0 382.0L183.0 382.0M188.0 386.0L183.0 386.0M188.0 390.0L183.0 390.0M188.0 394.0L183.0 394.0M188.0 398.0L183.0 398.0M188.0 402.0L183.0 402.0M188.0 406.0L183.0 406.0M188.0 410.0L183.0 410.0M188.0 414.0L183.0 414.0M188.0 418.0L183.0 418.0M188.0 422.0L183.0 422.0M150.2 422.0L186.2 426.0M149.8 426.0L185.8 430.0M154.2 422.5L153.6 427.4M158.2 422.9L157.6 427.9M162.1 423.3L161.6 428.3M166.1 423.8L165.6 428.7M170.1 424.2L169.5 429.2M174.1 424.7L173.5 429.6M178.0 425.1L177.5 430.1M182.0 425.5L181.5 430.5M492.0 376.0L538.0 376.0M492.0 380.0L538.0 380.0M496.0 376.0L496.0 381.0M500.0 376.0L500.0 381.0M504.0 376.0L504.0 381.0M508.0 376.0L508.0 381.0M512.0 376.0L512.0 381.0M516.0 376.0L516.0 381.0M520.0 376.0L520.0 381.0M524.0 376.0L524.0 381.0M528.0 376.0L528.0 381.0M532.0 376.0L532.0 381.0M494.0 378.0L494.0 412.0M490.0 378.0L490.0 412.0M494.0 382.0L489.0 382.0M494.0 386.0L489.0 386.0M494.0 390.0L489.0 390.0M494.0 394.0L489.0 394.0M494.0 398.0L489.0 398.0M494.0 402.0L489.0 402.0M494.0 406.0L489.0 406.0M540.0 378.0L540.0 412.0M536.0 378.0L536.0 412.0M540.0 382.0L535.0 382.0M540.0 386.0L535.0 386.0M540.0 390.0L535.0 390.0M540.0 394.0L535.0 394.0M540.0 398.0L535.0 398.0M540.0 402.0L535.0 402.0M540.0 406.0L535.0 406.0M492.0 410.0L538.0 410.0M492.0 414.0L538.0 414.0M496.0 410.0L496.0 415.0M500.0 410.0L500.0 415.0M504.0 410.0L504.0 415.0M508.0 410.0L508.0 415.0M512.0 410.0L512.0 415.0M516.0 410.0L516.0 415.0M520.0 410.0L520.0 415.0M524.0 410.0L524.0 415.0M528.0 410.0L528.0 415.0M532.0 410.0L532.0 415.0M104.6 408.4L107.4 428.8M100.6 409.0L103.4 429.4M105.1 412.4L100.2 413.1M105.7 416.4L100.7 417.0M106.2 420.3L101.3 421.0M106.8 424.3L101.8 425.0" stroke="#9a20d0" stroke-width="0.5" fill="none" opacity="0.6"/>
<path d="M102.1 191.5L124.1 307.5A8 8 0 0 0 139.9 304.5L117.9 188.5A8 8 0 0 0 102.1 191.5ZM64.6 255.4L80.6 337.4A7.5 7.5 0 0 0 95.4 334.6L79.4 252.6A7.5 7.5 0 0 0 64.6 255.4ZM220.0 198.0L240.0 198.0A8 8 0 0 0 240.0 182.0L220.0 182.0A8 8 0 0 0 220.0 198.0ZM311.0 198.5L337.0 198.5A8.5 8.5 0 0 0 337.0 181.5L311.0 181.5A8.5 8.5 0 0 0 311.0 198.5ZM315.5 190.0L315.5 289.0A7.5 7.5 0 0 0 330.5 289.0L330.5 190.0A7.5 7.5 0 0 0 315.5 190.0ZM408.0 198.0L428.0 198.0A8 8 0 0 0 428.0 182.0L408.0 182.0A8 8 0 0 0 408.0 198.0ZM482.0 190.0L482.0 298.0A8 8 0 0 0 498.0 298.0L498.0 190.0A8 8 0 0 0 482.0 190.0ZM530.0 190.0L530.0 298.0A8 8 0 0 0 546.0 298.0L546.0 190.0A8 8 0 0 0 530.0 190.0ZM602.0 198.0L621.0 198.0A8 8 0 0 0 621.0 182.0L602.0 182.0A8 8 0 0 0 602.0 198.0ZM701.0 198.0L720.0 198.0A8 8 0 0 0 720.0 182.0L701.0 182.0A8 8 0 0 0 701.0 198.0ZM150.5 262.0L150.5 276.0A8 8 0 0 0 166.5 276.0L166.5 262.0A8 8 0 0 0 150.5 262.0ZM233.0 262.0L233.0 276.0A8 8 0 0 0 249.0 276.0L249.0 262.0A8 8 0 0 0 233.0 262.0ZM399.0 262.0L399.0 276.0A8 8 0 0 0 415.0 276.0L415.0 262.0A8 8 0 0 0 399.0 262.0ZM613.0 261.0L613.0 277.0A8 8 0 0 0 629.0 277.0L629.0 261.0A8 8 0 0 0 613.0 261.0ZM698.1 258.6L695.1 275.6A8 8 0 0 0 710.9 278.4L713.9 261.4A8 8 0 0 0 698.1 258.6ZM233.0 380.0L233.0 396.0A8 8 0 0 0 249.0 396.0L249.0 380.0A8 8 0 0 0 233.0 380.0ZM399.0 380.0L399.0 396.0A8 8 0 0 0 415.0 396.0L415.0 380.0A8 8 0 0 0 399.0 380.0ZM613.0 380.0L613.0 396.0A8 8 0 0 0 629.0 396.0L629.0 380.0A8 8 0 0 0 613.0 380.0ZM679.1 377.6L676.1 394.6A8 8 0 0 0 691.9 397.4L694.9 380.4A8 8 0 0 0 679.1 377.6ZM315.5 367.0L315.5 466.0A7.5 7.5 0 0 0 330.5 466.0L330.5 367.0A7.5 7.5 0 0 0 315.5 367.0ZM163.0 474.0L174.0 474.0A8 8 0 0 0 174.0 458.0L163.0 458.0A8 8 0 0 0 163.0 474.0ZM198.0 474.0L219.0 474.0A8 8 0 0 0 219.0 458.0L198.0 458.0A8 8 0 0 0 198.0 474.0ZM312.0 474.5L336.0 474.5A8.5 8.5 0 0 0 336.0 457.5L312.0 457.5A8.5 8.5 0 0 0 312.0 474.5ZM408.0 474.0L427.0 474.0A8 8 0 0 0 427.0 458.0L408.0 458.0A8 8 0 0 0 408.0 474.0ZM480.0 474.5L499.0 474.5A8.5 8.5 0 0 0 499.0 457.5L480.0 457.5A8.5 8.5 0 0 0 480.0 474.5ZM547.0 474.0L567.0 474.0A8 8 0 0 0 567.0 458.0L547.0 458.0A8 8 0 0 0 547.0 474.0ZM662.0 474.0L676.0 474.0A8 8 0 0 0 676.0 458.0L662.0 458.0A8 8 0 0 0 662.0 474.0ZM482.0 359.0L482.0 466.0A8 8 0 0 0 498.0 466.0L498.0 359.0A8 8 0 0 0 482.0 359.0ZM530.0 359.0L530.0 415.0A8 8 0 0 0 546.0 415.0L546.0 359.0A8 8 0 0 0 530.0 359.0ZM94.7 409.8L97.5 430.2A8 8 0 0 0 113.3 428.0L110.5 407.6A8 8 0 0 0 94.7 409.8ZM132.0 328.6L134.0 347.6A6 6 0 0 0 146.0 346.4L144.0 327.4A6 6 0 0 0 132.0 328.6ZM146 368H186A6 6 0 0 1 192 374V427A6 6 0 0 1 186 433H146A6 6 0 0 1 140 427V374A6 6 0 0 1 146 368ZM490 370H539A6 6 0 0 1 545 376V414A6 6 0 0 1 539 420H490A6 6 0 0 1 484 414V376A6 6 0 0 1 490 370Z" stroke="#3c9aa8" stroke-width="0.9" fill="none" stroke-dasharray="2.6 1.6"/>
<g fill="#a8a0f0" stroke="#4848e0" stroke-width="0.7"><circle cx="243.1" cy="320.2" r="3.1"/><circle cx="254.9" cy="320.2" r="3.1"/><circle cx="243.1" cy="336.6" r="3.1"/><circle cx="254.9" cy="336.6" r="3.1"/><circle cx="243.1" cy="328.4" r="3.1"/><circle cx="254.9" cy="328.4" r="3.1"/><circle cx="263.1" cy="320.2" r="3.1"/><circle cx="274.9" cy="320.2" r="3.1"/><circle cx="263.1" cy="336.6" r="3.1"/><circle cx="274.9" cy="336.6" r="3.1"/><circle cx="263.1" cy="328.4" r="3.1"/><circle cx="274.9" cy="328.4" r="3.1"/><circle cx="373.2" cy="320.2" r="3.1"/><circle cx="385.4" cy="320.2" r="3.1"/><circle cx="373.2" cy="336.6" r="3.1"/><circle cx="385.4" cy="336.6" r="3.1"/><circle cx="373.2" cy="328.4" r="3.1"/><circle cx="385.4" cy="328.4" r="3.1"/><circle cx="393.6" cy="320.2" r="3.1"/><circle cx="405.1" cy="320.2" r="3.1"/><circle cx="393.6" cy="336.6" r="3.1"/><circle cx="405.1" cy="336.6" r="3.1"/><circle cx="393.6" cy="328.4" r="3.1"/><circle cx="405.1" cy="328.4" r="3.1"/><circle cx="623.6" cy="320.5" r="3.1"/><circle cx="634.8" cy="320.5" r="3.1"/><circle cx="623.6" cy="327.3" r="3.1"/><circle cx="634.8" cy="327.3" r="3.1"/><circle cx="643.9" cy="320.5" r="3.1"/><circle cx="655.0" cy="320.5" r="3.1"/><circle cx="643.9" cy="327.3" r="3.1"/><circle cx="655.0" cy="327.3" r="3.1"/><circle cx="644.3" cy="332.5" r="3.1"/><circle cx="650.2" cy="332.5" r="3.1"/><circle cx="644.3" cy="343.3" r="3.1"/><circle cx="650.2" cy="343.3" r="3.1"/><circle cx="644.3" cy="345.6" r="3.1"/><circle cx="650.2" cy="345.6" r="3.1"/><circle cx="644.3" cy="356.4" r="3.1"/><circle cx="650.2" cy="356.4" r="3.1"/></g>
<g fill="none" stroke="#a8a0f0" stroke-width="2.6"><rect x="243.1" y="320.2" width="11.8" height="16.4"/><rect x="263.1" y="320.2" width="11.8" height="16.4"/><rect x="373.2" y="320.2" width="12.2" height="16.4"/><rect x="393.6" y="320.2" width="11.5" height="16.4"/><rect x="623.6" y="320.5" width="11.2" height="6.8"/><rect x="643.9" y="320.5" width="11.1" height="6.8"/><rect x="644.3" y="332.5" width="5.9" height="10.8"/><rect x="644.3" y="345.6" width="5.9" height="10.8"/></g>
<g fill="none" stroke="#902060" stroke-width="0.6"><rect x="243.7" y="320.8" width="10.6" height="15.2"/><rect x="263.7" y="320.8" width="10.6" height="15.2"/><rect x="373.8" y="320.8" width="11.0" height="15.2"/><rect x="394.2" y="320.8" width="10.3" height="15.2"/><rect x="624.2" y="321.1" width="10.0" height="5.6"/><rect x="644.5" y="321.1" width="9.9" height="5.6"/><rect x="644.9" y="333.1" width="4.7" height="9.6"/><rect x="644.9" y="346.2" width="4.7" height="9.6"/></g>
<ellipse cx="249.0" cy="323.7" rx="2.4" ry="2.2" fill="#fff"/><ellipse cx="249.0" cy="333.0" rx="2.4" ry="2.2" fill="#fff"/><ellipse cx="269.0" cy="323.7" rx="2.4" ry="2.2" fill="#fff"/><ellipse cx="269.0" cy="333.0" rx="2.4" ry="2.2" fill="#fff"/><ellipse cx="379.3" cy="323.7" rx="2.4" ry="2.2" fill="#fff"/><ellipse cx="379.3" cy="333.0" rx="2.4" ry="2.2" fill="#fff"/><ellipse cx="399.4" cy="323.7" rx="2.4" ry="2.2" fill="#fff"/><ellipse cx="399.4" cy="333.0" rx="2.4" ry="2.2" fill="#fff"/><ellipse cx="629.2" cy="323.9" rx="2.4" ry="2.2" fill="#fff"/><ellipse cx="649.4" cy="323.9" rx="2.4" ry="2.2" fill="#fff"/><ellipse cx="647.3" cy="334.1" rx="2.4" ry="2.2" fill="#fff"/><ellipse cx="647.3" cy="349.6" rx="2.4" ry="3.4" fill="#fff"/>
<g fill="#9a94ee" stroke="#4040d0" stroke-width="0.8"><circle cx="106.9" cy="187" r="3.0"/><circle cx="110.3" cy="190.4" r="3.0"/><circle cx="121.5" cy="190.4" r="3.0"/><circle cx="147.8" cy="157.7" r="3.0"/><circle cx="189.5" cy="157.7" r="3.0"/><circle cx="147.8" cy="187.8" r="3.0"/><circle cx="189.5" cy="187.8" r="3.0"/><circle cx="220" cy="190.4" r="3.0"/><circle cx="240.2" cy="190.4" r="3.0"/><circle cx="311.2" cy="190.4" r="3.0"/><circle cx="323.2" cy="190.4" r="3.0"/><circle cx="337" cy="190.4" r="3.0"/><circle cx="412.5" cy="157.7" r="3.0"/><circle cx="453.8" cy="157.7" r="3.0"/><circle cx="408.2" cy="190.4" r="3.0"/><circle cx="412.5" cy="187.8" r="3.0"/><circle cx="428" cy="190.4" r="3.0"/><circle cx="453.8" cy="187.8" r="3.0"/><circle cx="479.6" cy="190.4" r="3.0"/><circle cx="492.5" cy="187" r="3.0"/><circle cx="538.5" cy="190.4" r="3.0"/><circle cx="550.5" cy="190.4" r="3.0"/><circle cx="576.3" cy="157.7" r="3.0"/><circle cx="617.6" cy="157.7" r="3.0"/><circle cx="576.3" cy="187.8" r="3.0"/><circle cx="602.2" cy="190.4" r="3.0"/><circle cx="617.6" cy="187.8" r="3.0"/><circle cx="621" cy="190.4" r="3.0"/><circle cx="538.5" cy="222.3" r="3.0"/><circle cx="701.2" cy="190.4" r="3.0"/><circle cx="719.8" cy="188.6" r="3.0"/><circle cx="158.5" cy="261.7" r="3.0"/><circle cx="158.5" cy="276.3" r="3.0"/><circle cx="241" cy="261.7" r="3.0"/><circle cx="241" cy="276.3" r="3.0"/><circle cx="406.7" cy="261.7" r="3.0"/><circle cx="406.7" cy="274" r="3.0"/><circle cx="621" cy="261" r="3.0"/><circle cx="621" cy="277" r="3.0"/><circle cx="706.5" cy="260.5" r="3.0"/><circle cx="703" cy="277.5" r="3.0"/><circle cx="241.3" cy="379.7" r="3.0"/><circle cx="241.3" cy="395.8" r="3.0"/><circle cx="243.4" cy="401.8" r="3.0"/><circle cx="260.2" cy="401.8" r="3.0"/><circle cx="406.7" cy="379.8" r="3.0"/><circle cx="406.7" cy="395.5" r="3.0"/><circle cx="621.4" cy="380.4" r="3.0"/><circle cx="621.4" cy="396.4" r="3.0"/><circle cx="686.8" cy="379.3" r="3.0"/><circle cx="684.6" cy="396.4" r="3.0"/><circle cx="323" cy="289" r="3.0"/><circle cx="323" cy="367.5" r="3.0"/><circle cx="323.2" cy="466.5" r="3.0"/><circle cx="312.5" cy="466.5" r="3.0"/><circle cx="336" cy="466.5" r="3.0"/><circle cx="323" cy="328.3" r="3.0"/><circle cx="318.3" cy="337.4" r="3.0"/><circle cx="323.4" cy="337.4" r="3.0"/><circle cx="334.6" cy="337.4" r="3.0"/><circle cx="131" cy="298.7" r="3.0"/><circle cx="132.7" cy="310" r="3.0"/><circle cx="110" cy="309" r="3.0"/><circle cx="107.7" cy="320.2" r="3.0"/><circle cx="112" cy="320.2" r="3.0"/><circle cx="138.7" cy="328" r="3.0"/><circle cx="142.2" cy="329.7" r="3.0"/><circle cx="137" cy="346.9" r="3.0"/><circle cx="145.6" cy="345.2" r="3.0"/><circle cx="72.1" cy="253.6" r="3.0"/><circle cx="87.9" cy="324.3" r="3.0"/><circle cx="88.6" cy="335.7" r="3.0"/><circle cx="102.6" cy="408.7" r="3.0"/><circle cx="105.4" cy="429.1" r="3.0"/><circle cx="144.5" cy="373.2" r="3.0"/><circle cx="148.8" cy="378.6" r="3.0"/><circle cx="148.8" cy="385" r="3.0"/><circle cx="186.5" cy="373.2" r="3.0"/><circle cx="183.2" cy="381.8" r="3.0"/><circle cx="148.8" cy="404.4" r="3.0"/><circle cx="151" cy="412" r="3.0"/><circle cx="153.1" cy="420.5" r="3.0"/><circle cx="155.3" cy="424.8" r="3.0"/><circle cx="181" cy="409.8" r="3.0"/><circle cx="185.4" cy="428" r="3.0"/><circle cx="162.8" cy="464.6" r="3.0"/><circle cx="161.7" cy="469" r="3.0"/><circle cx="173.5" cy="466.3" r="3.0"/><circle cx="198.3" cy="466.3" r="3.0"/><circle cx="218.7" cy="466.3" r="3.0"/><circle cx="271.6" cy="468.5" r="3.0"/><circle cx="271.6" cy="498.7" r="3.0"/><circle cx="313.5" cy="498.7" r="3.0"/><circle cx="313.5" cy="468.5" r="3.0"/><circle cx="408" cy="466.6" r="3.0"/><circle cx="412.6" cy="468.9" r="3.0"/><circle cx="427.4" cy="466.6" r="3.0"/><circle cx="453.7" cy="468.9" r="3.0"/><circle cx="480" cy="466.6" r="3.0"/><circle cx="490.3" cy="466.6" r="3.0"/><circle cx="499.4" cy="466.6" r="3.0"/><circle cx="547.4" cy="466.6" r="3.0"/><circle cx="566.9" cy="466.6" r="3.0"/><circle cx="593.1" cy="468.9" r="3.0"/><circle cx="412.6" cy="498.6" r="3.0"/><circle cx="453.7" cy="498.6" r="3.0"/><circle cx="635" cy="468.2" r="3.0"/><circle cx="593.6" cy="498.9" r="3.0"/><circle cx="635" cy="498.9" r="3.0"/><circle cx="662" cy="466" r="3.0"/><circle cx="676" cy="466" r="3.0"/><circle cx="487.5" cy="289" r="3.0"/><circle cx="490" cy="298" r="3.0"/><circle cx="515" cy="289" r="3.0"/><circle cx="535.7" cy="288" r="3.0"/><circle cx="536.6" cy="298" r="3.0"/><circle cx="487" cy="320" r="3.0"/><circle cx="492" cy="320" r="3.0"/><circle cx="487" cy="330" r="3.0"/><circle cx="490" cy="337.5" r="3.0"/><circle cx="493.5" cy="337.5" r="3.0"/><circle cx="475.5" cy="337.4" r="3.0"/><circle cx="539.4" cy="320" r="3.0"/><circle cx="543.7" cy="318.8" r="3.0"/><circle cx="537.2" cy="337" r="3.0"/><circle cx="543.7" cy="337" r="3.0"/><circle cx="538.3" cy="357.5" r="3.0"/><circle cx="538.3" cy="363" r="3.0"/><circle cx="693.8" cy="328.5" r="3.0"/><circle cx="490.3" cy="359" r="3.0"/><circle cx="490.3" cy="363.7" r="3.0"/><circle cx="492.6" cy="379.7" r="3.0"/><circle cx="492.6" cy="384" r="3.0"/><circle cx="505" cy="378.6" r="3.0"/><circle cx="512" cy="378.6" r="3.0"/><circle cx="531.4" cy="378.6" r="3.0"/><circle cx="537" cy="376.3" r="3.0"/><circle cx="491.4" cy="412.9" r="3.0"/><circle cx="504" cy="410.6" r="3.0"/><circle cx="538.3" cy="411.7" r="3.0"/><circle cx="539.4" cy="415" r="3.0"/><circle cx="414.5" cy="337.9" r="3.0"/><circle cx="258" cy="339.5" r="3.0"/></g>
<path d="M105.1 187.0H108.7M106.9 185.2V188.8M108.5 190.4H112.1M110.3 188.6V192.2M119.7 190.4H123.3M121.5 188.6V192.2M146.0 157.7H149.6M147.8 155.9V159.5M187.7 157.7H191.3M189.5 155.9V159.5M146.0 187.8H149.6M147.8 186.0V189.6M187.7 187.8H191.3M189.5 186.0V189.6M218.2 190.4H221.8M220.0 188.6V192.2M238.4 190.4H242.0M240.2 188.6V192.2M309.4 190.4H313.0M311.2 188.6V192.2M321.4 190.4H325.0M323.2 188.6V192.2M335.2 190.4H338.8M337.0 188.6V192.2M410.7 157.7H414.3M412.5 155.9V159.5M452.0 157.7H455.6M453.8 155.9V159.5M406.4 190.4H410.0M408.2 188.6V192.2M410.7 187.8H414.3M412.5 186.0V189.6M426.2 190.4H429.8M428.0 188.6V192.2M452.0 187.8H455.6M453.8 186.0V189.6M477.8 190.4H481.4M479.6 188.6V192.2M490.7 187.0H494.3M492.5 185.2V188.8M536.7 190.4H540.3M538.5 188.6V192.2M548.7 190.4H552.3M550.5 188.6V192.2M574.5 157.7H578.1M576.3 155.9V159.5M615.8 157.7H619.4M617.6 155.9V159.5M574.5 187.8H578.1M576.3 186.0V189.6M600.4 190.4H604.0M602.2 188.6V192.2M615.8 187.8H619.4M617.6 186.0V189.6M619.2 190.4H622.8M621.0 188.6V192.2M536.7 222.3H540.3M538.5 220.5V224.1M699.4 190.4H703.0M701.2 188.6V192.2M718.0 188.6H721.6M719.8 186.8V190.4M156.7 261.7H160.3M158.5 259.9V263.5M156.7 276.3H160.3M158.5 274.5V278.1M239.2 261.7H242.8M241.0 259.9V263.5M239.2 276.3H242.8M241.0 274.5V278.1M404.9 261.7H408.5M406.7 259.9V263.5M404.9 274.0H408.5M406.7 272.2V275.8M619.2 261.0H622.8M621.0 259.2V262.8M619.2 277.0H622.8M621.0 275.2V278.8M704.7 260.5H708.3M706.5 258.7V262.3M701.2 277.5H704.8M703.0 275.7V279.3M239.5 379.7H243.1M241.3 377.9V381.5M239.5 395.8H243.1M241.3 394.0V397.6M241.6 401.8H245.2M243.4 400.0V403.6M258.4 401.8H262.0M260.2 400.0V403.6M404.9 379.8H408.5M406.7 378.0V381.6M404.9 395.5H408.5M406.7 393.7V397.3M619.6 380.4H623.2M621.4 378.6V382.2M619.6 396.4H623.2M621.4 394.6V398.2M685.0 379.3H688.6M686.8 377.5V381.1M682.8 396.4H686.4M684.6 394.6V398.2M321.2 289.0H324.8M323.0 287.2V290.8M321.2 367.5H324.8M323.0 365.7V369.3M321.4 466.5H325.0M323.2 464.7V468.3M310.7 466.5H314.3M312.5 464.7V468.3M334.2 466.5H337.8M336.0 464.7V468.3M321.2 328.3H324.8M323.0 326.5V330.1M316.5 337.4H320.1M318.3 335.6V339.2M321.6 337.4H325.2M323.4 335.6V339.2M332.8 337.4H336.4M334.6 335.6V339.2M129.2 298.7H132.8M131.0 296.9V300.5M130.9 310.0H134.5M132.7 308.2V311.8M108.2 309.0H111.8M110.0 307.2V310.8M105.9 320.2H109.5M107.7 318.4V322.0M110.2 320.2H113.8M112.0 318.4V322.0M136.9 328.0H140.5M138.7 326.2V329.8M140.4 329.7H144.0M142.2 327.9V331.5M135.2 346.9H138.8M137.0 345.1V348.7M143.8 345.2H147.4M145.6 343.4V347.0M70.3 253.6H73.9M72.1 251.8V255.4M86.1 324.3H89.7M87.9 322.5V326.1M86.8 335.7H90.4M88.6 333.9V337.5M100.8 408.7H104.4M102.6 406.9V410.5M103.6 429.1H107.2M105.4 427.3V430.9M142.7 373.2H146.3M144.5 371.4V375.0M147.0 378.6H150.6M148.8 376.8V380.4M147.0 385.0H150.6M148.8 383.2V386.8M184.7 373.2H188.3M186.5 371.4V375.0M181.4 381.8H185.0M183.2 380.0V383.6M147.0 404.4H150.6M148.8 402.6V406.2M149.2 412.0H152.8M151.0 410.2V413.8M151.3 420.5H154.9M153.1 418.7V422.3M153.5 424.8H157.1M155.3 423.0V426.6M179.2 409.8H182.8M181.0 408.0V411.6M183.6 428.0H187.2M185.4 426.2V429.8M161.0 464.6H164.6M162.8 462.8V466.4M159.9 469.0H163.5M161.7 467.2V470.8M171.7 466.3H175.3M173.5 464.5V468.1M196.5 466.3H200.1M198.3 464.5V468.1M216.9 466.3H220.5M218.7 464.5V468.1M269.8 468.5H273.4M271.6 466.7V470.3M269.8 498.7H273.4M271.6 496.9V500.5M311.7 498.7H315.3M313.5 496.9V500.5M311.7 468.5H315.3M313.5 466.7V470.3M406.2 466.6H409.8M408.0 464.8V468.4M410.8 468.9H414.4M412.6 467.1V470.7M425.6 466.6H429.2M427.4 464.8V468.4M451.9 468.9H455.5M453.7 467.1V470.7M478.2 466.6H481.8M480.0 464.8V468.4M488.5 466.6H492.1M490.3 464.8V468.4M497.6 466.6H501.2M499.4 464.8V468.4M545.6 466.6H549.2M547.4 464.8V468.4M565.1 466.6H568.7M566.9 464.8V468.4M591.3 468.9H594.9M593.1 467.1V470.7M410.8 498.6H414.4M412.6 496.8V500.4M451.9 498.6H455.5M453.7 496.8V500.4M633.2 468.2H636.8M635.0 466.4V470.0M591.8 498.9H595.4M593.6 497.1V500.7M633.2 498.9H636.8M635.0 497.1V500.7M660.2 466.0H663.8M662.0 464.2V467.8M674.2 466.0H677.8M676.0 464.2V467.8M485.7 289.0H489.3M487.5 287.2V290.8M488.2 298.0H491.8M490.0 296.2V299.8M513.2 289.0H516.8M515.0 287.2V290.8M533.9 288.0H537.5M535.7 286.2V289.8M534.8 298.0H538.4M536.6 296.2V299.8M485.2 320.0H488.8M487.0 318.2V321.8M490.2 320.0H493.8M492.0 318.2V321.8M485.2 330.0H488.8M487.0 328.2V331.8M488.2 337.5H491.8M490.0 335.7V339.3M491.7 337.5H495.3M493.5 335.7V339.3M473.7 337.4H477.3M475.5 335.6V339.2M537.6 320.0H541.2M539.4 318.2V321.8M541.9 318.8H545.5M543.7 317.0V320.6M535.4 337.0H539.0M537.2 335.2V338.8M541.9 337.0H545.5M543.7 335.2V338.8M536.5 357.5H540.1M538.3 355.7V359.3M536.5 363.0H540.1M538.3 361.2V364.8M692.0 328.5H695.6M693.8 326.7V330.3M488.5 359.0H492.1M490.3 357.2V360.8M488.5 363.7H492.1M490.3 361.9V365.5M490.8 379.7H494.4M492.6 377.9V381.5M490.8 384.0H494.4M492.6 382.2V385.8M503.2 378.6H506.8M505.0 376.8V380.4M510.2 378.6H513.8M512.0 376.8V380.4M529.6 378.6H533.2M531.4 376.8V380.4M535.2 376.3H538.8M537.0 374.5V378.1M489.6 412.9H493.2M491.4 411.1V414.7M502.2 410.6H505.8M504.0 408.8V412.4M536.5 411.7H540.1M538.3 409.9V413.5M537.6 415.0H541.2M539.4 413.2V416.8M412.7 337.9H416.3M414.5 336.1V339.7M256.2 339.5H259.8M258.0 337.7V341.3" stroke="#e8e8ff" stroke-width="0.6"/>
</svg>
<!-- legend panel -->
<div class="a" style="left:743px;top:91px;width:70px;height:400px;background:#fff"></div>
<svg class="a" style="left:0;top:0" width="930" height="700" viewBox="0 0 930 700">
<rect x="748" y="101.00" width="37" height="12.99" fill="#0000aa"/>
<rect x="748" y="113.69" width="37" height="12.99" fill="#00008c"/>
<rect x="748" y="126.38" width="37" height="12.99" fill="#000070"/>
<rect x="748" y="139.08" width="37" height="12.99" fill="#006a00"/>
<rect x="748" y="151.77" width="37" height="12.99" fill="#008800"/>
<rect x="748" y="164.46" width="37" height="12.99" fill="#00a000"/>
<rect x="748" y="177.15" width="37" height="12.99" fill="#44a400"/>
<rect x="748" y="189.85" width="37" height="12.99" fill="#a8a400"/>
<rect x="748" y="202.54" width="37" height="12.99" fill="#a87c00"/>
<rect x="748" y="215.23" width="37" height="12.99" fill="#a85000"/>
<rect x="748" y="227.92" width="37" height="12.99" fill="#a00000"/>
<rect x="748" y="240.62" width="37" height="12.99" fill="#820000"/>
<rect x="748" y="253.31" width="37" height="12.99" fill="#700000"/>
<line x1="748" x2="785" y1="113.69" y2="113.69" stroke="#000" stroke-width="0.8" stroke-dasharray="1.2 0.8"/>
<line x1="748" x2="785" y1="126.38" y2="126.38" stroke="#000" stroke-width="0.8" stroke-dasharray="1.2 0.8"/>
<line x1="748" x2="785" y1="139.08" y2="139.08" stroke="#000" stroke-width="0.8" stroke-dasharray="1.2 0.8"/>
<line x1="748" x2="785" y1="151.77" y2="151.77" stroke="#000" stroke-width="0.8" stroke-dasharray="1.2 0.8"/>
<line x1="748" x2="785" y1="164.46" y2="164.46" stroke="#000" stroke-width="0.8" stroke-dasharray="1.2 0.8"/>
<line x1="748" x2="785" y1="177.15" y2="177.15" stroke="#000" stroke-width="0.8" stroke-dasharray="1.2 0.8"/>
<line x1="748" x2="785" y1="189.85" y2="189.85" stroke="#000" stroke-width="0.8" stroke-dasharray="1.2 0.8"/>
<line x1="748" x2="785" y1="202.54" y2="202.54" stroke="#000" stroke-width="0.8" stroke-dasharray="1.2 0.8"/>
<line x1="748" x2="785" y1="215.23" y2="215.23" stroke="#000" stroke-width="0.8" stroke-dasharray="1.2 0.8"/>
<line x1="748" x2="785" y1="227.92" y2="227.92" stroke="#000" stroke-width="0.8" stroke-dasharray="1.2 0.8"/>
<line x1="748" x2="785" y1="240.62" y2="240.62" stroke="#000" stroke-width="0.8" stroke-dasharray="1.2 0.8"/>
<line x1="748" x2="785" y1="253.31" y2="253.31" stroke="#000" stroke-width="0.8" stroke-dasharray="1.2 0.8"/>
<rect x="748" y="101" width="37" height="165" fill="none" stroke="#111" stroke-width="0.8"/>
<text x="807.5" y="104.20" text-anchor="end" font-family="Liberation Sans" font-size="7.8" letter-spacing="-0.1">-2,98</text>
<text x="807.5" y="116.89" text-anchor="end" font-family="Liberation Sans" font-size="7.8" letter-spacing="-0.1">-2,75</text>
<text x="807.5" y="129.58" text-anchor="end" font-family="Liberation Sans" font-size="7.8" letter-spacing="-0.1">-2,50</text>
<text x="807.5" y="142.28" text-anchor="end" font-family="Liberation Sans" font-size="7.8" letter-spacing="-0.1">-2,25</text>
<text x="807.5" y="154.97" text-anchor="end" font-family="Liberation Sans" font-size="7.8" letter-spacing="-0.1">-2,00</text>
<text x="807.5" y="167.66" text-anchor="end" font-family="Liberation Sans" font-size="7.8" letter-spacing="-0.1">-1,75</text>
<text x="807.5" y="180.35" text-anchor="end" font-family="Liberation Sans" font-size="7.8" letter-spacing="-0.1">-1,50</text>
<text x="807.5" y="193.05" text-anchor="end" font-family="Liberation Sans" font-size="7.8" letter-spacing="-0.1">-1,25</text>
<text x="807.5" y="205.74" text-anchor="end" font-family="Liberation Sans" font-size="7.8" letter-spacing="-0.1">-1,00</text>
<text x="807.5" y="218.43" text-anchor="end" font-family="Liberation Sans" font-size="7.8" letter-spacing="-0.1">-0,75</text>
<text x="807.5" y="231.12" text-anchor="end" font-family="Liberation Sans" font-size="7.8" letter-spacing="-0.1">-0,50</text>
<text x="807.5" y="243.82" text-anchor="end" font-family="Liberation Sans" font-size="7.8" letter-spacing="-0.1">-0,25</text>
<text x="807.5" y="256.51" text-anchor="end" font-family="Liberation Sans" font-size="7.8" letter-spacing="-0.1">0,00</text>
<text x="807.5" y="269.20" text-anchor="end" font-family="Liberation Sans" font-size="7.8" letter-spacing="-0.1">0,05</text>
</svg>
<div class="a" style="left:743px;top:494px;width:69px;height:13px;border:1px dashed #d8d8d8"></div>
<div class="t" style="left:746px;top:495px;font-style:italic;color:#8a8a8a;font-size:8.3px">&lt;none&gt;</div>
<div class="arr" style="left:802px;top:498px;border-top-color:#999"></div>
<svg class="a" style="left:749px;top:510px" width="12" height="12" viewBox="0 0 12 12"><path d="M1.5 10.5L7 5" stroke="#1a2aa0" stroke-width="2.4" stroke-linecap="round"/><path d="M6 2.5a3 3 0 0 1 4.5-1.5L8.5 3.5 9.5 4.5 11.5 2.5a3 3 0 0 1-5 3z" fill="#1a2aa0"/></svg>
<svg class="a" style="left:773px;top:510px" width="11" height="11" viewBox="0 0 11 11"><rect x="0.5" y="0.5" width="10" height="10" rx="2" fill="#fff" stroke="#4a4"/><circle cx="5.5" cy="5.5" r="3" fill="#1a9a2a"/></svg>
<svg class="a" style="left:796px;top:510px" width="11" height="11" viewBox="0 0 11 11"><rect x="0.5" y="0.5" width="10" height="10" fill="#e8e8e8" stroke="#aaa" stroke-width="0.6"/><path d="M0 1H11" stroke="#1a2aa0" stroke-width="1.5"/><path d="M2 10L7 5M6 3.5a2 2 0 0 1 3-1L7.5 4.2 8.3 5 10 3.5a2 2 0 0 1-3.5 2" stroke="#1a2aa0" stroke-width="1.4" fill="none"/></svg>
<div class="t" style="left:743.5px;top:526.5px;font-size:8.6px;transform:scaleX(0.82)">&lt;-2,98 mm ..</div>
<div class="t" style="left:774px;top:538.5px;font-size:8.6px;transform:scaleX(0.82)">.. 0,05 mm&gt;</div>
<div class="a" style="left:0;top:549px;width:813px;height:1px;background:#888"></div>
<div class="a" style="left:812px;top:70px;width:1px;height:613px;background:#9a9a9a"></div>
<!-- right panel -->
<div class="rp">
<div class="a" style="left:816px;top:72px;width:111px;height:13px;background:#d6d6d6"></div>
<div class="t" style="left:818px;top:74px;font-size:8.5px">Frames</div>
<div class="a" style="left:917px;top:80px;width:6px;height:2px;background:#111"></div>
<svg class="a" style="left:821.0px;top:89.6px" width="10" height="10" viewBox="0 0 10 10"><rect x="1" y="0.5" width="8" height="9" fill="#bbb" stroke="#444" stroke-width="0.9"/><rect x="2.5" y="1.5" width="5" height="2" fill="#eee"/></svg>
<div class="t" style="left:833px;top:89.6px">Project</div>
<svg class="a" style="left:821.0px;top:104.3px" width="10" height="10" viewBox="0 0 10 10"><circle cx="5" cy="5" r="4.2" fill="#111" stroke="#111" stroke-dasharray="1.3 0.8" stroke-width="1.4"/><circle cx="5" cy="5" r="2.3" fill="#ff0"/></svg>
<div class="t" style="left:833px;top:104.3px">Settings</div>
<div class="a" style="left:819px;top:118.5px;width:105px;height:1px;background:#b4b4b4"></div>
<svg class="a" style="left:821.0px;top:123.8px" width="10" height="10" viewBox="0 0 10 10"><path d="M0.5 0.5L9.5 9.5M9.5 0.5L0.5 9.5" stroke="#555" stroke-width="0.8"/><circle cx="5" cy="5" r="1.6" fill="#fff" stroke="#333" stroke-width="0.8"/></svg>
<div class="t" style="left:833px;top:123.8px">Joints</div>
<svg class="a" style="left:821.0px;top:138.7px" width="10" height="10" viewBox="0 0 10 10"><path d="M1 9L9 1" stroke="#e010e0" stroke-width="1.3"/><circle cx="1.3" cy="8.7" r="1.1" fill="#fff" stroke="#333" stroke-width="0.6"/><circle cx="8.7" cy="1.3" r="1.1" fill="#fff" stroke="#333" stroke-width="0.6"/></svg>
<div class="t" style="left:833px;top:138.7px">Lines</div>
<svg class="a" style="left:821.0px;top:153.5px" width="10" height="10" viewBox="0 0 10 10"><path d="M2 9V5H5V1.5H8V9Z" fill="#e010e0" stroke="#333" stroke-width="0.6"/></svg>
<div class="t" style="left:833px;top:153.5px">Macroelements</div>
<svg class="a" style="left:821.0px;top:168.3px" width="10" height="10" viewBox="0 0 10 10"><rect x="0.5" y="1.5" width="9" height="7" fill="#fff" stroke="#333" stroke-width="0.9"/><rect x="2.5" y="3.5" width="5" height="3" fill="#e010e0"/></svg>
<div class="t" style="left:833px;top:168.3px">Openings</div>
<svg class="a" style="left:821.0px;top:183.1px" width="10" height="10" viewBox="0 0 10 10"><circle cx="5" cy="5" r="4.3" fill="none" stroke="#e010e0" stroke-width="0.9" stroke-dasharray="1.2 0.6"/><circle cx="5" cy="5" r="1.8" fill="none" stroke="#333" stroke-width="0.8"/></svg>
<div class="t" style="left:833px;top:183.1px">Joint refinements</div>
<svg class="a" style="left:821.0px;top:197.7px" width="10" height="10" viewBox="0 0 10 10"><rect x="0.5" y="2" width="9" height="6" rx="3" fill="none" stroke="#e010e0" stroke-width="0.9"/><path d="M2 5H8" stroke="#222" stroke-width="1.1"/></svg>
<div class="t" style="left:833px;top:197.7px">Line refinements</div>
<svg class="a" style="left:821.0px;top:212.5px" width="10" height="10" viewBox="0 0 10 10"><rect x="0.5" y="0.5" width="9" height="9" rx="2" fill="none" stroke="#e010e0" stroke-width="0.8" stroke-dasharray="1.2 0.6"/><path d="M2.5 8.5V5H5V2H8V8.5Z" fill="#e010e0" stroke="#333" stroke-width="0.5"/></svg>
<div class="t" style="left:833px;top:212.5px">Macroelement refinements</div>
<svg class="a" style="left:821.0px;top:227.3px" width="10" height="10" viewBox="0 0 10 10"><rect x="0.5" y="0.5" width="9" height="9" fill="#fff" stroke="#222"/><path d="M0.5 3.5H9.5M0.5 6.5H9.5M3.5 0.5V9.5M6.5 0.5V9.5M0.5 0.5L9.5 9.5M0.5 3.5L6.5 9.5M3.5 0.5L9.5 6.5" stroke="#222" stroke-width="0.8"/></svg>
<div class="t" style="left:833px;top:227.3px">Mesh generation</div>
<div class="a" style="left:819px;top:241.3px;width:105px;height:1px;background:#b4b4b4"></div>
<svg class="a" style="left:821.0px;top:246.6px" width="10" height="10" viewBox="0 0 10 10"><path d="M1 0.5L5 4L9 0.5" stroke="#555" stroke-width="0.7" fill="none"/><circle cx="5" cy="4.5" r="1.2" fill="#999"/><path d="M2 8.5L5 5.5L8 8.5Z" fill="#e010e0"/><path d="M1 9H9" stroke="#e010e0" stroke-width="1"/></svg>
<div class="t" style="left:833px;top:246.6px">Joint supports</div>
<svg class="a" style="left:821.0px;top:261.2px" width="10" height="10" viewBox="0 0 10 10"><path d="M0.5 9L9.5 2" stroke="#222" stroke-width="1"/><path d="M1 9.5L3 7.5L4 9.5ZM5 6.5L7 4.5L8 6.5Z" fill="#e010e0"/></svg>
<div class="t" style="left:833px;top:261.2px">Line supports</div>
<svg class="a" style="left:821.0px;top:276.1px" width="10" height="10" viewBox="0 0 10 10"><rect x="0.5" y="3" width="9" height="3" fill="#e010e0" stroke="#333" stroke-width="0.6"/><path d="M1.5 6V8M8.5 6V8" stroke="#222" stroke-width="1.2"/></svg>
<div class="t" style="left:833px;top:276.1px">Beams</div>
<svg class="a" style="left:821.0px;top:291.0px" width="10" height="10" viewBox="0 0 10 10"><path d="M0 5H10" stroke="#333" stroke-width="0.8"/><circle cx="5" cy="5" r="1.6" fill="#e010e0" stroke="#333" stroke-width="0.6"/></svg>
<div class="t" style="left:833px;top:291.0px">Internal hinges</div>
<svg class="a" style="left:821.0px;top:305.7px" width="10" height="10" viewBox="0 0 10 10"><path d="M0.5 3.5H9.5V8.5H0.5Z" fill="#e010e0" stroke="#333" stroke-width="0.7"/><path d="M2 1.5H8L9 3.5H1Z" fill="#fff" stroke="#333" stroke-width="0.6"/></svg>
<div class="t" style="left:833px;top:305.7px">Macroelement subsoils</div>
<div class="a" style="left:819px;top:319.7px;width:105px;height:1px;background:#b4b4b4"></div>
<svg class="a" style="left:821.0px;top:325.0px" width="10" height="10" viewBox="0 0 10 10"><circle cx="5" cy="5" r="4.3" fill="#fff" stroke="#333" stroke-width="0.9"/><path d="M5 2V7" stroke="#1030e0" stroke-width="1.2"/><path d="M3 5.5L5 8L7 5.5Z" fill="#1030e0"/></svg>
<div class="t" style="left:833px;top:325.0px">Load cases</div>
<svg class="a" style="left:821.0px;top:339.9px" width="10" height="10" viewBox="0 0 10 10"><path d="M5 0V5" stroke="#1030e0" stroke-width="0.9"/><path d="M3.5 4L5 6L6.5 4Z" fill="#1030e0"/><path d="M0 8H10" stroke="#333" stroke-width="0.8"/><circle cx="5" cy="8" r="1.3" fill="#fff" stroke="#333" stroke-width="0.6"/></svg>
<div class="t" style="left:833px;top:339.9px">Joint loads</div>
<svg class="a" style="left:821.0px;top:354.5px" width="10" height="10" viewBox="0 0 10 10"><path d="M0.5 4H9.5V6.5H0.5Z" fill="#1030e0"/><path d="M2 3V4M5 3V4M8 3V4" stroke="#1030e0"/><path d="M0 7H10" stroke="#222" stroke-width="0.9"/></svg>
<div class="t" style="left:833px;top:354.5px">Line loads</div>
<svg class="a" style="left:821.0px;top:369.2px" width="10" height="10" viewBox="0 0 10 10"><path d="M2 9V5H5V1.5H8V9Z" fill="#4060c0" stroke="#222" stroke-width="0.6"/><circle cx="6.5" cy="6" r="1" fill="#fff"/></svg>
<div class="t" style="left:833px;top:369.2px">Macroelement loads</div>
<svg class="a" style="left:821.0px;top:384.1px" width="10" height="10" viewBox="0 0 10 10"><rect x="0.5" y="0.5" width="9" height="9" fill="#fff" stroke="#222" stroke-width="0.9"/><circle cx="5" cy="5" r="1.4" fill="#1030e0"/></svg>
<div class="t" style="left:833px;top:384.1px">Free point loads</div>
<svg class="a" style="left:821.0px;top:398.8px" width="10" height="10" viewBox="0 0 10 10"><rect x="0.5" y="0.5" width="9" height="9" fill="#fff" stroke="#222" stroke-width="0.9"/><path d="M2 8L8 2" stroke="#1030e0" stroke-width="1.3"/></svg>
<div class="t" style="left:833px;top:398.8px">Free line loads</div>
<svg class="a" style="left:821.0px;top:413.7px" width="10" height="10" viewBox="0 0 10 10"><rect x="0.5" y="0.5" width="9" height="9" fill="#fff" stroke="#222" stroke-width="0.9"/><rect x="2.5" y="2" width="5" height="2.5" fill="#1030e0"/></svg>
<div class="t" style="left:833px;top:413.7px">Free surface loads</div>
<svg class="a" style="left:821.0px;top:428.6px" width="10" height="10" viewBox="0 0 10 10"><circle cx="5" cy="5" r="4.3" fill="#fff" stroke="#333" stroke-width="0.9"/><text x="5" y="8" text-anchor="middle" font-size="7.5" font-weight="bold" fill="#1030e0" font-family="Liberation Sans">1</text></svg>
<div class="t" style="left:833px;top:428.6px">Combination ULS</div>
<svg class="a" style="left:821.0px;top:443.5px" width="10" height="10" viewBox="0 0 10 10"><circle cx="5" cy="5" r="4.3" fill="#fff" stroke="#333" stroke-width="0.9"/><text x="5" y="8" text-anchor="middle" font-size="7.5" font-weight="bold" fill="#1030e0" font-family="Liberation Sans">2</text></svg>
<div class="t" style="left:833px;top:443.5px">Combination SLS</div>
<div class="a" style="left:819px;top:457.5px;width:105px;height:1px;background:#b4b4b4"></div>
<svg class="a" style="left:821.0px;top:462.9px" width="10" height="10" viewBox="0 0 10 10"><rect x="0.5" y="5" width="9" height="4.5" fill="#f0d020" stroke="#333" stroke-width="0.6"/><path d="M0.5 7.2H9.5" stroke="#d02020" stroke-width="0.9" stroke-dasharray="1 0.6"/><text x="6.5" y="4.3" font-size="4.5" font-family="Liberation Sans" text-anchor="middle">1.2</text></svg>
<div class="t" style="left:833px;top:462.9px">Dimensioning parameters</div>
<svg class="a" style="left:821.0px;top:477.9px" width="10" height="10" viewBox="0 0 10 10"><path d="M2 9V5H5V1.5H8V9Z" fill="#d01010" stroke="#600" stroke-width="0.6"/></svg>
<div class="t" style="left:833px;top:477.9px">Macroelement dimensioning</div>
<div class="a" style="left:819px;top:491.5px;width:105px;height:1px;background:#b4b4b4"></div>
<div class="a" style="left:818px;top:494.6px;width:107px;height:14px;background:#c6dcf2;border:1px dotted #9ec4ea"></div>
<svg class="a" style="left:821.0px;top:497.0px" width="10" height="10" viewBox="0 0 10 10"><rect x="0.5" y="5" width="9" height="4.5" fill="#f0d020" stroke="#333" stroke-width="0.6"/><path d="M0.5 7.2H9.5" stroke="#d02020" stroke-width="1"/><path d="M5 0V4" stroke="#d02020" stroke-width="0.9"/><path d="M3.5 3L5 5L6.5 3Z" fill="#d02020"/></svg>
<div class="t" style="left:833px;top:497.0px">Analysis</div>
<svg class="a" style="left:821.0px;top:511.7px" width="10" height="10" viewBox="0 0 10 10"><circle cx="2.5" cy="4.5" r="2" fill="#d01010" stroke="#222" stroke-width="0.5"/><path d="M4 4.5H6" stroke="#222"/><rect x="5.5" y="0.5" width="4" height="9" fill="#8a8a30" stroke="#222" stroke-width="0.6"/></svg>
<div class="t" style="left:833px;top:511.7px">Values</div>
<svg class="a" style="left:821.0px;top:526.7px" width="10" height="10" viewBox="0 0 10 10"><rect x="0.5" y="0.5" width="9" height="9" fill="#f0e020" stroke="#333" stroke-width="0.6"/><path d="M0.5 3H9.5M0.5 5.5H9.5M0.5 8H9.5" stroke="#8a8a30" stroke-width="0.5"/><path d="M0.5 9.5C3 6 6 2 9.5 1" stroke="#e02020" stroke-width="1.1" fill="none"/></svg>
<div class="t" style="left:833px;top:526.7px">Distributions</div>
<div class="a" style="left:816px;top:551.6px;width:111px;height:12.5px;background:#d6d6d6"></div>
<div class="t" style="left:818px;top:553px;font-size:8.5px">Outputs</div>
<div class="a" style="left:917px;top:559px;width:6px;height:2px;background:#111"></div>
<div class="a" style="left:818px;top:566px;width:108px;height:14.5px;background:#d8e4f0;border:1px dotted #c0d4ea"></div>
<svg class="a" style="left:820px;top:567px" width="12" height="12" viewBox="0 0 12 12"><rect x="0.5" y="0.5" width="11" height="11" fill="#eee" stroke="#555" stroke-width="0.7"/><rect x="2" y="3" width="4" height="3" fill="none" stroke="#222" stroke-width="0.8"/><rect x="2" y="7" width="4" height="3" fill="none" stroke="#222" stroke-width="0.8"/><path d="M9 1.5V6M6.8 3.8H11.2" stroke="#10a030" stroke-width="1.6"/></svg>
<div class="t" style="left:833px;top:568.5px">Add picture</div>
<div class="t" style="left:818px;top:584px">Analysis :</div>
<div class="t" style="left:920px;top:584px">0</div>
<div class="t" style="left:818px;top:598px">Total :</div>
<div class="t" style="left:920px;top:598px">0</div>
<div class="a" style="left:818px;top:610px;width:108px;height:14px;background:#d8e4f0;border:1px dotted #c0d4ea"></div>
<svg class="a" style="left:820px;top:611px" width="12" height="12" viewBox="0 0 12 12"><rect x="0.5" y="0.5" width="11" height="11" fill="#eee" stroke="#555" stroke-width="0.7"/><rect x="2" y="3" width="4" height="3" fill="none" stroke="#222" stroke-width="0.8"/><rect x="2" y="7" width="4" height="3" fill="none" stroke="#222" stroke-width="0.8"/><path d="M8 2V10M10 2V10" stroke="#444" stroke-width="0.8"/></svg>
<div class="t" style="left:833px;top:612.5px">List of pictures</div>
<div class="a" style="left:820px;top:628.5px;width:104px;height:1px;background:#a8a8a8"></div>
<div class="a" style="left:818px;top:633.5px;width:52px;height:27px;background:#d8e4f0;border:1px dotted #c0d4ea"></div>
<div class="a" style="left:874px;top:633.5px;width:52px;height:27px;background:#d8e4f0;border:1px dotted #c0d4ea"></div>
<svg class="a" style="left:834px;top:637px" width="20" height="21" viewBox="0 0 20 21"><rect x="4" y="1" width="11" height="5" fill="#fff" stroke="#333" stroke-width="0.8"/><rect x="1" y="5.5" width="17" height="9" rx="1.5" fill="#c8a870" stroke="#333" stroke-width="0.9"/><rect x="5" y="11" width="9" height="8" fill="#fff" stroke="#333" stroke-width="0.7"/><path d="M6.5 13H12.5M6.5 15H12.5M6.5 17H12.5" stroke="#555" stroke-width="1"/></svg>
<svg class="a" style="left:889px;top:637px" width="20" height="21" viewBox="0 0 20 21"><rect x="4" y="1" width="11" height="5" fill="#fff" stroke="#333" stroke-width="0.8"/><rect x="1" y="5.5" width="17" height="9" rx="1.5" fill="#c8a870" stroke="#333" stroke-width="0.9"/><rect x="5" y="11" width="9" height="8" fill="#fff" stroke="#333" stroke-width="0.7"/><path d="M6 12L13 18" stroke="#e02020" stroke-width="2.4"/></svg>
<div class="a" style="left:818px;top:663.5px;width:108px;height:14.5px;background:#d8e4f0;border:1px dotted #c0d4ea"></div>
<svg class="a" style="left:820px;top:664px" width="12" height="13" viewBox="0 0 12 13"><rect x="0.5" y="0.5" width="6" height="8" fill="#eee" stroke="#555" stroke-width="0.7"/><path d="M7 5V9L9 8" stroke="#10a030" stroke-width="1" fill="none"/><rect x="5.5" y="8" width="6" height="4.5" fill="#ddd" stroke="#444" stroke-width="0.7"/></svg>
<div class="t" style="left:833px;top:666px">Copy view</div>
<svg class="a" style="left:919px;top:689px" width="8" height="8"><path d="M6 1h1M4 3h1M6 3h1M2 5h1M4 5h1M6 5h1" stroke="#999"/></svg>
</div>
<!-- bottom panel -->
<div class="a" style="left:3px;top:553px;width:13px;height:127px;background:#d2d2d2"></div>
<div class="a" style="left:8px;top:557px;width:2px;height:5px;background:#222"></div>
<div class="vt" style="left:4px;top:677px;font-size:8.2px">Analysis</div>
<div class="a" style="left:18px;top:553px;width:795px;height:17px;background:#ececec"></div>
<div class="a" style="left:18px;top:556px;width:5px;height:13px;background:#10b020"></div>
<div class="a" style="left:23px;top:556px;width:48px;height:13px;background:#d6e4f2;border:1px dotted #b0c8e0"></div>
<svg class="a" style="left:26px;top:557px" width="10" height="10" viewBox="0 0 10 10"><rect x="0.6" y="0.6" width="8.8" height="8.8" rx="1.5" fill="#e8ecf8" stroke="#223388" stroke-width="1.1"/><path d="M3 2.3L7.5 5 3 7.7Z" fill="#223388"/></svg>
<div class="t" style="left:37.8px;top:557px;font-size:8.6px;transform:scaleX(0.82)">Analyze</div>
<div class="a" style="left:20px;top:574px;width:790px;height:104px;background:#fff;border-left:1px solid #a0a0a0;border-top:1px solid #a0a0a0"></div>
<div class="a" style="left:797px;top:575px;width:12px;height:102px;background:#f0f0f0"></div>
<svg class="a" style="left:799px;top:578px" width="8" height="96"><path d="M1 6L4 3L7 6" stroke="#a8a8a8" fill="none"/><path d="M1 89L4 92L7 89" stroke="#a8a8a8" fill="none"/></svg>
<div class="t b" style="left:26px;top:578px;font-size:9px;transform:scaleX(0.8)">Analysis result</div>
<div class="t" style="left:26px;top:595.5px;font-size:8.6px;transform:scaleX(0.855);color:#18a018">Analysis terminated without errors.</div>
<div class="a" style="left:0;top:682px;width:930px;height:1px;background:#d0d0d0"></div>
<div class="a" style="left:0;top:698px;width:930px;height:2px;background:#a0a0a0"></div>
</body></html>
